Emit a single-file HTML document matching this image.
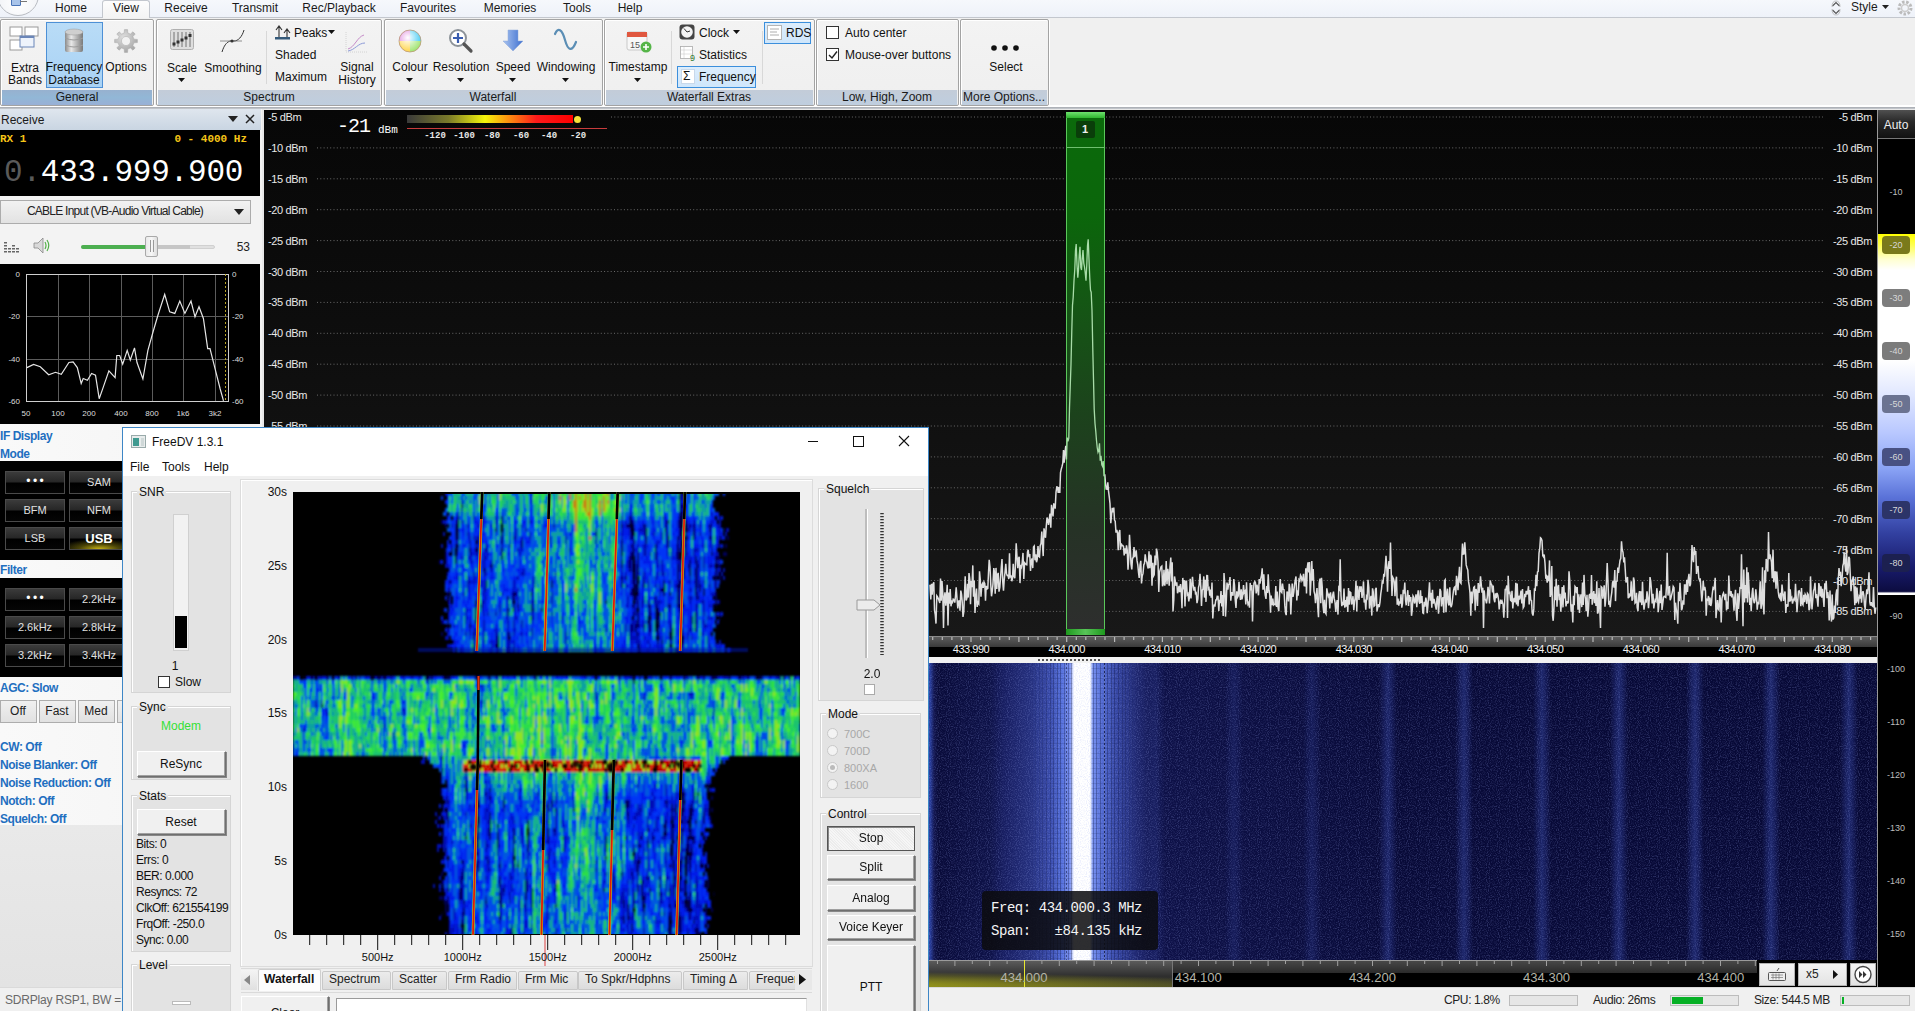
<!DOCTYPE html>
<html><head><meta charset="utf-8"><style>
html,body{margin:0;padding:0;}
body{width:1915px;height:1011px;overflow:hidden;position:relative;background:#f0f0f0;font-family:"Liberation Sans", sans-serif;font-size:12px;color:#000;}
</style></head><body>
<div style="position:absolute;left:0px;top:0px;width:1915px;height:18px;background:linear-gradient(#f6f8fc,#eef2f9);border-bottom:1px solid #c3c7ce;box-sizing:border-box"></div><div style="position:absolute;left:-3px;top:-26px;width:42px;height:42px;border-radius:50%;border:1px solid #b9bcc2;background:radial-gradient(circle at 50% 70%,#ffffff,#e9ecf2);box-sizing:border-box"></div><div style="position:absolute;left:11px;top:-3px;width:8px;height:7px;border:1px solid #4a74b8;background:#a9c4ea;border-radius:1px"></div><div style="position:absolute;left:20px;top:1px;width:7px;height:1px;background:#777"></div><div style="position:absolute;left:102px;top:0px;width:48px;height:19px;background:linear-gradient(#fdfdfd,#f3f3f3);border:1px solid #c3c7ce;border-bottom:none;border-radius:3px 3px 0 0;box-sizing:border-box"></div><div style="position:absolute;left:-129px;width:400px;text-align:center;top:1px;white-space:nowrap;font-size:12px;line-height:14px;color:#1a1a1a">Home</div><div style="position:absolute;left:-74px;width:400px;text-align:center;top:1px;white-space:nowrap;font-size:12px;line-height:14px;color:#1a1a1a">View</div><div style="position:absolute;left:-14px;width:400px;text-align:center;top:1px;white-space:nowrap;font-size:12px;line-height:14px;color:#1a1a1a">Receive</div><div style="position:absolute;left:55px;width:400px;text-align:center;top:1px;white-space:nowrap;font-size:12px;line-height:14px;color:#1a1a1a">Transmit</div><div style="position:absolute;left:139px;width:400px;text-align:center;top:1px;white-space:nowrap;font-size:12px;line-height:14px;color:#1a1a1a">Rec/Playback</div><div style="position:absolute;left:228px;width:400px;text-align:center;top:1px;white-space:nowrap;font-size:12px;line-height:14px;color:#1a1a1a">Favourites</div><div style="position:absolute;left:310px;width:400px;text-align:center;top:1px;white-space:nowrap;font-size:12px;line-height:14px;color:#1a1a1a">Memories</div><div style="position:absolute;left:377px;width:400px;text-align:center;top:1px;white-space:nowrap;font-size:12px;line-height:14px;color:#1a1a1a">Tools</div><div style="position:absolute;left:430px;width:400px;text-align:center;top:1px;white-space:nowrap;font-size:12px;line-height:14px;color:#1a1a1a">Help</div><div style="position:absolute;left:1851px;top:0px;white-space:nowrap;font-size:12px;line-height:14px;color:#1a1a1a">Style</div><svg style="position:absolute;left:1830px;top:0px" width="12" height="16"><path d="M2.5 6 L6 2.5 L9.5 6 M2.5 10 L6 13.5 L9.5 10" fill="none" stroke="#555" stroke-width="1.1"/><path d="M2 7 Q2 1 6 1 Q10 1 10 7 M2 9 Q2 15 6 15 Q10 15 10 9" fill="none" stroke="#aaa" stroke-width="0.7"/></svg><svg style="position:absolute;left:1882px;top:4px" width="8" height="6"><path d="M0 1 L7 1 L3.5 5z" fill="#222"/></svg><svg style="position:absolute;left:1895px;top:-1px" width="20" height="18"><circle cx="10" cy="9" r="6" fill="none" stroke="#bbb" stroke-width="3" stroke-dasharray="2.5 1.6"/><circle cx="10" cy="9" r="3.5" fill="none" stroke="#ccc" stroke-width="1.5"/></svg><div style="position:absolute;left:0px;top:18px;width:1915px;height:90px;background:#f0f0f0"></div><div style="position:absolute;left:0px;top:105px;width:1915px;height:2px;background:#ffffff"></div><div style="position:absolute;left:0px;top:107px;width:1915px;height:2px;background:linear-gradient(#a4a8ae,#c9ccd1)"></div><div style="position:absolute;left:0px;top:19px;width:154px;height:87px;border:1px solid #a3a3a3;border-radius:2px;box-sizing:border-box;background:linear-gradient(#f3f3f3,#efefef);box-shadow:inset 1px 1px 0 #fff, 1px 0 0 #fff"></div><div style="position:absolute;left:2px;top:90px;width:150px;height:15px;background:linear-gradient(#97b1cf,#92b7d6 50%,#98b0d6)"></div><div style="position:absolute;left:-123px;width:400px;text-align:center;top:90px;white-space:nowrap;font-size:12px;line-height:15px;color:#1a1a1a">General</div><div style="position:absolute;left:156px;top:19px;width:226px;height:87px;border:1px solid #a3a3a3;border-radius:2px;box-sizing:border-box;background:linear-gradient(#f3f3f3,#efefef);box-shadow:inset 1px 1px 0 #fff, 1px 0 0 #fff"></div><div style="position:absolute;left:158px;top:90px;width:222px;height:15px;background:linear-gradient(#c3ccd8,#bfcedf)"></div><div style="position:absolute;left:69px;width:400px;text-align:center;top:90px;white-space:nowrap;font-size:12px;line-height:15px;color:#1a1a1a">Spectrum</div><div style="position:absolute;left:384px;top:19px;width:219px;height:87px;border:1px solid #a3a3a3;border-radius:2px;box-sizing:border-box;background:linear-gradient(#f3f3f3,#efefef);box-shadow:inset 1px 1px 0 #fff, 1px 0 0 #fff"></div><div style="position:absolute;left:386px;top:90px;width:215px;height:15px;background:linear-gradient(#c3ccd8,#bfcedf)"></div><div style="position:absolute;left:293px;width:400px;text-align:center;top:90px;white-space:nowrap;font-size:12px;line-height:15px;color:#1a1a1a">Waterfall</div><div style="position:absolute;left:604px;top:19px;width:211px;height:87px;border:1px solid #a3a3a3;border-radius:2px;box-sizing:border-box;background:linear-gradient(#f3f3f3,#efefef);box-shadow:inset 1px 1px 0 #fff, 1px 0 0 #fff"></div><div style="position:absolute;left:606px;top:90px;width:207px;height:15px;background:linear-gradient(#c3ccd8,#bfcedf)"></div><div style="position:absolute;left:509px;width:400px;text-align:center;top:90px;white-space:nowrap;font-size:12px;line-height:15px;color:#1a1a1a">Waterfall Extras</div><div style="position:absolute;left:816px;top:19px;width:143px;height:87px;border:1px solid #a3a3a3;border-radius:2px;box-sizing:border-box;background:linear-gradient(#f3f3f3,#efefef);box-shadow:inset 1px 1px 0 #fff, 1px 0 0 #fff"></div><div style="position:absolute;left:818px;top:90px;width:139px;height:15px;background:linear-gradient(#c3ccd8,#bfcedf)"></div><div style="position:absolute;left:687px;width:400px;text-align:center;top:90px;white-space:nowrap;font-size:12px;line-height:15px;color:#1a1a1a">Low, High, Zoom</div><div style="position:absolute;left:960px;top:19px;width:89px;height:87px;border:1px solid #a3a3a3;border-radius:2px;box-sizing:border-box;background:linear-gradient(#f3f3f3,#efefef);box-shadow:inset 1px 1px 0 #fff, 1px 0 0 #fff"></div><div style="position:absolute;left:962px;top:90px;width:85px;height:15px;background:linear-gradient(#c3ccd8,#bfcedf)"></div><div style="position:absolute;left:804px;width:400px;text-align:center;top:90px;white-space:nowrap;font-size:12px;line-height:15px;color:#1a1a1a">More Options...</div><svg style="position:absolute;left:9px;top:26px" width="30" height="26">
<rect x="1" y="1" width="12" height="9" fill="#fff" stroke="#9a9a9a"/><rect x="16" y="1" width="13" height="9" fill="#fff" stroke="#9a9a9a"/>
<rect x="1" y="14" width="12" height="10" fill="#fff" stroke="#9a9a9a"/><rect x="11" y="10" width="14" height="11" fill="#eef3fb" stroke="#6b86b8"/><rect x="11" y="10" width="14" height="2" fill="#6b86b8"/></svg><div style="position:absolute;left:-175px;width:400px;text-align:center;top:62px;white-space:nowrap;font-size:12px;line-height:13px;color:#111">Extra</div><div style="position:absolute;left:-175px;width:400px;text-align:center;top:74px;white-space:nowrap;font-size:12px;line-height:13px;color:#111">Bands</div><div style="position:absolute;left:46px;top:22px;width:57px;height:66px;background:linear-gradient(#b9dcf7,#a9d2f4);border:1px solid #4d90d6;box-sizing:border-box"></div><svg style="position:absolute;left:63px;top:28px" width="22" height="27">
<defs><linearGradient id="db" x1="0" x2="1"><stop offset="0" stop-color="#8a8a8a"/><stop offset="0.35" stop-color="#e8e8e8"/><stop offset="1" stop-color="#7a7a7a"/></linearGradient></defs>
<rect x="2" y="3" width="18" height="21" rx="2" fill="url(#db)"/>
<ellipse cx="11" cy="4" rx="9" ry="3" fill="#cfcfcf" stroke="#999" stroke-width="0.5"/>
<path d="M2 10 Q11 14 20 10 M2 17 Q11 21 20 17" stroke="#9c9c9c" fill="none"/></svg><div style="position:absolute;left:-126px;width:400px;text-align:center;top:61px;white-space:nowrap;font-size:12px;line-height:13px;color:#111">Frequency</div><div style="position:absolute;left:-126px;width:400px;text-align:center;top:74px;white-space:nowrap;font-size:12px;line-height:13px;color:#111">Database</div><svg style="position:absolute;left:113px;top:28px" width="26" height="26"><defs><radialGradient id="gg" cx="0.4" cy="0.35" r="0.8"><stop offset="0" stop-color="#e0e0e0"/><stop offset="1" stop-color="#9a9a9a"/></radialGradient></defs>
<path d="M21.0 11.2 L24.4 11.4 L24.4 14.6 L21.0 14.8 L19.9 17.4 L22.2 19.9 L19.9 22.2 L17.4 19.9 L14.8 21.0 L14.6 24.4 L11.4 24.4 L11.2 21.0 L8.6 19.9 L6.1 22.2 L3.8 19.9 L6.1 17.4 L5.0 14.8 L1.6 14.6 L1.6 11.4 L5.0 11.2 L6.1 8.6 L3.8 6.1 L6.1 3.8 L8.6 6.1 L11.2 5.0 L11.4 1.6 L14.6 1.6 L14.8 5.0 L17.4 6.1 L19.9 3.8 L22.2 6.1 L19.9 8.6Z M13 8.5 A4.5 4.5 0 1 0 13.01 8.5Z" fill="url(#gg)" fill-rule="evenodd" stroke="#a8a8a8" stroke-width="0.5"/></svg><div style="position:absolute;left:-74px;width:400px;text-align:center;top:61px;white-space:nowrap;font-size:12px;line-height:13px;color:#111">Options</div><svg style="position:absolute;left:170px;top:29px" width="25" height="22">
<rect x="0.5" y="0.5" width="23" height="20" rx="2" fill="#dedede" stroke="#b0b0b0"/>
<path d="M4 3v15M8 3v15M12 3v15M16 3v15M20 3v15" stroke="#666" stroke-width="0.9"/><rect x="2.5" y="13.5" width="3" height="3" fill="#333"/><rect x="6.5" y="11.5" width="3" height="3" fill="#333"/><rect x="10.5" y="9.5" width="3" height="3" fill="#333"/><rect x="14.5" y="7.5" width="3" height="3" fill="#333"/><rect x="18.5" y="5" width="3" height="3" fill="#333"/></svg><div style="position:absolute;left:-18px;width:400px;text-align:center;top:62px;white-space:nowrap;font-size:12px;line-height:13px;color:#111">Scale</div><svg style="position:absolute;left:178px;top:78px" width="8" height="5"><path d="M0 0 L7 0 L3.5 4z" fill="#111"/></svg><svg style="position:absolute;left:220px;top:29px" width="26" height="24"><path d="M2 23 C6 10 12 12 14 12 C18 12 22 8 24 1" fill="none" stroke="#333" stroke-width="1"/>
<path d="M0 12 H22" stroke="#777" stroke-width="0.8"/><circle cx="12" cy="12" r="1.6" fill="#333"/></svg><div style="position:absolute;left:33px;width:400px;text-align:center;top:62px;white-space:nowrap;font-size:12px;line-height:13px;color:#111">Smoothing</div><div style="position:absolute;left:266px;top:31px;width:1px;height:53px;background:#d8d8d8"></div><svg style="position:absolute;left:274px;top:25px" width="18" height="15"><path d="M5 12V2 M2 5 L5 1 L8 5 M13 12V5 M10 8 L13 4 L16 8" fill="none" stroke="#333" stroke-width="1.1"/><rect x="1" y="12" width="15" height="2.5" fill="#355a7a"/></svg><div style="position:absolute;left:294px;top:26px;white-space:nowrap;font-size:12px;line-height:14px;color:#111">Peaks</div><svg style="position:absolute;left:328px;top:30px" width="8" height="5"><path d="M0 0 L7 0 L3.5 4z" fill="#111"/></svg><div style="position:absolute;left:275px;top:48px;white-space:nowrap;font-size:12px;line-height:14px;color:#111">Shaded</div><div style="position:absolute;left:275px;top:70px;white-space:nowrap;font-size:12px;line-height:14px;color:#111">Maximum</div><svg style="position:absolute;left:345px;top:31px" width="24" height="23"><path d="M1 1V21H23" fill="none" stroke="#ccc" stroke-width="0.8" stroke-dasharray="1 1"/>
<path d="M3 18 C10 16 12 6 19 4" fill="none" stroke="#c58ac8" stroke-width="1"/><path d="M3 20 C10 19 13 12 20 12" fill="none" stroke="#8c9ad8" stroke-width="1"/></svg><div style="position:absolute;left:157px;width:400px;text-align:center;top:61px;white-space:nowrap;font-size:12px;line-height:13px;color:#111">Signal</div><div style="position:absolute;left:157px;width:400px;text-align:center;top:74px;white-space:nowrap;font-size:12px;line-height:13px;color:#111">History</div><svg style="position:absolute;left:398px;top:29px" width="24" height="24"><defs>
<radialGradient id="cw" cx="0.4" cy="0.35" r="0.7"><stop offset="0" stop-color="#fff"/><stop offset="1" stop-color="#fff" stop-opacity="0"/></radialGradient></defs>
<circle cx="12" cy="12" r="11" fill="#ff66aa"/><path d="M12 12 L12 1 A11 11 0 0 1 23 12z" fill="#36c8f4"/><path d="M12 12 L23 12 A11 11 0 0 1 12 23z" fill="#9be36a"/><path d="M12 12 L12 23 A11 11 0 0 1 1 12z" fill="#ffd23c"/><path d="M12 12 L1 12 A11 11 0 0 1 12 1z" fill="#d86ad8"/>
<circle cx="12" cy="12" r="11" fill="url(#cw)"/><circle cx="12" cy="12" r="11" fill="none" stroke="#b9a27a" stroke-width="0.8"/></svg><div style="position:absolute;left:210px;width:400px;text-align:center;top:61px;white-space:nowrap;font-size:12px;line-height:13px;color:#111">Colour</div><svg style="position:absolute;left:406px;top:78px" width="8" height="5"><path d="M0 0 L7 0 L3.5 4z" fill="#111"/></svg><svg style="position:absolute;left:448px;top:28px" width="26" height="26"><circle cx="10" cy="10" r="8" fill="#fff" stroke="#8d9399" stroke-width="2"/>
<path d="M10 5v10M5 10h10" stroke="#3a5db0" stroke-width="2.2"/><path d="M16 16 L23 23" stroke="#555" stroke-width="3.2" stroke-linecap="round"/></svg><div style="position:absolute;left:261px;width:400px;text-align:center;top:61px;white-space:nowrap;font-size:12px;line-height:13px;color:#111">Resolution</div><svg style="position:absolute;left:457px;top:78px" width="8" height="5"><path d="M0 0 L7 0 L3.5 4z" fill="#111"/></svg><svg style="position:absolute;left:501px;top:29px" width="24" height="24"><defs><linearGradient id="sp" x1="0" x2="1"><stop offset="0" stop-color="#a9c3ef"/><stop offset="1" stop-color="#3c6fd0"/></linearGradient></defs>
<path d="M7 1H17V12H22L12 22L2 12H7z" fill="url(#sp)" stroke="#8fa9d8" stroke-width="0.5"/></svg><div style="position:absolute;left:313px;width:400px;text-align:center;top:61px;white-space:nowrap;font-size:12px;line-height:13px;color:#111">Speed</div><svg style="position:absolute;left:509px;top:78px" width="8" height="5"><path d="M0 0 L7 0 L3.5 4z" fill="#111"/></svg><svg style="position:absolute;left:553px;top:28px" width="26" height="25"><path d="M2 6 C5 -1 9 1 12 12 C15 23 19 24 23 14" fill="none" stroke="#5b8eb5" stroke-width="2.2" stroke-linecap="round"/></svg><div style="position:absolute;left:366px;width:400px;text-align:center;top:61px;white-space:nowrap;font-size:12px;line-height:13px;color:#111">Windowing</div><svg style="position:absolute;left:562px;top:78px" width="8" height="5"><path d="M0 0 L7 0 L3.5 4z" fill="#111"/></svg><svg style="position:absolute;left:626px;top:28px" width="27" height="26"><rect x="1" y="4" width="20" height="18" rx="2" fill="#f7f7f7" stroke="#c9c9c9"/>
<rect x="1" y="4" width="20" height="5" fill="#e0573f"/><text x="4" y="20" font-size="9" font-family="Liberation Sans" fill="#555">15</text>
<circle cx="20" cy="19" r="5.5" fill="#55b548"/><path d="M20 16v6M17 19h6" stroke="#fff" stroke-width="1.6"/></svg><div style="position:absolute;left:438px;width:400px;text-align:center;top:61px;white-space:nowrap;font-size:12px;line-height:13px;color:#111">Timestamp</div><svg style="position:absolute;left:634px;top:78px" width="8" height="5"><path d="M0 0 L7 0 L3.5 4z" fill="#111"/></svg><div style="position:absolute;left:671px;top:31px;width:1px;height:53px;background:#d8d8d8"></div><svg style="position:absolute;left:679px;top:24px" width="16" height="16"><rect x="0.5" y="0.5" width="15" height="15" rx="3" fill="#444"/><circle cx="8" cy="8" r="5.8" fill="#f4f4f4"/><path d="M8 8 L5 4.5 M8 8 L11 7" stroke="#333" stroke-width="1"/></svg><div style="position:absolute;left:699px;top:26px;white-space:nowrap;font-size:12px;line-height:14px;color:#111">Clock</div><svg style="position:absolute;left:733px;top:30px" width="8" height="5"><path d="M0 0 L7 0 L3.5 4z" fill="#111"/></svg><svg style="position:absolute;left:680px;top:46px" width="18" height="16"><rect x="0.5" y="0.5" width="12" height="12" fill="#fff" stroke="#aaa" stroke-width="0.8"/><path d="M1 4H12M1 8H12M4 1V12" stroke="#ccc" stroke-width="0.6"/><text x="10" y="15" font-size="9" font-family="Liberation Sans" fill="#2f7d2f">9</text></svg><div style="position:absolute;left:699px;top:48px;white-space:nowrap;font-size:12px;line-height:14px;color:#111">Statistics</div><div style="position:absolute;left:677px;top:66px;width:79px;height:22px;background:linear-gradient(#dcedfc,#cfe6fb);border:1px solid #3c8fdc;box-sizing:border-box"></div><div style="position:absolute;left:681px;top:69px;width:14px;height:15px;background:#fff;border:1px solid #c8d8ea;box-sizing:border-box"></div><div style="position:absolute;left:683px;top:69px;white-space:nowrap;font-size:12px;line-height:15px;color:#111">&Sigma;</div><div style="position:absolute;left:699px;top:70px;white-space:nowrap;font-size:12px;line-height:14px;color:#111">Frequency</div><div style="position:absolute;left:762px;top:31px;width:1px;height:53px;background:#d8d8d8"></div><div style="position:absolute;left:764px;top:22px;width:47px;height:22px;background:linear-gradient(#dcedfc,#cfe6fb);border:1px solid #3c8fdc;box-sizing:border-box"></div><svg style="position:absolute;left:767px;top:25px" width="16" height="16"><rect x="0.5" y="0.5" width="14" height="14" fill="#fff" stroke="#b5b5b5"/><path d="M3 4H12M3 7H10M3 10H12" stroke="#999" stroke-width="0.8"/></svg><div style="position:absolute;left:786px;top:26px;white-space:nowrap;font-size:12px;line-height:14px;color:#111">RDS</div><div style="position:absolute;left:826px;top:26px;width:13px;height:13px;background:#fff;border:1px solid #333;box-sizing:border-box"></div><div style="position:absolute;left:845px;top:26px;white-space:nowrap;font-size:12px;line-height:14px;color:#111">Auto center</div><div style="position:absolute;left:826px;top:48px;width:13px;height:13px;background:#fff;border:1px solid #333;box-sizing:border-box"></div><svg style="position:absolute;left:828px;top:50px" width="10" height="10"><path d="M1 5 L4 8 L9 1.5" fill="none" stroke="#222" stroke-width="1.4"/></svg><div style="position:absolute;left:845px;top:48px;white-space:nowrap;font-size:12px;line-height:14px;color:#111">Mouse-over buttons</div><svg style="position:absolute;left:990px;top:44px" width="30" height="8"><circle cx="4" cy="4" r="2.8" fill="#111"/><circle cx="15" cy="4" r="2.8" fill="#111"/><circle cx="26" cy="4" r="2.8" fill="#111"/></svg><div style="position:absolute;left:806px;width:400px;text-align:center;top:61px;white-space:nowrap;font-size:12px;line-height:13px;color:#111">Select</div><div style="position:absolute;left:0px;top:109px;width:262px;height:878px;background:#f3f3f3"></div><div style="position:absolute;left:0px;top:109px;width:261px;height:21px;background:linear-gradient(#dfe6ee,#c9d5e2)"></div><div style="position:absolute;left:1px;top:113px;white-space:nowrap;font-size:12px;line-height:14px;color:#1a1a1a">Receive</div><svg style="position:absolute;left:228px;top:116px" width="11" height="7"><path d="M0 0 L10 0 L5 6z" fill="#222"/></svg><svg style="position:absolute;left:245px;top:114px" width="10" height="10"><path d="M1 1 L9 9 M9 1 L1 9" stroke="#222" stroke-width="1.5"/></svg><div style="position:absolute;left:0px;top:130px;width:260px;height:66px;background:#000"></div><div style="position:absolute;left:0px;top:132px;white-space:nowrap;font-family:'Liberation Mono', monospace;font-weight:bold;font-size:11px;line-height:14px;color:#f5c518">RX 1</div><div style="position:absolute;left:-153px;width:400px;text-align:right;top:132px;white-space:nowrap;font-family:'Liberation Mono', monospace;font-weight:bold;font-size:11px;line-height:14px;color:#f5c518">0 - 4000 Hz</div><div style="position:absolute;left:4px;top:155px;white-space:nowrap;font-family:'Liberation Mono', monospace;font-size:31px;line-height:36px;color:#fff;letter-spacing:-0.2px"><span style="color:#5a5a5a">0.</span>433.999.900</div><div style="position:absolute;left:0px;top:200px;width:251px;height:24px;background:linear-gradient(#f2f2f2,#e2e2e2);border:1px solid #acacac;box-sizing:border-box"></div><div style="position:absolute;left:-85px;width:400px;text-align:center;top:204px;white-space:nowrap;font-size:12px;line-height:15px;color:#222;letter-spacing:-0.75px">CABLE Input (VB-Audio Virtual Cable)</div><svg style="position:absolute;left:234px;top:209px" width="11" height="7"><path d="M0 0 L10 0 L5 6z" fill="#222"/></svg><svg style="position:absolute;left:3px;top:238px" width="18" height="15"><g fill="#666">
<rect x="1" y="4" width="3" height="1.5"/><rect x="1" y="7" width="3" height="1.5"/><rect x="1" y="10" width="3" height="1.5"/><rect x="1" y="13" width="3" height="1.5"/>
<rect x="5" y="10" width="3" height="1.5"/><rect x="5" y="13" width="3" height="1.5"/>
<rect x="9" y="7" width="3" height="1.5"/><rect x="9" y="10" width="3" height="1.5"/><rect x="9" y="13" width="3" height="1.5"/>
<rect x="13" y="10" width="3" height="1.5"/><rect x="13" y="13" width="3" height="1.5"/></g></svg><svg style="position:absolute;left:33px;top:237px" width="18" height="17"><path d="M1 6H5L10 1V16L5 11H1z" fill="#d9d9d9" stroke="#888" stroke-width="0.8"/>
<path d="M12 5 Q14 8.5 12 12 M14 3 Q17.5 8.5 14 14" fill="none" stroke="#54b04a" stroke-width="1.2"/></svg><div style="position:absolute;left:81px;top:245px;width:134px;height:4px;background:#e0e0e0;border:1px solid #d0d0d0;border-radius:2px;box-sizing:border-box"></div><div style="position:absolute;left:81px;top:245px;width:68px;height:4px;background:#4caf50;border-radius:2px"></div><div style="position:absolute;left:158px;top:245px;width:32px;height:4px;background:#c6c6c6"></div><div style="position:absolute;left:145px;top:236px;width:13px;height:21px;background:linear-gradient(90deg,#e9e9e9,#f7f7f7,#dedede);border:1px solid #a9a9a9;border-radius:2px;box-sizing:border-box"></div><div style="position:absolute;left:150px;top:240px;width:1px;height:12px;background:#999"></div><div style="position:absolute;left:153px;top:240px;width:1px;height:12px;background:#999"></div><div style="position:absolute;left:-150px;width:400px;text-align:right;top:240px;white-space:nowrap;font-size:12px;line-height:14px;color:#222">53</div><div style="position:absolute;left:0px;top:264px;width:260px;height:160px;background:#000"></div><svg style="position:absolute;left:0;top:264px" width="260" height="160"><path d="M58.5 10 V137" stroke="#5c5c5c" stroke-width="1"/><path d="M89.5 10 V137" stroke="#5c5c5c" stroke-width="1"/><path d="M121.5 10 V137" stroke="#5c5c5c" stroke-width="1"/><path d="M152.5 10 V137" stroke="#5c5c5c" stroke-width="1"/><path d="M183.5 10 V137" stroke="#5c5c5c" stroke-width="1"/><path d="M215.5 10 V137" stroke="#5c5c5c" stroke-width="1"/><path d="M27 52.5 H229" stroke="#5c5c5c" stroke-width="1"/><path d="M27 95.5 H229" stroke="#5c5c5c" stroke-width="1"/><rect x="26.5" y="10.5" width="202" height="127" fill="none" stroke="#cfcfcf" stroke-width="1"/><path d="M225.5 10 V137" stroke="#b8a52a" stroke-width="1" stroke-dasharray="2 2"/><polyline fill="none" stroke="#e6e6e6" stroke-width="1.2" points="26.9,103.6 33.6,100.5 40.3,102.7 48.7,110.8 55.5,108.3 61.3,110.3 68.9,98.5 73.1,98.0 77.3,103.6 81.2,119.5 83.2,114.5 87.4,116.2 91.6,109.4 95.5,111.1 99.2,134.7 102.5,125.4 108.9,106.9 115.1,113.6 116.8,91.5 119.7,91.5 122.7,100.2 127.2,86.4 130.3,96.0 134.5,83.9 137.0,98.5 142.9,115.0 147.9,86.4 153.0,68.0 158.0,51.0 164.7,30.3 169.7,47.8 174.8,49.4 179.8,37.0 184.9,49.4 191.0,37.0 195.0,52.8 199.0,42.7 203.4,54.5 207.7,84.7 210.0,84.7 215.1,104.9 220.2,125.0 223.5,136.8"/><text x="20" y="13" text-anchor="end" font-size="8" font-family="Liberation Sans" fill="#ddd">0</text><text x="232" y="13" font-size="8" font-family="Liberation Sans" fill="#ddd">0</text><text x="20" y="55" text-anchor="end" font-size="8" font-family="Liberation Sans" fill="#ddd">-20</text><text x="232" y="55" font-size="8" font-family="Liberation Sans" fill="#ddd">-20</text><text x="20" y="98" text-anchor="end" font-size="8" font-family="Liberation Sans" fill="#ddd">-40</text><text x="232" y="98" font-size="8" font-family="Liberation Sans" fill="#ddd">-40</text><text x="20" y="140" text-anchor="end" font-size="8" font-family="Liberation Sans" fill="#ddd">-60</text><text x="232" y="140" font-size="8" font-family="Liberation Sans" fill="#ddd">-60</text><text x="26" y="152" text-anchor="middle" font-size="8" font-family="Liberation Sans" fill="#ddd">50</text><text x="58" y="152" text-anchor="middle" font-size="8" font-family="Liberation Sans" fill="#ddd">100</text><text x="89" y="152" text-anchor="middle" font-size="8" font-family="Liberation Sans" fill="#ddd">200</text><text x="121" y="152" text-anchor="middle" font-size="8" font-family="Liberation Sans" fill="#ddd">400</text><text x="152" y="152" text-anchor="middle" font-size="8" font-family="Liberation Sans" fill="#ddd">800</text><text x="183" y="152" text-anchor="middle" font-size="8" font-family="Liberation Sans" fill="#ddd">1k6</text><text x="215" y="152" text-anchor="middle" font-size="8" font-family="Liberation Sans" fill="#ddd">3k2</text></svg><div style="position:absolute;left:0px;top:424px;width:262px;height:401px;background:linear-gradient(90deg,#f9f9f9,#f4f4f4)"></div><div style="position:absolute;left:0px;top:825px;width:262px;height:162px;background:linear-gradient(#e9e9e9,#e3e3e3)"></div><div style="position:absolute;left:0px;top:429px;white-space:nowrap;font-weight:bold;font-size:12px;line-height:14px;color:#1f6fc0;letter-spacing:-0.45px">IF Display</div><div style="position:absolute;left:0px;top:447px;white-space:nowrap;font-weight:bold;font-size:12px;line-height:14px;color:#1f6fc0;letter-spacing:-0.45px">Mode</div><div style="position:absolute;left:0px;top:461px;width:262px;height:99px;background:#000"></div><div style="position:absolute;left:5px;top:471px;width:60px;height:23px;background:linear-gradient(#3b3b3b,#262626 48%,#000 52%,#050505);border:1px solid #4a4a4a;box-sizing:border-box"></div><div style="position:absolute;left:-165px;width:400px;text-align:center;top:473px;white-space:nowrap;color:#fff;font-size:12px;line-height:16px">&bull;&thinsp;&bull;&thinsp;&bull;</div><div style="position:absolute;left:69px;top:471px;width:60px;height:23px;background:linear-gradient(#3b3b3b,#262626 48%,#000 52%,#050505);border:1px solid #4a4a4a;box-sizing:border-box"></div><div style="position:absolute;left:-101px;width:400px;text-align:center;top:475px;white-space:nowrap;color:#e0e0e0;font-size:11px;line-height:15px">SAM</div><div style="position:absolute;left:5px;top:499px;width:60px;height:23px;background:linear-gradient(#3b3b3b,#262626 48%,#000 52%,#050505);border:1px solid #4a4a4a;box-sizing:border-box"></div><div style="position:absolute;left:-165px;width:400px;text-align:center;top:503px;white-space:nowrap;color:#e0e0e0;font-size:11px;line-height:15px">BFM</div><div style="position:absolute;left:69px;top:499px;width:60px;height:23px;background:linear-gradient(#3b3b3b,#262626 48%,#000 52%,#050505);border:1px solid #4a4a4a;box-sizing:border-box"></div><div style="position:absolute;left:-101px;width:400px;text-align:center;top:503px;white-space:nowrap;color:#e0e0e0;font-size:11px;line-height:15px">NFM</div><div style="position:absolute;left:5px;top:527px;width:60px;height:23px;background:linear-gradient(#3b3b3b,#262626 48%,#000 52%,#050505);border:1px solid #4a4a4a;box-sizing:border-box"></div><div style="position:absolute;left:-165px;width:400px;text-align:center;top:531px;white-space:nowrap;color:#e0e0e0;font-size:11px;line-height:15px">LSB</div><div style="position:absolute;left:69px;top:527px;width:60px;height:23px;background:radial-gradient(ellipse 40px 10px at 50% 100%,#c9b415 0%,rgba(120,110,10,0.6) 50%,transparent 100%),linear-gradient(#3b3b3b,#262626 48%,#000 52%,#050505);border:1px solid #4a4a4a;box-sizing:border-box"></div><div style="position:absolute;left:-101px;width:400px;text-align:center;top:531px;white-space:nowrap;font-weight:bold;color:#fff;font-size:13px;line-height:15px">USB</div><div style="position:absolute;left:0px;top:563px;white-space:nowrap;font-weight:bold;font-size:12px;line-height:14px;color:#1f6fc0;letter-spacing:-0.45px">Filter</div><div style="position:absolute;left:0px;top:578px;width:262px;height:99px;background:#000"></div><div style="position:absolute;left:5px;top:588px;width:60px;height:23px;background:linear-gradient(#3b3b3b,#262626 48%,#000 52%,#050505);border:1px solid #4a4a4a;box-sizing:border-box"></div><div style="position:absolute;left:-165px;width:400px;text-align:center;top:590px;white-space:nowrap;color:#fff;font-size:12px;line-height:16px">&bull;&thinsp;&bull;&thinsp;&bull;</div><div style="position:absolute;left:69px;top:588px;width:60px;height:23px;background:linear-gradient(#3b3b3b,#262626 48%,#000 52%,#050505);border:1px solid #4a4a4a;box-sizing:border-box"></div><div style="position:absolute;left:-101px;width:400px;text-align:center;top:592px;white-space:nowrap;color:#e0e0e0;font-size:11px;line-height:15px">2.2kHz</div><div style="position:absolute;left:5px;top:616px;width:60px;height:23px;background:linear-gradient(#3b3b3b,#262626 48%,#000 52%,#050505);border:1px solid #4a4a4a;box-sizing:border-box"></div><div style="position:absolute;left:-165px;width:400px;text-align:center;top:620px;white-space:nowrap;color:#e0e0e0;font-size:11px;line-height:15px">2.6kHz</div><div style="position:absolute;left:69px;top:616px;width:60px;height:23px;background:linear-gradient(#3b3b3b,#262626 48%,#000 52%,#050505);border:1px solid #4a4a4a;box-sizing:border-box"></div><div style="position:absolute;left:-101px;width:400px;text-align:center;top:620px;white-space:nowrap;color:#e0e0e0;font-size:11px;line-height:15px">2.8kHz</div><div style="position:absolute;left:5px;top:644px;width:60px;height:23px;background:linear-gradient(#3b3b3b,#262626 48%,#000 52%,#050505);border:1px solid #4a4a4a;box-sizing:border-box"></div><div style="position:absolute;left:-165px;width:400px;text-align:center;top:648px;white-space:nowrap;color:#e0e0e0;font-size:11px;line-height:15px">3.2kHz</div><div style="position:absolute;left:69px;top:644px;width:60px;height:23px;background:linear-gradient(#3b3b3b,#262626 48%,#000 52%,#050505);border:1px solid #4a4a4a;box-sizing:border-box"></div><div style="position:absolute;left:-101px;width:400px;text-align:center;top:648px;white-space:nowrap;color:#e0e0e0;font-size:11px;line-height:15px">3.4kHz</div><div style="position:absolute;left:0px;top:681px;white-space:nowrap;font-weight:bold;font-size:12px;line-height:14px;color:#1f6fc0;letter-spacing:-0.45px">AGC: Slow</div><div style="position:absolute;left:0px;top:700px;width:37px;height:23px;background:linear-gradient(#f0f0f0,#e1e1e1);border:1px solid #adadad;box-sizing:border-box"></div><div style="position:absolute;left:-182px;width:400px;text-align:center;top:704px;white-space:nowrap;font-size:12px;line-height:15px;color:#222">Off</div><div style="position:absolute;left:39px;top:700px;width:37px;height:23px;background:linear-gradient(#f0f0f0,#e1e1e1);border:1px solid #adadad;box-sizing:border-box"></div><div style="position:absolute;left:-143px;width:400px;text-align:center;top:704px;white-space:nowrap;font-size:12px;line-height:15px;color:#222">Fast</div><div style="position:absolute;left:78px;top:700px;width:37px;height:23px;background:linear-gradient(#f0f0f0,#e1e1e1);border:1px solid #adadad;box-sizing:border-box"></div><div style="position:absolute;left:-104px;width:400px;text-align:center;top:704px;white-space:nowrap;font-size:12px;line-height:15px;color:#222">Med</div><div style="position:absolute;left:117px;top:700px;width:37px;height:23px;background:linear-gradient(#f0f0f0,#e1e1e1);border:1px solid #adadad;box-sizing:border-box"></div><div style="position:absolute;left:-65px;width:400px;text-align:center;top:704px;white-space:nowrap;font-size:12px;line-height:15px;color:#222">Slow</div><div style="position:absolute;left:0px;top:740px;white-space:nowrap;font-weight:bold;font-size:12px;line-height:14px;color:#1f6fc0;letter-spacing:-0.45px">CW: Off</div><div style="position:absolute;left:0px;top:758px;white-space:nowrap;font-weight:bold;font-size:12px;line-height:14px;color:#1f6fc0;letter-spacing:-0.45px">Noise Blanker: Off</div><div style="position:absolute;left:0px;top:776px;white-space:nowrap;font-weight:bold;font-size:12px;line-height:14px;color:#1f6fc0;letter-spacing:-0.45px">Noise Reduction: Off</div><div style="position:absolute;left:0px;top:794px;white-space:nowrap;font-weight:bold;font-size:12px;line-height:14px;color:#1f6fc0;letter-spacing:-0.45px">Notch: Off</div><div style="position:absolute;left:0px;top:812px;white-space:nowrap;font-weight:bold;font-size:12px;line-height:14px;color:#1f6fc0;letter-spacing:-0.45px">Squelch: Off</div><div style="position:absolute;left:0px;top:987px;width:1915px;height:24px;background:#f0f0f0;border-top:1px solid #dadada;box-sizing:border-box"></div><div style="position:absolute;left:5px;top:993px;white-space:nowrap;font-size:12px;line-height:14px;color:#6a6a6a;letter-spacing:-0.2px">SDRPlay RSP1, BW = 1.6 MHz</div><div style="position:absolute;left:262px;top:109px;width:1653px;height:878px;background:#e8e8e8"></div><div style="position:absolute;left:264px;top:110px;width:1613px;height:526px;background:linear-gradient(#070707,#0d0d0d 40%,#151515 85%,#181818)"></div><svg style="position:absolute;left:264px;top:110px" width="1613" height="526"><path d="M347 7.0 H1559" stroke="#6a6a6a" stroke-width="1" stroke-dasharray="1 2.3"/><path d="M53 37.9 H1559" stroke="#6a6a6a" stroke-width="1" stroke-dasharray="1 2.3"/><path d="M53 68.8 H1559" stroke="#6a6a6a" stroke-width="1" stroke-dasharray="1 2.3"/><path d="M53 99.7 H1559" stroke="#6a6a6a" stroke-width="1" stroke-dasharray="1 2.3"/><path d="M53 130.6 H1559" stroke="#6a6a6a" stroke-width="1" stroke-dasharray="1 2.3"/><path d="M53 161.5 H1559" stroke="#6a6a6a" stroke-width="1" stroke-dasharray="1 2.3"/><path d="M53 192.4 H1559" stroke="#6a6a6a" stroke-width="1" stroke-dasharray="1 2.3"/><path d="M53 223.3 H1559" stroke="#6a6a6a" stroke-width="1" stroke-dasharray="1 2.3"/><path d="M53 254.2 H1559" stroke="#6a6a6a" stroke-width="1" stroke-dasharray="1 2.3"/><path d="M53 285.1 H1559" stroke="#6a6a6a" stroke-width="1" stroke-dasharray="1 2.3"/><path d="M53 316.0 H1559" stroke="#6a6a6a" stroke-width="1" stroke-dasharray="1 2.3"/><path d="M53 346.9 H1559" stroke="#6a6a6a" stroke-width="1" stroke-dasharray="1 2.3"/><path d="M53 377.8 H1559" stroke="#6a6a6a" stroke-width="1" stroke-dasharray="1 2.3"/><path d="M53 408.7 H1559" stroke="#6a6a6a" stroke-width="1" stroke-dasharray="1 2.3"/><path d="M53 439.6 H1559" stroke="#6a6a6a" stroke-width="1" stroke-dasharray="1 2.3"/><path d="M53 470.5 H1559" stroke="#6a6a6a" stroke-width="1" stroke-dasharray="1 2.3"/><path d="M53 501.4 H1559" stroke="#6a6a6a" stroke-width="1" stroke-dasharray="1 2.3"/></svg><div style="position:absolute;left:268px;top:110.0px;white-space:nowrap;font-size:11px;line-height:14px;color:#e8e8e8;letter-spacing:-0.35px">-5 dBm</div><div style="position:absolute;left:1472px;width:400px;text-align:right;top:110.0px;white-space:nowrap;font-size:11px;line-height:14px;color:#e8e8e8;letter-spacing:-0.35px">-5 dBm</div><div style="position:absolute;left:268px;top:140.9px;white-space:nowrap;font-size:11px;line-height:14px;color:#e8e8e8;letter-spacing:-0.35px">-10 dBm</div><div style="position:absolute;left:1472px;width:400px;text-align:right;top:140.9px;white-space:nowrap;font-size:11px;line-height:14px;color:#e8e8e8;letter-spacing:-0.35px">-10 dBm</div><div style="position:absolute;left:268px;top:171.8px;white-space:nowrap;font-size:11px;line-height:14px;color:#e8e8e8;letter-spacing:-0.35px">-15 dBm</div><div style="position:absolute;left:1472px;width:400px;text-align:right;top:171.8px;white-space:nowrap;font-size:11px;line-height:14px;color:#e8e8e8;letter-spacing:-0.35px">-15 dBm</div><div style="position:absolute;left:268px;top:202.7px;white-space:nowrap;font-size:11px;line-height:14px;color:#e8e8e8;letter-spacing:-0.35px">-20 dBm</div><div style="position:absolute;left:1472px;width:400px;text-align:right;top:202.7px;white-space:nowrap;font-size:11px;line-height:14px;color:#e8e8e8;letter-spacing:-0.35px">-20 dBm</div><div style="position:absolute;left:268px;top:233.6px;white-space:nowrap;font-size:11px;line-height:14px;color:#e8e8e8;letter-spacing:-0.35px">-25 dBm</div><div style="position:absolute;left:1472px;width:400px;text-align:right;top:233.6px;white-space:nowrap;font-size:11px;line-height:14px;color:#e8e8e8;letter-spacing:-0.35px">-25 dBm</div><div style="position:absolute;left:268px;top:264.5px;white-space:nowrap;font-size:11px;line-height:14px;color:#e8e8e8;letter-spacing:-0.35px">-30 dBm</div><div style="position:absolute;left:1472px;width:400px;text-align:right;top:264.5px;white-space:nowrap;font-size:11px;line-height:14px;color:#e8e8e8;letter-spacing:-0.35px">-30 dBm</div><div style="position:absolute;left:268px;top:295.4px;white-space:nowrap;font-size:11px;line-height:14px;color:#e8e8e8;letter-spacing:-0.35px">-35 dBm</div><div style="position:absolute;left:1472px;width:400px;text-align:right;top:295.4px;white-space:nowrap;font-size:11px;line-height:14px;color:#e8e8e8;letter-spacing:-0.35px">-35 dBm</div><div style="position:absolute;left:268px;top:326.29999999999995px;white-space:nowrap;font-size:11px;line-height:14px;color:#e8e8e8;letter-spacing:-0.35px">-40 dBm</div><div style="position:absolute;left:1472px;width:400px;text-align:right;top:326.29999999999995px;white-space:nowrap;font-size:11px;line-height:14px;color:#e8e8e8;letter-spacing:-0.35px">-40 dBm</div><div style="position:absolute;left:268px;top:357.2px;white-space:nowrap;font-size:11px;line-height:14px;color:#e8e8e8;letter-spacing:-0.35px">-45 dBm</div><div style="position:absolute;left:1472px;width:400px;text-align:right;top:357.2px;white-space:nowrap;font-size:11px;line-height:14px;color:#e8e8e8;letter-spacing:-0.35px">-45 dBm</div><div style="position:absolute;left:268px;top:388.09999999999997px;white-space:nowrap;font-size:11px;line-height:14px;color:#e8e8e8;letter-spacing:-0.35px">-50 dBm</div><div style="position:absolute;left:1472px;width:400px;text-align:right;top:388.09999999999997px;white-space:nowrap;font-size:11px;line-height:14px;color:#e8e8e8;letter-spacing:-0.35px">-50 dBm</div><div style="position:absolute;left:268px;top:419.0px;white-space:nowrap;font-size:11px;line-height:14px;color:#e8e8e8;letter-spacing:-0.35px">-55 dBm</div><div style="position:absolute;left:1472px;width:400px;text-align:right;top:419.0px;white-space:nowrap;font-size:11px;line-height:14px;color:#e8e8e8;letter-spacing:-0.35px">-55 dBm</div><div style="position:absolute;left:268px;top:449.9px;white-space:nowrap;font-size:11px;line-height:14px;color:#e8e8e8;letter-spacing:-0.35px">-60 dBm</div><div style="position:absolute;left:1472px;width:400px;text-align:right;top:449.9px;white-space:nowrap;font-size:11px;line-height:14px;color:#e8e8e8;letter-spacing:-0.35px">-60 dBm</div><div style="position:absolute;left:268px;top:480.79999999999995px;white-space:nowrap;font-size:11px;line-height:14px;color:#e8e8e8;letter-spacing:-0.35px">-65 dBm</div><div style="position:absolute;left:1472px;width:400px;text-align:right;top:480.79999999999995px;white-space:nowrap;font-size:11px;line-height:14px;color:#e8e8e8;letter-spacing:-0.35px">-65 dBm</div><div style="position:absolute;left:268px;top:511.70000000000005px;white-space:nowrap;font-size:11px;line-height:14px;color:#e8e8e8;letter-spacing:-0.35px">-70 dBm</div><div style="position:absolute;left:1472px;width:400px;text-align:right;top:511.70000000000005px;white-space:nowrap;font-size:11px;line-height:14px;color:#e8e8e8;letter-spacing:-0.35px">-70 dBm</div><div style="position:absolute;left:268px;top:542.5999999999999px;white-space:nowrap;font-size:11px;line-height:14px;color:#e8e8e8;letter-spacing:-0.35px">-75 dBm</div><div style="position:absolute;left:1472px;width:400px;text-align:right;top:542.5999999999999px;white-space:nowrap;font-size:11px;line-height:14px;color:#e8e8e8;letter-spacing:-0.35px">-75 dBm</div><div style="position:absolute;left:268px;top:573.5px;white-space:nowrap;font-size:11px;line-height:14px;color:#e8e8e8;letter-spacing:-0.35px">-80 dBm</div><div style="position:absolute;left:1472px;width:400px;text-align:right;top:573.5px;white-space:nowrap;font-size:11px;line-height:14px;color:#e8e8e8;letter-spacing:-0.35px">-80 dBm</div><div style="position:absolute;left:268px;top:604.4px;white-space:nowrap;font-size:11px;line-height:14px;color:#e8e8e8;letter-spacing:-0.35px">-85 dBm</div><div style="position:absolute;left:1472px;width:400px;text-align:right;top:604.4px;white-space:nowrap;font-size:11px;line-height:14px;color:#e8e8e8;letter-spacing:-0.35px">-85 dBm</div><div style="position:absolute;left:337px;top:115px;white-space:nowrap;font-family:'Liberation Mono', monospace;font-size:20px;line-height:24px;color:#fff;letter-spacing:-1px">-21</div><div style="position:absolute;left:378px;top:123px;white-space:nowrap;font-family:'Liberation Mono', monospace;font-size:11px;line-height:14px;color:#fff">dBm</div><div style="position:absolute;left:407px;top:115px;width:166px;height:8px;background:linear-gradient(90deg,#3a3a3a,#7a7a2a 25%,#f5f50a 47%,#ff8a10 62%,#ff1a1a 78%,#ff0000)"></div><div style="position:absolute;left:574px;top:116px;width:7px;height:7px;border-radius:50%;background:#f4e13a"></div><div style="position:absolute;left:407px;top:128px;width:200px;height:1px;background:#c83c3c"></div><div style="position:absolute;left:235px;width:400px;text-align:center;top:130px;white-space:nowrap;font-family:'Liberation Mono', monospace;font-size:9px;line-height:12px;color:#e8e8e8;font-weight:bold">-120</div><div style="position:absolute;left:264px;width:400px;text-align:center;top:130px;white-space:nowrap;font-family:'Liberation Mono', monospace;font-size:9px;line-height:12px;color:#e8e8e8;font-weight:bold">-100</div><div style="position:absolute;left:292px;width:400px;text-align:center;top:130px;white-space:nowrap;font-family:'Liberation Mono', monospace;font-size:9px;line-height:12px;color:#e8e8e8;font-weight:bold">-80</div><div style="position:absolute;left:321px;width:400px;text-align:center;top:130px;white-space:nowrap;font-family:'Liberation Mono', monospace;font-size:9px;line-height:12px;color:#e8e8e8;font-weight:bold">-60</div><div style="position:absolute;left:349px;width:400px;text-align:center;top:130px;white-space:nowrap;font-family:'Liberation Mono', monospace;font-size:9px;line-height:12px;color:#e8e8e8;font-weight:bold">-40</div><div style="position:absolute;left:378px;width:400px;text-align:center;top:130px;white-space:nowrap;font-family:'Liberation Mono', monospace;font-size:9px;line-height:12px;color:#e8e8e8;font-weight:bold">-20</div><div style="position:absolute;left:1066px;top:112px;width:39px;height:523px;background:linear-gradient(#0b6a0b,#0b660b 20%,#155515 38%,#1c421c 58%,#263226 80%,#2e2e2e);border-left:1px solid #5ac85a;border-right:1px solid #5ac85a;box-sizing:border-box"></div><div style="position:absolute;left:1066px;top:112px;width:39px;height:6px;background:linear-gradient(#6fe06f,#2fb52f)"></div><div style="position:absolute;left:1076px;top:121px;width:19px;height:17px;background:#0a3e0a;border-radius:2px"></div><div style="position:absolute;left:885px;width:400px;text-align:center;top:122px;white-space:nowrap;font-size:11px;line-height:15px;color:#f0f0f0;font-weight:bold">1</div><div style="position:absolute;left:1067px;top:147px;width:37px;height:1px;background:#6fbf6f"></div><div style="position:absolute;left:1066px;top:629px;width:39px;height:6px;background:linear-gradient(90deg,#1e9a1e,#58c458 50%,#1e9a1e)"></div><svg style="position:absolute;left:0;top:0" width="1915" height="640"><defs><clipPath id="cpo"><path d="M0 0H1066V640H0z M1105 0H1915V640H1105z"/></clipPath><clipPath id="cpi"><rect x="1066" y="0" width="39" height="640"/></clipPath><polyline id="trc" fill="none" points="930.0,584.7 930.8,599.4 931.5,583.7 932.2,594.7 933.0,584.2 933.8,582.3 934.5,610.3 935.2,614.3 936.0,623.6 936.8,595.9 937.5,596.9 938.2,598.4 939.0,600.6 939.8,603.0 940.5,578.4 941.2,600.7 942.0,581.1 942.8,593.8 943.5,628.0 944.2,597.8 945.0,592.3 945.8,605.8 946.5,596.9 947.2,584.8 948.0,625.4 948.8,592.5 949.5,603.7 950.2,589.1 951.0,606.3 951.8,601.5 952.5,602.3 953.2,599.2 954.0,599.6 954.8,602.6 955.5,596.0 956.2,587.3 957.0,598.2 957.8,608.4 958.5,601.9 959.2,600.3 960.0,610.7 960.8,590.6 961.5,594.2 962.2,601.6 963.0,616.9 963.8,611.6 964.5,594.5 965.2,576.3 966.0,600.5 966.8,598.7 967.5,583.7 968.2,597.6 969.0,573.0 969.8,579.2 970.5,604.2 971.2,581.1 972.0,587.1 972.8,565.4 973.5,596.8 974.2,580.6 975.0,612.9 975.8,597.2 976.5,588.5 977.2,606.9 978.0,602.3 978.8,603.6 979.5,571.2 980.2,578.9 981.0,596.6 981.8,584.9 982.5,583.6 983.2,587.8 984.0,582.1 984.8,583.8 985.5,600.7 986.2,585.9 987.0,589.0 987.8,588.3 988.5,572.8 989.2,559.9 990.0,566.8 990.8,585.2 991.5,596.3 992.2,591.7 993.0,583.7 993.8,568.1 994.5,572.6 995.2,593.8 996.0,567.9 996.8,589.0 997.5,574.8 998.2,572.9 999.0,591.7 999.8,587.5 1000.5,578.3 1001.2,568.5 1002.0,559.0 1002.8,582.4 1003.5,590.6 1004.2,580.1 1005.0,572.3 1005.8,563.7 1006.5,573.4 1007.2,575.4 1008.0,575.4 1008.8,579.0 1009.5,553.3 1010.2,577.5 1011.0,575.3 1011.8,581.2 1012.5,578.5 1013.2,563.8 1014.0,576.3 1014.8,578.2 1015.5,563.1 1016.2,543.3 1017.0,556.9 1017.8,568.1 1018.5,558.2 1019.2,556.8 1020.0,583.1 1020.8,564.8 1021.5,566.7 1022.2,562.5 1023.0,552.9 1023.8,579.0 1024.5,562.6 1025.2,563.4 1026.0,564.5 1026.8,564.7 1027.5,552.0 1028.2,549.8 1029.0,557.2 1029.8,554.1 1030.5,570.9 1031.2,561.7 1032.0,558.4 1032.8,568.1 1033.5,547.0 1034.2,546.1 1035.0,560.3 1035.8,554.4 1036.5,562.3 1037.2,559.6 1038.0,546.1 1038.8,556.3 1039.5,556.9 1040.2,545.6 1041.0,543.5 1041.8,531.5 1042.5,545.1 1043.2,556.1 1044.0,528.3 1044.8,532.6 1045.5,537.8 1046.2,527.1 1047.0,517.6 1047.8,519.6 1048.5,525.0 1049.2,520.1 1050.0,513.6 1050.8,527.7 1051.5,504.8 1052.2,509.8 1053.0,516.5 1053.8,504.0 1054.5,504.3 1055.2,508.6 1056.0,492.4 1056.8,487.0 1057.5,487.2 1058.2,492.8 1059.0,487.1 1059.8,492.9 1060.5,472.7 1061.2,469.4 1062.0,466.5 1062.8,463.1 1063.5,450.0 1064.2,462.7 1065.0,452.0 1065.8,445.9 1066.5,459.4 1067.2,437.6 1068.0,441.3 1068.8,438.2 1069.5,408.0 1070.2,387.6 1071.0,364.3 1071.8,330.4 1072.5,305.1 1073.2,297.3 1074.0,280.8 1074.8,269.3 1075.5,250.4 1076.2,244.1 1077.0,264.6 1077.8,277.6 1078.5,269.6 1079.2,256.0 1080.0,246.8 1080.8,267.5 1081.5,270.0 1082.2,258.7 1083.0,250.0 1083.8,263.3 1084.5,267.0 1085.2,272.6 1086.0,280.7 1086.8,264.5 1087.5,245.5 1088.2,239.2 1089.0,259.7 1089.8,278.2 1090.5,290.2 1091.2,292.2 1092.0,310.3 1092.8,349.9 1093.5,379.3 1094.2,409.1 1095.0,423.5 1095.8,431.6 1096.5,440.5 1097.2,447.5 1098.0,452.2 1098.8,450.1 1099.5,443.3 1100.2,460.6 1101.0,455.8 1101.8,464.8 1102.5,466.2 1103.2,461.0 1104.0,476.2 1104.8,474.4 1105.5,483.5 1106.2,489.0 1107.0,489.1 1107.8,482.3 1108.5,490.9 1109.2,496.3 1110.0,503.6 1110.8,523.3 1111.5,515.3 1112.2,507.9 1113.0,512.3 1113.8,507.6 1114.5,520.1 1115.2,521.2 1116.0,532.6 1116.8,529.8 1117.5,533.1 1118.2,550.3 1119.0,532.6 1119.8,530.1 1120.5,549.7 1121.2,543.4 1122.0,545.6 1122.8,545.5 1123.5,546.5 1124.2,555.5 1125.0,548.4 1125.8,553.6 1126.5,545.3 1127.2,549.7 1128.0,569.8 1128.8,558.1 1129.5,534.8 1130.2,546.6 1131.0,563.9 1131.8,569.4 1132.5,558.1 1133.2,557.7 1134.0,547.0 1134.8,557.3 1135.5,553.7 1136.2,550.3 1137.0,560.4 1137.8,564.9 1138.5,572.3 1139.2,578.0 1140.0,564.9 1140.8,560.8 1141.5,583.4 1142.2,576.1 1143.0,573.4 1143.8,564.8 1144.5,563.4 1145.2,554.3 1146.0,560.6 1146.8,562.1 1147.5,566.1 1148.2,568.5 1149.0,551.3 1149.8,568.1 1150.5,554.8 1151.2,556.6 1152.0,585.7 1152.8,562.7 1153.5,576.1 1154.2,574.8 1155.0,555.6 1155.8,565.1 1156.5,548.6 1157.2,552.1 1158.0,561.7 1158.8,592.0 1159.5,572.3 1160.2,569.6 1161.0,566.9 1161.8,566.2 1162.5,586.1 1163.2,584.4 1164.0,569.8 1164.8,585.6 1165.5,578.9 1166.2,561.0 1167.0,584.1 1167.8,568.9 1168.5,574.2 1169.2,585.6 1170.0,566.7 1170.8,557.6 1171.5,581.4 1172.2,562.2 1173.0,611.4 1173.8,599.7 1174.5,576.4 1175.2,580.3 1176.0,586.0 1176.8,582.2 1177.5,593.3 1178.2,591.3 1179.0,585.9 1179.8,592.1 1180.5,584.1 1181.2,590.5 1182.0,608.3 1182.8,577.9 1183.5,589.4 1184.2,579.9 1185.0,606.6 1185.8,581.5 1186.5,581.3 1187.2,594.8 1188.0,593.6 1188.8,601.4 1189.5,596.8 1190.2,578.9 1191.0,598.4 1191.8,584.8 1192.5,576.7 1193.2,584.9 1194.0,590.7 1194.8,586.8 1195.5,593.5 1196.2,592.9 1197.0,603.1 1197.8,599.2 1198.5,587.4 1199.2,584.7 1200.0,573.8 1200.8,587.4 1201.5,605.9 1202.2,590.3 1203.0,589.0 1203.8,576.4 1204.5,597.6 1205.2,579.9 1206.0,601.9 1206.8,575.6 1207.5,575.7 1208.2,589.1 1209.0,588.0 1209.8,595.7 1210.5,589.6 1211.2,597.7 1212.0,582.6 1212.8,618.5 1213.5,607.5 1214.2,605.2 1215.0,605.7 1215.8,599.9 1216.5,599.8 1217.2,596.3 1218.0,596.4 1218.8,610.9 1219.5,599.8 1220.2,603.0 1221.0,591.1 1221.8,606.4 1222.5,594.9 1223.2,615.9 1224.0,573.1 1224.8,585.2 1225.5,616.6 1226.2,603.7 1227.0,582.5 1227.8,589.6 1228.5,584.7 1229.2,584.1 1230.0,577.0 1230.8,600.6 1231.5,592.6 1232.2,592.8 1233.0,595.8 1233.8,579.0 1234.5,585.0 1235.2,599.6 1236.0,608.0 1236.8,591.3 1237.5,597.4 1238.2,596.1 1239.0,581.9 1239.8,594.0 1240.5,600.0 1241.2,589.4 1242.0,599.4 1242.8,594.8 1243.5,585.0 1244.2,592.6 1245.0,591.2 1245.8,604.5 1246.5,582.2 1247.2,598.4 1248.0,604.3 1248.8,602.7 1249.5,607.7 1250.2,582.9 1251.0,590.5 1251.8,585.0 1252.5,621.5 1253.2,595.2 1254.0,583.2 1254.8,581.5 1255.5,583.0 1256.2,593.5 1257.0,584.7 1257.8,589.9 1258.5,595.3 1259.2,579.1 1260.0,583.7 1260.8,578.4 1261.5,575.3 1262.2,568.4 1263.0,589.6 1263.8,574.3 1264.5,588.1 1265.2,595.1 1266.0,598.9 1266.8,586.1 1267.5,592.9 1268.2,574.2 1269.0,590.2 1269.8,595.0 1270.5,612.7 1271.2,595.5 1272.0,605.2 1272.8,598.7 1273.5,604.9 1274.2,604.1 1275.0,604.5 1275.8,586.1 1276.5,607.0 1277.2,591.5 1278.0,607.2 1278.8,611.1 1279.5,595.2 1280.2,579.1 1281.0,591.4 1281.8,592.5 1282.5,583.6 1283.2,589.3 1284.0,589.7 1284.8,605.4 1285.5,612.5 1286.2,615.1 1287.0,591.5 1287.8,593.2 1288.5,601.5 1289.2,583.9 1290.0,588.8 1290.8,614.4 1291.5,598.6 1292.2,583.5 1293.0,596.8 1293.8,592.2 1294.5,584.8 1295.2,580.5 1296.0,576.5 1296.8,600.5 1297.5,590.2 1298.2,595.7 1299.0,579.6 1299.8,580.7 1300.5,575.2 1301.2,576.6 1302.0,580.6 1302.8,579.0 1303.5,573.9 1304.2,585.7 1305.0,585.9 1305.8,568.3 1306.5,593.4 1307.2,568.5 1308.0,562.4 1308.8,572.4 1309.5,562.0 1310.2,595.6 1311.0,580.3 1311.8,561.0 1312.5,580.8 1313.2,569.0 1314.0,591.1 1314.8,594.5 1315.5,603.1 1316.2,595.8 1317.0,588.0 1317.8,608.0 1318.5,617.3 1319.2,583.3 1320.0,578.5 1320.8,603.2 1321.5,577.8 1322.2,586.5 1323.0,605.3 1323.8,613.3 1324.5,599.7 1325.2,612.4 1326.0,613.9 1326.8,588.3 1327.5,592.5 1328.2,595.9 1329.0,593.6 1329.8,608.5 1330.5,592.4 1331.2,598.6 1332.0,603.3 1332.8,594.5 1333.5,591.6 1334.2,598.4 1335.0,602.2 1335.8,611.9 1336.5,603.9 1337.2,600.1 1338.0,614.6 1338.8,587.8 1339.5,589.1 1340.2,559.3 1341.0,595.6 1341.8,606.2 1342.5,601.9 1343.2,605.0 1344.0,588.5 1344.8,607.6 1345.5,600.1 1346.2,606.6 1347.0,596.5 1347.8,611.9 1348.5,588.0 1349.2,604.6 1350.0,592.0 1350.8,592.6 1351.5,604.5 1352.2,602.9 1353.0,596.2 1353.8,610.2 1354.5,601.8 1355.2,598.2 1356.0,580.8 1356.8,611.5 1357.5,585.8 1358.2,591.8 1359.0,599.9 1359.8,586.4 1360.5,592.0 1361.2,586.3 1362.0,597.9 1362.8,592.1 1363.5,581.4 1364.2,602.6 1365.0,599.5 1365.8,609.7 1366.5,596.5 1367.2,597.9 1368.0,579.8 1368.8,587.2 1369.5,608.6 1370.2,600.4 1371.0,595.8 1371.8,615.6 1372.5,588.3 1373.2,591.7 1374.0,606.1 1374.8,605.4 1375.5,589.4 1376.2,587.9 1377.0,611.4 1377.8,607.1 1378.5,604.1 1379.2,607.1 1380.0,602.2 1380.8,593.7 1381.5,589.0 1382.2,581.8 1383.0,583.6 1383.8,573.9 1384.5,576.7 1385.2,568.1 1386.0,555.9 1386.8,568.0 1387.5,591.7 1388.2,568.5 1389.0,561.1 1389.8,569.0 1390.5,542.6 1391.2,571.5 1392.0,595.9 1392.8,577.4 1393.5,578.8 1394.2,581.5 1395.0,596.2 1395.8,581.3 1396.5,576.7 1397.2,604.7 1398.0,598.5 1398.8,605.7 1399.5,601.4 1400.2,603.6 1401.0,594.3 1401.8,607.6 1402.5,603.3 1403.2,589.7 1404.0,593.7 1404.8,582.5 1405.5,599.7 1406.2,605.3 1407.0,597.0 1407.8,590.2 1408.5,605.9 1409.2,595.1 1410.0,599.4 1410.8,597.0 1411.5,615.8 1412.2,610.1 1413.0,595.9 1413.8,597.4 1414.5,603.5 1415.2,601.0 1416.0,594.3 1416.8,607.3 1417.5,596.8 1418.2,590.4 1419.0,601.3 1419.8,603.7 1420.5,590.4 1421.2,602.8 1422.0,596.1 1422.8,612.9 1423.5,613.4 1424.2,601.7 1425.0,606.7 1425.8,597.6 1426.5,601.2 1427.2,613.3 1428.0,604.5 1428.8,593.3 1429.5,582.3 1430.2,600.8 1431.0,592.7 1431.8,607.8 1432.5,589.7 1433.2,603.7 1434.0,598.9 1434.8,602.5 1435.5,606.2 1436.2,609.6 1437.0,598.5 1437.8,596.0 1438.5,613.8 1439.2,603.5 1440.0,588.9 1440.8,591.3 1441.5,606.5 1442.2,600.2 1443.0,597.1 1443.8,612.7 1444.5,580.8 1445.2,579.8 1446.0,612.2 1446.8,593.3 1447.5,588.7 1448.2,602.5 1449.0,605.5 1449.8,587.2 1450.5,604.5 1451.2,607.2 1452.0,603.8 1452.8,596.5 1453.5,590.6 1454.2,587.7 1455.0,586.8 1455.8,595.3 1456.5,575.8 1457.2,580.1 1458.0,590.1 1458.8,576.6 1459.5,566.7 1460.2,582.2 1461.0,583.3 1461.8,557.5 1462.5,543.6 1463.2,554.1 1464.0,553.9 1464.8,542.3 1465.5,552.6 1466.2,564.9 1467.0,567.7 1467.8,570.1 1468.5,581.4 1469.2,585.5 1470.0,593.1 1470.8,615.8 1471.5,591.5 1472.2,603.5 1473.0,593.0 1473.8,587.4 1474.5,586.7 1475.2,610.4 1476.0,589.0 1476.8,592.4 1477.5,606.0 1478.2,583.0 1479.0,592.9 1479.8,586.7 1480.5,576.4 1481.2,583.7 1482.0,592.6 1482.8,587.8 1483.5,628.0 1484.2,590.4 1485.0,599.4 1485.8,600.1 1486.5,603.3 1487.2,598.2 1488.0,586.9 1488.8,593.9 1489.5,603.5 1490.2,580.4 1491.0,583.7 1491.8,585.1 1492.5,592.4 1493.2,585.6 1494.0,598.9 1494.8,602.3 1495.5,593.4 1496.2,598.2 1497.0,592.9 1497.8,595.3 1498.5,599.3 1499.2,609.5 1500.0,602.6 1500.8,599.6 1501.5,603.8 1502.2,601.6 1503.0,604.3 1503.8,617.8 1504.5,606.0 1505.2,589.4 1506.0,589.4 1506.8,585.5 1507.5,617.9 1508.2,575.8 1509.0,594.1 1509.8,591.5 1510.5,600.2 1511.2,600.9 1512.0,590.8 1512.8,608.4 1513.5,600.5 1514.2,597.9 1515.0,602.3 1515.8,582.7 1516.5,604.5 1517.2,583.6 1518.0,606.2 1518.8,595.7 1519.5,599.6 1520.2,597.0 1521.0,590.6 1521.8,603.4 1522.5,589.1 1523.2,607.8 1524.0,606.3 1524.8,593.9 1525.5,597.2 1526.2,590.9 1527.0,594.5 1527.8,591.7 1528.5,586.2 1529.2,604.5 1530.0,590.0 1530.8,600.0 1531.5,600.6 1532.2,613.2 1533.0,615.6 1533.8,608.9 1534.5,588.4 1535.2,590.9 1536.0,574.9 1536.8,586.1 1537.5,572.0 1538.2,571.5 1539.0,553.1 1539.8,548.0 1540.5,537.9 1541.2,538.5 1542.0,540.7 1542.8,555.7 1543.5,556.8 1544.2,554.6 1545.0,563.3 1545.8,578.6 1546.5,576.9 1547.2,582.7 1548.0,575.5 1548.8,581.1 1549.5,560.4 1550.2,596.9 1551.0,593.1 1551.8,565.9 1552.5,615.1 1553.2,620.8 1554.0,607.7 1554.8,586.6 1555.5,600.3 1556.2,578.7 1557.0,606.8 1557.8,587.4 1558.5,585.0 1559.2,600.2 1560.0,593.7 1560.8,611.7 1561.5,602.1 1562.2,587.1 1563.0,607.4 1563.8,585.4 1564.5,598.4 1565.2,592.5 1566.0,606.4 1566.8,601.0 1567.5,603.0 1568.2,602.8 1569.0,571.3 1569.8,580.9 1570.5,600.1 1571.2,611.8 1572.0,604.2 1572.8,622.5 1573.5,595.8 1574.2,605.1 1575.0,586.4 1575.8,587.5 1576.5,593.1 1577.2,587.0 1578.0,609.7 1578.8,594.2 1579.5,613.0 1580.2,599.0 1581.0,594.3 1581.8,607.1 1582.5,582.4 1583.2,604.9 1584.0,574.9 1584.8,594.7 1585.5,598.9 1586.2,611.2 1587.0,594.9 1587.8,616.8 1588.5,608.9 1589.2,595.1 1590.0,594.3 1590.8,598.8 1591.5,574.9 1592.2,604.7 1593.0,595.1 1593.8,591.1 1594.5,603.3 1595.2,593.9 1596.0,605.9 1596.8,581.2 1597.5,613.6 1598.2,612.0 1599.0,588.1 1599.8,608.4 1600.5,628.0 1601.2,586.8 1602.0,587.6 1602.8,598.8 1603.5,591.6 1604.2,585.4 1605.0,606.8 1605.8,598.4 1606.5,580.1 1607.2,563.0 1608.0,582.6 1608.8,604.8 1609.5,600.9 1610.2,607.1 1611.0,597.8 1611.8,592.3 1612.5,583.0 1613.2,580.8 1614.0,587.6 1614.8,570.0 1615.5,601.1 1616.2,581.5 1617.0,581.2 1617.8,567.6 1618.5,572.8 1619.2,566.5 1620.0,560.4 1620.8,558.3 1621.5,541.2 1622.2,549.7 1623.0,552.4 1623.8,562.5 1624.5,557.2 1625.2,568.7 1626.0,582.5 1626.8,580.3 1627.5,576.9 1628.2,598.3 1629.0,593.5 1629.8,596.4 1630.5,595.2 1631.2,581.4 1632.0,600.8 1632.8,599.0 1633.5,577.5 1634.2,580.7 1635.0,603.1 1635.8,602.2 1636.5,592.9 1637.2,607.7 1638.0,611.2 1638.8,595.0 1639.5,591.1 1640.2,602.5 1641.0,591.3 1641.8,605.1 1642.5,581.8 1643.2,601.0 1644.0,609.6 1644.8,603.8 1645.5,599.4 1646.2,602.6 1647.0,591.3 1647.8,598.1 1648.5,608.2 1649.2,600.0 1650.0,577.0 1650.8,581.8 1651.5,590.6 1652.2,603.5 1653.0,593.9 1653.8,608.4 1654.5,603.2 1655.2,600.0 1656.0,601.2 1656.8,588.2 1657.5,593.7 1658.2,612.3 1659.0,603.8 1659.8,590.8 1660.5,603.1 1661.2,584.6 1662.0,610.0 1662.8,603.4 1663.5,597.2 1664.2,596.3 1665.0,596.9 1665.8,597.4 1666.5,585.7 1667.2,552.7 1668.0,595.6 1668.8,587.2 1669.5,586.8 1670.2,600.3 1671.0,597.9 1671.8,594.2 1672.5,591.3 1673.2,586.4 1674.0,587.7 1674.8,620.0 1675.5,602.7 1676.2,608.5 1677.0,613.6 1677.8,623.7 1678.5,591.7 1679.2,601.3 1680.0,582.9 1680.8,596.8 1681.5,610.3 1682.2,608.4 1683.0,600.3 1683.8,604.7 1684.5,585.0 1685.2,585.0 1686.0,594.6 1686.8,579.9 1687.5,591.9 1688.2,579.4 1689.0,573.9 1689.8,586.2 1690.5,584.0 1691.2,569.9 1692.0,545.1 1692.8,558.5 1693.5,562.1 1694.2,547.1 1695.0,552.9 1695.8,551.1 1696.5,574.0 1697.2,568.5 1698.0,566.1 1698.8,578.2 1699.5,580.2 1700.2,578.4 1701.0,589.7 1701.8,601.4 1702.5,594.3 1703.2,580.8 1704.0,590.3 1704.8,586.8 1705.5,590.9 1706.2,615.8 1707.0,599.4 1707.8,600.0 1708.5,596.0 1709.2,605.1 1710.0,597.5 1710.8,606.0 1711.5,602.9 1712.2,594.3 1713.0,587.9 1713.8,589.0 1714.5,585.1 1715.2,577.8 1716.0,618.1 1716.8,607.9 1717.5,600.1 1718.2,609.1 1719.0,610.2 1719.8,595.1 1720.5,600.4 1721.2,622.6 1722.0,598.3 1722.8,594.8 1723.5,593.1 1724.2,595.5 1725.0,600.2 1725.8,593.9 1726.5,610.4 1727.2,601.6 1728.0,609.1 1728.8,575.6 1729.5,589.5 1730.2,596.1 1731.0,591.2 1731.8,597.4 1732.5,593.9 1733.2,597.9 1734.0,610.6 1734.8,597.1 1735.5,589.9 1736.2,610.6 1737.0,620.9 1737.8,593.2 1738.5,609.0 1739.2,600.6 1740.0,587.8 1740.8,588.0 1741.5,554.3 1742.2,590.6 1743.0,626.3 1743.8,569.5 1744.5,602.5 1745.2,585.1 1746.0,598.1 1746.8,567.2 1747.5,602.4 1748.2,572.3 1749.0,587.4 1749.8,604.9 1750.5,597.7 1751.2,611.2 1752.0,594.3 1752.8,587.8 1753.5,599.5 1754.2,603.2 1755.0,600.4 1755.8,589.4 1756.5,596.2 1757.2,609.8 1758.0,601.7 1758.8,604.4 1759.5,595.4 1760.2,581.3 1761.0,608.8 1761.8,603.5 1762.5,567.3 1763.2,603.1 1764.0,614.4 1764.8,570.3 1765.5,582.8 1766.2,558.9 1767.0,563.4 1767.8,571.6 1768.5,532.1 1769.2,559.2 1770.0,554.4 1770.8,558.3 1771.5,562.2 1772.2,578.1 1773.0,549.8 1773.8,582.3 1774.5,576.1 1775.2,571.2 1776.0,588.8 1776.8,571.6 1777.5,580.5 1778.2,591.4 1779.0,597.0 1779.8,598.3 1780.5,592.9 1781.2,601.5 1782.0,584.6 1782.8,592.7 1783.5,600.9 1784.2,595.7 1785.0,591.5 1785.8,613.0 1786.5,604.2 1787.2,606.2 1788.0,605.9 1788.8,572.9 1789.5,601.8 1790.2,589.2 1791.0,599.3 1791.8,597.8 1792.5,603.6 1793.2,600.5 1794.0,598.7 1794.8,600.0 1795.5,583.7 1796.2,596.6 1797.0,612.3 1797.8,600.2 1798.5,591.2 1799.2,590.8 1800.0,593.4 1800.8,606.1 1801.5,588.0 1802.2,603.2 1803.0,604.8 1803.8,594.9 1804.5,602.1 1805.2,594.4 1806.0,596.2 1806.8,603.8 1807.5,593.5 1808.2,594.6 1809.0,610.2 1809.8,607.9 1810.5,576.4 1811.2,596.2 1812.0,609.5 1812.8,599.3 1813.5,590.6 1814.2,589.1 1815.0,582.9 1815.8,598.1 1816.5,594.1 1817.2,599.1 1818.0,606.6 1818.8,583.1 1819.5,586.0 1820.2,596.5 1821.0,586.4 1821.8,597.6 1822.5,588.8 1823.2,596.9 1824.0,607.0 1824.8,583.3 1825.5,589.4 1826.2,580.7 1827.0,598.2 1827.8,592.1 1828.5,598.8 1829.2,620.5 1830.0,590.5 1830.8,612.0 1831.5,621.6 1832.2,594.4 1833.0,619.4 1833.8,617.8 1834.5,605.5 1835.2,612.1 1836.0,594.3 1836.8,589.4 1837.5,605.5 1838.2,581.4 1839.0,568.0 1839.8,575.9 1840.5,571.9 1841.2,586.1 1842.0,579.6 1842.8,565.9 1843.5,563.3 1844.2,552.2 1845.0,564.8 1845.8,571.6 1846.5,546.6 1847.2,575.1 1848.0,572.3 1848.8,556.8 1849.5,558.4 1850.2,573.3 1851.0,591.2 1851.8,582.0 1852.5,580.3 1853.2,576.3 1854.0,587.3 1854.8,605.2 1855.5,586.4 1856.2,603.2 1857.0,587.5 1857.8,600.8 1858.5,602.3 1859.2,596.6 1860.0,598.5 1860.8,585.2 1861.5,602.8 1862.2,594.1 1863.0,591.2 1863.8,595.4 1864.5,605.2 1865.2,609.0 1866.0,597.8 1866.8,589.3 1867.5,594.1 1868.2,587.0 1869.0,572.3 1869.8,602.1 1870.5,605.6 1871.2,602.2 1872.0,605.7 1872.8,606.4 1873.5,587.0 1874.2,605.2 1875.0,613.8 1875.8,607.3"/></defs><use href="#trc" clip-path="url(#cpo)" stroke="#dedede" stroke-width="1.5"/><use href="#trc" clip-path="url(#cpi)" stroke="#a8dca8" stroke-width="1.3"/></svg><div style="position:absolute;left:264px;top:636px;width:1613px;height:11px;background:linear-gradient(#8a8a8a 0,#8a8a8a 1px,#5c5c5c 1px,#3a3a3a)"></div><div style="position:absolute;left:264px;top:647px;width:1613px;height:10px;background:#000"></div><svg style="position:absolute;left:0;top:636px" width="1915" height="10"><path d="M492.5 1v5M502.1 1v3M511.6 1v3M521.2 1v3M530.8 1v3M540.4 1v5M549.9 1v3M559.5 1v3M569.1 1v3M578.6 1v3M588.2 1v5M597.8 1v3M607.3 1v3M616.9 1v3M626.5 1v3M636.1 1v5M645.6 1v3M655.2 1v3M664.8 1v3M674.3 1v3M683.9 1v5M693.5 1v3M703.0 1v3M712.6 1v3M722.2 1v3M731.8 1v5M741.3 1v3M750.9 1v3M760.5 1v3M770.0 1v3M779.6 1v5M789.2 1v3M798.7 1v3M808.3 1v3M817.9 1v3M827.5 1v5M837.0 1v3M846.6 1v3M856.2 1v3M865.7 1v3M875.3 1v5M884.9 1v3M894.4 1v3M904.0 1v3M913.6 1v3M923.2 1v5M932.7 1v3M942.3 1v3M951.9 1v3M961.4 1v3M971.0 1v5M980.6 1v3M990.1 1v3M999.7 1v3M1009.3 1v3M1018.9 1v5M1028.4 1v3M1038.0 1v3M1047.6 1v3M1057.1 1v3M1066.7 1v5M1076.3 1v3M1085.8 1v3M1095.4 1v3M1105.0 1v3M1114.6 1v5M1124.1 1v3M1133.7 1v3M1143.3 1v3M1152.8 1v3M1162.4 1v5M1172.0 1v3M1181.5 1v3M1191.1 1v3M1200.7 1v3M1210.3 1v5M1219.8 1v3M1229.4 1v3M1239.0 1v3M1248.5 1v3M1258.1 1v5M1267.7 1v3M1277.2 1v3M1286.8 1v3M1296.4 1v3M1306.0 1v5M1315.5 1v3M1325.1 1v3M1334.7 1v3M1344.2 1v3M1353.8 1v5M1363.4 1v3M1372.9 1v3M1382.5 1v3M1392.1 1v3M1401.7 1v5M1411.2 1v3M1420.8 1v3M1430.4 1v3M1439.9 1v3M1449.5 1v5M1459.1 1v3M1468.6 1v3M1478.2 1v3M1487.8 1v3M1497.3 1v5M1506.9 1v3M1516.5 1v3M1526.1 1v3M1535.6 1v3M1545.2 1v5M1554.8 1v3M1564.3 1v3M1573.9 1v3M1583.5 1v3M1593.0 1v5M1602.6 1v3M1612.2 1v3M1621.8 1v3M1631.3 1v3M1640.9 1v5M1650.5 1v3M1660.0 1v3M1669.6 1v3M1679.2 1v3M1688.7 1v5M1698.3 1v3M1707.9 1v3M1717.5 1v3M1727.0 1v3M1736.6 1v5M1746.2 1v3M1755.7 1v3M1765.3 1v3M1774.9 1v3M1784.4 1v5M1794.0 1v3M1803.6 1v3M1813.2 1v3M1822.7 1v3M1832.3 1v5M1841.9 1v3M1851.4 1v3M1861.0 1v3M1870.6 1v3" stroke="#b8b8b8" stroke-width="1.2"/></svg><div style="position:absolute;left:771.0px;width:400px;text-align:center;top:642px;white-space:nowrap;font-size:11px;line-height:14px;color:#f2f2f2;letter-spacing:-0.5px">433.990</div><div style="position:absolute;left:866.7px;width:400px;text-align:center;top:642px;white-space:nowrap;font-size:11px;line-height:14px;color:#f2f2f2;letter-spacing:-0.5px">434.000</div><div style="position:absolute;left:962.4000000000001px;width:400px;text-align:center;top:642px;white-space:nowrap;font-size:11px;line-height:14px;color:#f2f2f2;letter-spacing:-0.5px">434.010</div><div style="position:absolute;left:1058.1000000000001px;width:400px;text-align:center;top:642px;white-space:nowrap;font-size:11px;line-height:14px;color:#f2f2f2;letter-spacing:-0.5px">434.020</div><div style="position:absolute;left:1153.8000000000002px;width:400px;text-align:center;top:642px;white-space:nowrap;font-size:11px;line-height:14px;color:#f2f2f2;letter-spacing:-0.5px">434.030</div><div style="position:absolute;left:1249.5px;width:400px;text-align:center;top:642px;white-space:nowrap;font-size:11px;line-height:14px;color:#f2f2f2;letter-spacing:-0.5px">434.040</div><div style="position:absolute;left:1345.2px;width:400px;text-align:center;top:642px;white-space:nowrap;font-size:11px;line-height:14px;color:#f2f2f2;letter-spacing:-0.5px">434.050</div><div style="position:absolute;left:1440.9px;width:400px;text-align:center;top:642px;white-space:nowrap;font-size:11px;line-height:14px;color:#f2f2f2;letter-spacing:-0.5px">434.060</div><div style="position:absolute;left:1536.6px;width:400px;text-align:center;top:642px;white-space:nowrap;font-size:11px;line-height:14px;color:#f2f2f2;letter-spacing:-0.5px">434.070</div><div style="position:absolute;left:1632.3000000000002px;width:400px;text-align:center;top:642px;white-space:nowrap;font-size:11px;line-height:14px;color:#f2f2f2;letter-spacing:-0.5px">434.080</div><div style="position:absolute;left:264px;top:657px;width:1613px;height:6px;background:#f2f2f2"></div><svg style="position:absolute;left:1038px;top:658px" width="64" height="4"><path d="M0 2 H62" stroke="#555" stroke-width="2" stroke-dasharray="2 2"/></svg><svg style="position:absolute;left:264px;top:663px" width="1613" height="297" ><defs><linearGradient id="wfb" x1="0" x2="1"><stop offset="0.4129" stop-color="#2a40a0"/><stop offset="0.4154" stop-color="#121650"/><stop offset="0.4179" stop-color="#090b3a"/><stop offset="0.4501" stop-color="#0e1248"/><stop offset="0.4582" stop-color="#171d60"/><stop offset="0.4749" stop-color="#25307e"/><stop offset="0.4873" stop-color="#3a4cac"/><stop offset="0.4947" stop-color="#5570dc"/><stop offset="0.4997" stop-color="#7890f2"/><stop offset="0.5022" stop-color="#ffffff"/><stop offset="0.5121" stop-color="#ffffff"/><stop offset="0.5139" stop-color="#7590f0"/><stop offset="0.5201" stop-color="#5068d0"/><stop offset="0.5294" stop-color="#3444a0"/><stop offset="0.5418" stop-color="#1e266e"/><stop offset="0.5555" stop-color="#0e1148"/><stop offset="0.7043" stop-color="#080a38"/><stop offset="1" stop-color="#070936"/></linearGradient><linearGradient id="stg" x1="0" x2="1"><stop offset="0" stop-color="#2a3890" stop-opacity="0"/><stop offset="0.3" stop-color="#2a3890" stop-opacity="0.55"/><stop offset="0.5" stop-color="#32429c" stop-opacity="0.75"/><stop offset="0.7" stop-color="#2a3890" stop-opacity="0.55"/><stop offset="1" stop-color="#2a3890" stop-opacity="0"/></linearGradient><filter id="speck" x="0" y="0" width="100%" height="100%"><feTurbulence type="fractalNoise" baseFrequency="0.9" numOctaves="1" seed="4"/><feColorMatrix type="matrix" values="0 0 0 0 0.35  0 0 0 0 0.42  0 0 0 0 0.9  3.2 0 0 0 -1.45"/></filter></defs><rect x="0" y="0" width="1613" height="297" fill="url(#wfb)"/><rect x="883" y="0" width="18" height="297" fill="url(#stg)" opacity="0.30"/><rect x="961" y="0" width="18" height="297" fill="url(#stg)" opacity="0.34"/><rect x="1039" y="0" width="18" height="297" fill="url(#stg)" opacity="0.38"/><rect x="1115" y="0" width="18" height="297" fill="url(#stg)" opacity="0.64"/><rect x="1191" y="0" width="18" height="297" fill="url(#stg)" opacity="0.68"/><rect x="1269" y="0" width="18" height="297" fill="url(#stg)" opacity="0.68"/><rect x="1346" y="0" width="18" height="297" fill="url(#stg)" opacity="0.72"/><rect x="1422" y="0" width="18" height="297" fill="url(#stg)" opacity="0.72"/><rect x="1498" y="0" width="18" height="297" fill="url(#stg)" opacity="0.72"/><rect x="1576" y="0" width="18" height="297" fill="url(#stg)" opacity="0.72"/><rect x="0" y="0" width="1613" height="297" filter="url(#speck)" opacity="0.24"/></svg><div style="position:absolute;left:1028px;top:663px;width:110px;height:297px;background:repeating-linear-gradient(90deg,rgba(5,8,40,0.28) 0 1px,rgba(0,0,0,0) 1px 3.6px),repeating-linear-gradient(rgba(5,8,40,0.12) 0 1px,rgba(0,0,0,0) 1px 5px);-webkit-mask-image:linear-gradient(90deg,transparent 0,#000 25%,#000 40%,transparent 41%,transparent 57%,#000 58%,#000 80%,transparent 100%);mask-image:linear-gradient(90deg,transparent 0,#000 25%,#000 40%,transparent 41%,transparent 57%,#000 58%,#000 80%,transparent 100%)"></div><div style="position:absolute;left:1066px;top:663px;width:1px;height:297px;background:repeating-linear-gradient(#0a1030 0 2px,#8090d0 2px 4px);opacity:0.5"></div><div style="position:absolute;left:1104px;top:663px;width:1px;height:297px;background:repeating-linear-gradient(#0a1030 0 2px,#8090d0 2px 4px);opacity:0.6"></div><div style="position:absolute;left:982px;top:891px;width:176px;height:59px;background:rgba(12,12,14,0.86);border-radius:4px"></div><div style="position:absolute;left:991px;top:900px;white-space:nowrap;font-family:'Liberation Mono', monospace;font-size:14px;line-height:17px;color:#f4f4f4;letter-spacing:-0.45px">Freq: 434.000.3 MHz</div><div style="position:absolute;left:991px;top:923px;white-space:nowrap;font-family:'Liberation Mono', monospace;font-size:14px;line-height:17px;color:#f4f4f4;letter-spacing:-0.45px">Span:&nbsp;&nbsp;&nbsp;&plusmn;84.135 kHz</div><div style="position:absolute;left:264px;top:960px;width:1613px;height:27px;background:#000"></div><div style="position:absolute;left:264px;top:960px;width:908px;height:27px;background:radial-gradient(ellipse 70% 62% at 42% 100%,rgba(190,190,30,1),rgba(160,160,25,0.85) 45%,rgba(60,60,20,0) 100%),linear-gradient(#5e5e5e,#424242 35%,#2e2e2e 60%,#3a3a2a)"></div><div style="position:absolute;left:1172px;top:960px;width:585px;height:13px;background:linear-gradient(#4a4a4a,#2a2a2a)"></div><div style="position:absolute;left:1172px;top:960px;width:1px;height:27px;background:#777"></div><div style="position:absolute;left:264px;top:960px;width:1493px;height:1px;background:#9a9a9a"></div><svg style="position:absolute;left:0;top:960px" width="1915" height="10"><path d="M850.5 1v5M867.9 1v3M885.3 1v5M902.7 1v3M920.1 1v5M937.5 1v3M954.9 1v5M972.3 1v3M989.7 1v5M1007.1 1v3M1024.5 1v5M1041.9 1v3M1059.3 1v5M1076.7 1v3M1094.1 1v5M1111.5 1v3M1128.9 1v5M1146.3 1v3M1163.7 1v5M1181.1 1v3M1198.5 1v5M1215.9 1v3M1233.3 1v5M1250.7 1v3M1268.1 1v5M1285.5 1v3M1302.9 1v5M1320.3 1v3M1337.7 1v5M1355.1 1v3M1372.5 1v5M1389.9 1v3M1407.3 1v5M1424.7 1v3M1442.1 1v5M1459.5 1v3M1476.9 1v5M1494.3 1v3M1511.7 1v5M1529.1 1v3M1546.5 1v5M1563.9 1v3M1581.3 1v5M1598.7 1v3M1616.1 1v5M1633.5 1v3M1650.9 1v5M1668.3 1v3M1685.7 1v5M1703.1 1v3M1720.5 1v5M1737.9 1v3M1755.3 1v5" stroke="#a0a0a0" stroke-width="1"/></svg><div style="position:absolute;left:1024px;top:960px;width:1px;height:27px;background:#e8e830"></div><div style="position:absolute;left:824.0px;width:400px;text-align:center;top:970px;white-space:nowrap;font-size:13px;line-height:15px;color:#b4b4a8">434.000</div><div style="position:absolute;left:998.2px;width:400px;text-align:center;top:970px;white-space:nowrap;font-size:13px;line-height:15px;color:#b4b4a8">434.100</div><div style="position:absolute;left:1172.4px;width:400px;text-align:center;top:970px;white-space:nowrap;font-size:13px;line-height:15px;color:#b4b4a8">434.200</div><div style="position:absolute;left:1346.6px;width:400px;text-align:center;top:970px;white-space:nowrap;font-size:13px;line-height:15px;color:#b4b4a8">434.300</div><div style="position:absolute;left:1520.8px;width:400px;text-align:center;top:970px;white-space:nowrap;font-size:13px;line-height:15px;color:#b4b4a8">434.400</div><div style="position:absolute;left:1759px;top:963px;width:36px;height:23px;background:linear-gradient(#f4f4f4,#e3e3e3);border:1px solid #b3b3b3;box-sizing:border-box"></div><div style="position:absolute;left:1798px;top:963px;width:49px;height:23px;background:linear-gradient(#f4f4f4,#e3e3e3);border:1px solid #b3b3b3;box-sizing:border-box"></div><div style="position:absolute;left:1850px;top:963px;width:26px;height:23px;background:linear-gradient(#f4f4f4,#e3e3e3);border:1px solid #b3b3b3;box-sizing:border-box"></div><svg style="position:absolute;left:1767px;top:967px" width="20" height="15"><path d="M12 1 L10 4" stroke="#555"/><rect x="1.5" y="5.5" width="17" height="8" rx="1" fill="#eee" stroke="#555"/><path d="M4 8h12M4 10.5h12M6 6.5v6M9 6.5v6M12 6.5v6" stroke="#777" stroke-width="0.7"/></svg><div style="position:absolute;left:1806px;top:967px;white-space:nowrap;font-size:12px;line-height:14px;color:#222">x5</div><svg style="position:absolute;left:1833px;top:970px" width="6" height="9"><path d="M0 0 L5 4.5 L0 9z" fill="#111"/></svg><svg style="position:absolute;left:1852px;top:964px" width="22" height="21"><circle cx="11" cy="10.5" r="8" fill="#fff" stroke="#444" stroke-width="1.4"/><path d="M7 7 L10.5 10.5 L7 14z M11 7 L14.5 10.5 L11 14z" fill="#333"/></svg><div style="position:absolute;left:1877px;top:110px;width:38px;height:877px;background:#000;border-left:1px solid #9a9a9a;box-sizing:border-box"></div><div style="position:absolute;left:1878px;top:110px;width:37px;height:29px;background:linear-gradient(#505050,#2a2a2a 40%,#111);border-bottom:1px solid #777;box-sizing:border-box"></div><div style="position:absolute;left:1696px;width:400px;text-align:center;top:118px;white-space:nowrap;font-size:12px;line-height:14px;color:#eee">Auto</div><div style="position:absolute;left:1878px;top:234px;width:37px;height:361px;background:linear-gradient(#ffff00 0%,#ffff50 3%,#ffffd0 7%,#ffffff 10%,#ffffff 35%,#dfe6ff 45%,#b9c8ff 55%,#8aa3f5 65%,#5a72d8 73%,#3240a0 83%,#191c6e 92%,#0c0c40 99%,#ffffff 99.5%)"></div><div style="position:absolute;left:1696px;width:400px;text-align:center;top:186px;white-space:nowrap;font-size:9px;line-height:12px;color:#bdbdbd">-10</div><div style="position:absolute;left:1882px;top:236px;width:28px;height:18px;border-radius:4px;background:#7a7a1a"></div><div style="position:absolute;left:1696px;width:400px;text-align:center;top:239px;white-space:nowrap;font-size:9px;line-height:12px;color:#d8d8d8">-20</div><div style="position:absolute;left:1882px;top:289px;width:28px;height:18px;border-radius:4px;background:#7d7d7d"></div><div style="position:absolute;left:1696px;width:400px;text-align:center;top:292px;white-space:nowrap;font-size:9px;line-height:12px;color:#d8d8d8">-30</div><div style="position:absolute;left:1882px;top:342px;width:28px;height:18px;border-radius:4px;background:#7b7b7b"></div><div style="position:absolute;left:1696px;width:400px;text-align:center;top:345px;white-space:nowrap;font-size:9px;line-height:12px;color:#d8d8d8">-40</div><div style="position:absolute;left:1882px;top:395px;width:28px;height:18px;border-radius:4px;background:#6b7391"></div><div style="position:absolute;left:1696px;width:400px;text-align:center;top:398px;white-space:nowrap;font-size:9px;line-height:12px;color:#d8d8d8">-50</div><div style="position:absolute;left:1882px;top:448px;width:28px;height:18px;border-radius:4px;background:#485183"></div><div style="position:absolute;left:1696px;width:400px;text-align:center;top:451px;white-space:nowrap;font-size:9px;line-height:12px;color:#d8d8d8">-60</div><div style="position:absolute;left:1882px;top:501px;width:28px;height:18px;border-radius:4px;background:#2c3468"></div><div style="position:absolute;left:1696px;width:400px;text-align:center;top:504px;white-space:nowrap;font-size:9px;line-height:12px;color:#d8d8d8">-70</div><div style="position:absolute;left:1882px;top:554px;width:28px;height:18px;border-radius:4px;background:#1c2050"></div><div style="position:absolute;left:1696px;width:400px;text-align:center;top:557px;white-space:nowrap;font-size:9px;line-height:12px;color:#d8d8d8">-80</div><div style="position:absolute;left:1696px;width:400px;text-align:center;top:610px;white-space:nowrap;font-size:9px;line-height:12px;color:#bdbdbd">-90</div><div style="position:absolute;left:1696px;width:400px;text-align:center;top:663px;white-space:nowrap;font-size:9px;line-height:12px;color:#bdbdbd">-100</div><div style="position:absolute;left:1696px;width:400px;text-align:center;top:716px;white-space:nowrap;font-size:9px;line-height:12px;color:#bdbdbd">-110</div><div style="position:absolute;left:1696px;width:400px;text-align:center;top:769px;white-space:nowrap;font-size:9px;line-height:12px;color:#bdbdbd">-120</div><div style="position:absolute;left:1696px;width:400px;text-align:center;top:822px;white-space:nowrap;font-size:9px;line-height:12px;color:#bdbdbd">-130</div><div style="position:absolute;left:1696px;width:400px;text-align:center;top:875px;white-space:nowrap;font-size:9px;line-height:12px;color:#bdbdbd">-140</div><div style="position:absolute;left:1696px;width:400px;text-align:center;top:928px;white-space:nowrap;font-size:9px;line-height:12px;color:#bdbdbd">-150</div><div style="position:absolute;left:1444px;top:993px;white-space:nowrap;font-size:12px;line-height:14px;color:#222;letter-spacing:-0.4px">CPU: 1.8%</div><div style="position:absolute;left:1509px;top:995px;width:69px;height:11px;background:#e6e6e6;border:1px solid #bcbcbc;box-sizing:border-box"></div><div style="position:absolute;left:1593px;top:993px;white-space:nowrap;font-size:12px;line-height:14px;color:#222;letter-spacing:-0.4px">Audio: 26ms</div><div style="position:absolute;left:1670px;top:995px;width:69px;height:11px;background:#e6e6e6;border:1px solid #bcbcbc;box-sizing:border-box"></div><div style="position:absolute;left:1672px;top:997px;width:31px;height:7px;background:#06b025"></div><div style="position:absolute;left:1754px;top:993px;white-space:nowrap;font-size:12px;line-height:14px;color:#222;letter-spacing:-0.4px">Size: 544.5 MB</div><div style="position:absolute;left:1840px;top:995px;width:70px;height:11px;background:#e6e6e6;border:1px solid #bcbcbc;box-sizing:border-box"></div><div style="position:absolute;left:1842px;top:997px;width:2px;height:7px;background:#06b025"></div><div style="position:absolute;left:122px;top:427px;width:807px;height:584px;background:#f0f0f0;border:1px solid #3d86c6;border-bottom:none;box-sizing:border-box"></div><div style="position:absolute;left:123px;top:428px;width:805px;height:49px;background:#ffffff"></div><svg style="position:absolute;left:131px;top:435px" width="16" height="14"><rect x="0.5" y="0.5" width="14" height="12" fill="#e8ecec" stroke="#9aa"/><rect x="2" y="3" width="6" height="8" fill="#3f9a90"/><rect x="10" y="3" width="3" height="8" fill="#cfd8d8"/></svg><div style="position:absolute;left:152px;top:435px;white-space:nowrap;font-size:12px;line-height:14px;color:#111">FreeDV 1.3.1</div><svg style="position:absolute;left:800px;top:433px" width="120" height="18"><path d="M8 8.5 H18" stroke="#111" stroke-width="1"/><rect x="53.5" y="3.5" width="10" height="10" fill="none" stroke="#111"/><path d="M99 3 L109 13 M109 3 L99 13" stroke="#111" stroke-width="1.1"/></svg><div style="position:absolute;left:130px;top:460px;white-space:nowrap;font-size:12px;line-height:14px;color:#111">File</div><div style="position:absolute;left:162px;top:460px;white-space:nowrap;font-size:12px;line-height:14px;color:#111">Tools</div><div style="position:absolute;left:204px;top:460px;white-space:nowrap;font-size:12px;line-height:14px;color:#111">Help</div><div style="position:absolute;left:123px;top:476px;width:805px;height:535px;background:#f0f0f0"></div><div style="position:absolute;left:131px;top:491px;width:100px;height:202px;border:1px solid #d5d5d5;box-shadow:inset 1px 1px 0 #fff;box-sizing:border-box;background:#e3e3e3"></div><div style="position:absolute;left:137px;top:485px;padding:0 2px;background:#f0f0f0;font-size:12px;line-height:15px;color:#111;background:linear-gradient(#f0f0f0 6px,#e3e3e3 6px)">SNR</div><div style="position:absolute;left:173px;top:514px;width:16px;height:137px;background:#f2f2f2;border:1px solid #d0d0d0;box-sizing:border-box"></div><div style="position:absolute;left:175px;top:616px;width:12px;height:32px;background:#000"></div><div style="position:absolute;left:-25px;width:400px;text-align:center;top:659px;white-space:nowrap;font-size:12px;line-height:14px;color:#111">1</div><div style="position:absolute;left:158px;top:676px;width:12px;height:12px;background:#fff;border:1px solid #333;box-sizing:border-box"></div><div style="position:absolute;left:175px;top:675px;white-space:nowrap;font-size:12px;line-height:14px;color:#111">Slow</div><div style="position:absolute;left:131px;top:706px;width:100px;height:74px;border:1px solid #d5d5d5;box-shadow:inset 1px 1px 0 #fff;box-sizing:border-box;background:#e3e3e3"></div><div style="position:absolute;left:137px;top:700px;padding:0 2px;background:#f0f0f0;font-size:12px;line-height:15px;color:#111;background:linear-gradient(#f0f0f0 6px,#e3e3e3 6px)">Sync</div><div style="position:absolute;left:-19px;width:400px;text-align:center;top:719px;white-space:nowrap;font-size:12px;line-height:15px;color:#35e035">Modem</div><div style="position:absolute;left:137px;top:751px;width:89px;height:26px;box-sizing:border-box;background:#f0f0f0;border:1px solid #fff;border-right:1px solid #6f6f6f;border-bottom:1px solid #6f6f6f;box-shadow:inset -1px -1px 0 #a0a0a0, 1px 1px 0 #888"></div><div style="position:absolute;left:-19px;width:400px;text-align:center;top:756px;white-space:nowrap;font-size:12px;line-height:16px;color:#111">ReSync</div><div style="position:absolute;left:131px;top:795px;width:100px;height:157px;border:1px solid #d5d5d5;box-shadow:inset 1px 1px 0 #fff;box-sizing:border-box;background:#e3e3e3"></div><div style="position:absolute;left:137px;top:789px;padding:0 2px;background:#f0f0f0;font-size:12px;line-height:15px;color:#111;background:linear-gradient(#f0f0f0 6px,#e3e3e3 6px)">Stats</div><div style="position:absolute;left:137px;top:809px;width:89px;height:26px;box-sizing:border-box;background:#f0f0f0;border:1px solid #fff;border-right:1px solid #6f6f6f;border-bottom:1px solid #6f6f6f;box-shadow:inset -1px -1px 0 #a0a0a0, 1px 1px 0 #888"></div><div style="position:absolute;left:-19px;width:400px;text-align:center;top:814px;white-space:nowrap;font-size:12px;line-height:16px;color:#111">Reset</div><div style="position:absolute;left:136px;top:837px;white-space:nowrap;font-size:12px;line-height:14px;color:#111;letter-spacing:-0.45px">Bits: 0</div><div style="position:absolute;left:136px;top:853px;white-space:nowrap;font-size:12px;line-height:14px;color:#111;letter-spacing:-0.45px">Errs: 0</div><div style="position:absolute;left:136px;top:869px;white-space:nowrap;font-size:12px;line-height:14px;color:#111;letter-spacing:-0.45px">BER: 0.000</div><div style="position:absolute;left:136px;top:885px;white-space:nowrap;font-size:12px;line-height:14px;color:#111;letter-spacing:-0.45px">Resyncs: 72</div><div style="position:absolute;left:136px;top:901px;white-space:nowrap;font-size:12px;line-height:14px;color:#111;letter-spacing:-0.45px">ClkOff: 621554199</div><div style="position:absolute;left:136px;top:917px;white-space:nowrap;font-size:12px;line-height:14px;color:#111;letter-spacing:-0.45px">FrqOff: -250.0</div><div style="position:absolute;left:136px;top:933px;white-space:nowrap;font-size:12px;line-height:14px;color:#111;letter-spacing:-0.45px">Sync: 0.00</div><div style="position:absolute;left:131px;top:964px;width:100px;height:56px;border:1px solid #d5d5d5;box-shadow:inset 1px 1px 0 #fff;box-sizing:border-box;background:#e3e3e3"></div><div style="position:absolute;left:137px;top:958px;padding:0 2px;background:#f0f0f0;font-size:12px;line-height:15px;color:#111;background:linear-gradient(#f0f0f0 6px,#e3e3e3 6px)">Level</div><div style="position:absolute;left:172px;top:1001px;width:17px;height:2px;background:#fff;border:1px solid #bbb"></div><div style="position:absolute;left:240px;top:479px;width:573px;height:488px;background:#f0f0f0;border:1px solid #dcdcdc;box-shadow:inset 1px 1px 0 #fff;box-sizing:border-box"></div><div style="position:absolute;left:-113px;width:400px;text-align:right;top:485.0px;white-space:nowrap;font-size:12px;line-height:14px;color:#111">30s</div><div style="position:absolute;left:-113px;width:400px;text-align:right;top:558.8px;white-space:nowrap;font-size:12px;line-height:14px;color:#111">25s</div><div style="position:absolute;left:-113px;width:400px;text-align:right;top:632.6px;white-space:nowrap;font-size:12px;line-height:14px;color:#111">20s</div><div style="position:absolute;left:-113px;width:400px;text-align:right;top:706.4px;white-space:nowrap;font-size:12px;line-height:14px;color:#111">15s</div><div style="position:absolute;left:-113px;width:400px;text-align:right;top:780.2px;white-space:nowrap;font-size:12px;line-height:14px;color:#111">10s</div><div style="position:absolute;left:-113px;width:400px;text-align:right;top:854.0px;white-space:nowrap;font-size:12px;line-height:14px;color:#111">5s</div><div style="position:absolute;left:-113px;width:400px;text-align:right;top:927.8px;white-space:nowrap;font-size:12px;line-height:14px;color:#111">0s</div><svg style="position:absolute;left:293px;top:492px" width="507" height="443"><defs><filter id="fdb" x="0" y="0" width="100%" height="100%"><feGaussianBlur stdDeviation="0.8 1.2"/></filter><filter id="fdb2" x="-5%" y="-50%" width="110%" height="200%"><feGaussianBlur stdDeviation="1.2"/></filter><filter id="fdb3" x="0" y="0" width="100%" height="100%"><feGaussianBlur stdDeviation="0.4"/></filter></defs><rect width="507" height="443" fill="#000"/><g filter="url(#fdb)"><path d="M386 26h2M164 30h2m42 0h2m176 0h4m2 0h2M164 34h2M162 38h2m188 0h2m34 0h2m10 0h2M162 42h2m174 0h4m46 0h2m2 0h2m6 0h2M208 46h2m142 0h2m20 0h2m12 0h2M182 50h2m24 0h2m182 0h2M162 54h2m220 0h2M328 58h2m54 0h2M328 62h2m56 0h2M162 66h2m180 0h2m40 0h4m36 0h2M388 70h2M344 74h2M344 78h2m50 0h2m4 0h2M344 82h2m44 0h2m4 0h2m4 0h2M402 86h2M340 90h2m44 0h2m14 0h2M340 94h2m2 0h2m24 0h2m14 0h2m14 0h2M340 98h2m2 0h2m24 0h2m12 0h2m16 0h2m18 0h2M340 102h6m24 0h2m38 0h2M340 106h2m42 0h2M154 110h2m26 0h2m238 0h2m2 0h2M182 114h2m156 0h2m2 0h2m76 0h2M214 118h2m148 0h2M154 122h2m200 0h2m4 0h4m56 0h2M154 126h2m26 0h2m160 0h2m16 0h4m22 0h2m32 0h2m2 0h2M154 130h2m26 0h2m160 0h2M154 134h2m206 0h2M356 138h2m6 0h2m22 0h2M364 142h2m10 0h2M204 150h2M204 154h2m138 0h2M180 158h2M6 186h2m2 0h4m4 0h2m20 0h2m92 0h2m16 0h2m28 0h2m184 0h2m20 0h2m12 0h2m40 0h2m16 0h2m24 0h2M184 302h2m204 0h2M184 306h2m204 0h2M258 310h2M254 314h2m122 0h2m2 0h2m2 0h2m2 0h2M184 318h2m192 0h2m2 0h2m12 0h2M184 322h2m148 0h2m46 0h2m4 0h2m6 0h2M144 326h2m50 0h2m180 0h2M234 330h2m136 0h2M184 334h2m48 0h2m142 0h2M196 338h2m56 0h2m122 0h2m8 0h2m6 0h2M196 342h2m56 0h2m116 0h2m4 0h2m8 0h2m6 0h2M204 346h2m14 0h2m12 0h2m142 0h2m8 0h2m4 0h2m2 0h2M204 350h2m28 0h2m142 0h2m4 0h2m8 0h2M184 354h2m48 0h2m76 0h2m70 0h2m8 0h2M394 358h2M392 362h6M396 366h2M396 370h2M184 374h2m158 0h2m34 0h2m4 0h2m8 0h2M396 378h2M380 386h2m10 0h2M148 390h2m236 0h2M206 394h2m54 0h2m56 0h2m26 0h2m30 0h2m10 0h2M348 398h2m42 0h2M232 402h2m4 0h2m180 0h2M150 406h2m80 0h2m4 0h2m110 0h2m40 0h2M150 410h2m54 0h2m132 0h2m8 0h2m44 0h2M334 414h2m40 0h2m14 0h2m2 0h2M350 418h2m32 0h2m10 0h2M148 422h2m2 0h2m16 0h2m168 0h2m34 0h2M206 426h2m126 0h2m50 0h2M338 434h2m44 0h2M386 438h2M168 442h2m216 0h2" stroke="#000023" stroke-width="4"/><path d="M386 2h2M386 6h2M386 10h2M168 14h2m218 0h2M388 18h2M386 22h4M164 26h2m42 0h2m126 0h2m50 0h4m34 0h2M148 30h2m38 0h2m146 0h4m34 0h2M152 34h2m8 0h2m164 0h2m4 0h4m12 0h2m20 0h2m12 0h2m8 0h2m2 0h2m14 0h2M164 38h2m36 0h2m136 0h2m30 0h2m12 0h2m28 0h2m14 0h2M164 42h2m42 0h2m92 0h2m48 0h2m32 0h2M162 46h4m18 0h2m152 0h2m44 0h2m14 0h2m14 0h2m8 0h2m6 0h2M184 50h2m42 0h2m98 0h2m10 0h2m10 0h2m20 0h2m8 0h2M164 54h2m62 0h2m98 0h2m8 0h2m22 0h2m10 0h2m16 0h2m32 0h2m4 0h2M152 58h2m4 0h2m16 0h2m4 0h4m6 0h2m14 0h2m130 0h2m20 0h2m28 0h2M152 62h2m4 0h2m48 0h2m128 0h4m2 0h2m16 0h2m20 0h2m6 0h2m24 0h2m10 0h4M152 66h2m54 0h2m126 0h4m22 0h2m20 0h2m16 0h2m18 0h4M146 70h2m4 0h2m8 0h2m164 0h2m6 0h2m6 0h2m50 0h2m4 0h2m18 0h2M198 74h2m128 0h2m6 0h2m46 0h2m10 0h2m6 0h2m18 0h4M190 78h2m144 0h2m46 0h2m2 0h4m30 0h2M384 82h2m36 0h2M328 86h2m2 0h2m50 0h2m36 0h2m2 0h2M156 90h2m34 0h2m64 0h2m68 0h2m20 0h2m18 0h2m50 0h2m2 0h2M192 94h2m64 0h2m68 0h2m12 0h2m6 0h2m32 0h2m20 0h2m14 0h2M338 98h2m2 0h2m24 0h2m36 0h2m2 0h2M154 102h2m64 0h4m14 0h2m98 0h2m36 0h2m6 0h2m16 0h2m18 0h2M214 106h2m4 0h2m120 0h2m18 0h2m24 0h2m14 0h2m16 0h2M312 110h2m30 0h2m38 0h2m2 0h2M188 114h2m30 0h2m2 0h2m12 0h2m116 0h2m4 0h2m12 0h2m6 0h6M150 118h2m30 0h2m36 0h2m16 0h2m8 0h2m106 0h2m4 0h2m22 0h2M182 122h2m30 0h2m124 0h2m2 0h2m20 0h2m18 0h2m14 0h2m22 0h2M238 126h2m98 0h4m56 0h2m2 0h2M148 130h2m204 0h4m4 0h2m24 0h2m8 0h2m2 0h2M176 134h2m160 0h2m2 0h4m4 0h2m4 0h2m44 0h2m18 0h2M154 138h2m182 0h2m2 0h2m18 0h2m14 0h2m22 0h2M148 142h2m30 0h2m32 0h2m128 0h2m32 0h2m8 0h2M180 146h2m22 0h2m8 0h4m158 0h4M364 150h2m2 0h2m52 0h2M180 154h2m20 0h2m172 0h4m8 0h2M204 158h2m8 0h2m4 0h2m122 0h4m20 0h2m12 0h2M2 186h2m30 0h2m2 0h2m18 0h2m2 0h2m16 0h2m2 0h4m2 0h4m38 0h2m4 0h2m10 0h2m2 0h4m26 0h2m10 0h2m44 0h2m82 0h2m18 0h2m2 0h2m14 0h2m8 0h2m32 0h2m6 0h6m12 0h2m16 0h2m6 0h2m2 0h4m16 0h2m8 0h2M340 190h2M28 214h2M148 266h2M148 278h2M172 290h2M172 294h2m240 0h2M172 298h2m22 0h2M192 302h2m192 0h4m10 0h2m2 0h2M196 306h2m116 0h2m72 0h2m10 0h2m16 0h2M154 310h2m54 0h2m120 0h4m36 0h2m12 0h2M182 314h2m26 0h2m46 0h2m72 0h4m62 0h2M254 318h2m6 0h2m16 0h2m104 0h6m6 0h2m18 0h2M154 322h2m40 0h2m180 0h2m18 0h2m10 0h2M154 326h2m178 0h2m50 0h2m22 0h2m4 0h2M154 330h2m40 0h2m56 0h2m130 0h4m4 0h2m6 0h2m6 0h2M146 334h2m34 0h2m12 0h2m6 0h2m164 0h4m6 0h2M184 338h2m34 0h2m38 0h2m92 0h2m16 0h2M184 342h2m18 0h2m14 0h2m96 0h2m50 0h2m12 0h2M172 346h2m10 0h2m10 0h2m56 0h2m14 0h2m40 0h2m4 0h2m12 0h2m14 0h2m10 0h2m34 0h2m2 0h2M184 350h2m34 0h2m32 0h2m56 0h2m40 0h2m24 0h2m6 0h2m10 0h2M148 354h2m54 0h2m140 0h2m6 0h2M152 358h2m66 0h2m12 0h2m34 0h2m40 0h2m26 0h2m42 0h2m2 0h2m2 0h2m4 0h2M184 362h2m34 0h2m176 0h2M150 366h2m102 0h2m56 0h2m26 0h2m36 0h2m8 0h2M168 370h2m14 0h2m8 0h2m24 0h2m122 0h4m32 0h2m4 0h4M206 374h2m12 0h2m2 0h2m28 0h2m120 0h2M184 378h2m158 0h2m34 0h2m4 0h2M148 382h2m18 0h2m62 0h2m94 0h2m8 0h2m4 0h2m34 0h2M168 386h2m36 0h2m112 0h2m32 0h2m10 0h2m46 0h2M168 390h2m36 0h2m24 0h2m86 0h2m26 0h2m30 0h2m32 0h2M232 394h2m110 0h2m20 0h2m18 0h2m14 0h2m10 0h2M150 398h2m2 0h2m10 0h4m40 0h2m20 0h2m4 0h2m22 0h2m46 0h2m8 0h2m22 0h2m10 0h2m18 0h2m2 0h2m4 0h2M166 402h4m36 0h2m132 0h2m6 0h2m16 0h2m8 0h2m2 0h2m14 0h2M146 406h4m4 0h2m10 0h4m36 0h2m132 0h2m6 0h2m46 0h2M152 410h4m14 0h2m20 0h2m44 0h2m90 0h2m62 0h2M152 414h2m54 0h2m28 0h2m22 0h2m66 0h2m8 0h2m40 0h2m10 0h2M152 418h2m16 0h2m162 0h2m58 0h2m2 0h2m12 0h2m4 0h2M206 422h2m126 0h2m48 0h2m10 0h2m14 0h2M330 426h2m52 0h2m10 0h2M168 430h2m160 0h2m46 0h2m4 0h4m12 0h2M170 434h2m214 0h2M168 438h4m46 0h2m118 0h2m62 0h4M218 442h2m156 0h2m16 0h2m6 0h6" stroke="#000359" stroke-width="4"/><path d="M152 2h2m84 0h2m148 0h2M238 6h2m148 0h4M168 10h2m68 0h2m150 0h2M386 14h2m2 0h2M168 18h2m216 0h2M164 22h2m172 0h2m50 0h2m26 0h2M180 26h2m8 0h2m10 0h2m124 0h2m8 0h2m30 0h2M150 30h4m8 0h2m4 0h2m32 0h2m32 0h2m90 0h2m2 0h2m6 0h2m30 0h2m10 0h2m4 0h2m8 0h2m16 0h2m6 0h2M158 34h2m14 0h2m8 0h2m2 0h2m8 0h2m2 0h2m24 0h2m30 0h2m70 0h2m6 0h2m10 0h2m30 0h2m20 0h2m10 0h2m4 0h4M222 38h2m8 0h2m68 0h2m24 0h2m6 0h2m8 0h6m42 0h4m28 0h2m6 0h2M150 42h2m22 0h2m46 0h2m12 0h2m90 0h2m6 0h2m12 0h2m8 0h2m6 0h2m2 0h4m30 0h2m8 0h2m8 0h2m4 0h2M176 46h2m2 0h2m38 0h4m4 0h2m6 0h2m18 0h2m14 0h2m28 0h2m24 0h2m6 0h2m2 0h2m26 0h2m16 0h2m30 0h2m2 0h2m4 0h2M162 50h4m10 0h2m78 0h2m14 0h2m28 0h2m60 0h2m52 0h2M148 54h2m8 0h2m16 0h2m4 0h4m6 0h2m14 0h2m6 0h2m122 0h2m2 0h2m4 0h4m56 0h2m6 0h2m4 0h2M164 58h2m58 0h2m2 0h2m46 0h2m60 0h2m4 0h2m4 0h4m20 0h2m2 0h2m6 0h2m12 0h6m12 0h2M176 62h4m2 0h4m4 0h2m2 0h2m30 0h2m108 0h2m12 0h4m2 0h2m16 0h2m2 0h2m2 0h2m16 0h2m20 0h4M168 66h2m6 0h2m12 0h4m134 0h2m48 0h2m2 0h2m8 0h2m2 0h2m8 0h2m2 0h2M178 70h2m10 0h2m6 0h2m134 0h2m2 0h2m24 0h2m2 0h2m14 0h4m16 0h2m4 0h2m12 0h4M152 74h4m34 0h2m4 0h2m136 0h2m2 0h2m2 0h2m20 0h2m2 0h2m16 0h6m2 0h2m6 0h2m6 0h2m4 0h4M192 78h2m4 0h2m30 0h2m96 0h2m8 0h2m2 0h2m24 0h2m16 0h2m16 0h2m18 0h4m2 0h2M154 82h2m24 0h2m8 0h4m34 0h4m30 0h2m64 0h2m2 0h2m8 0h2m6 0h2m12 0h2m2 0h4m16 0h2m14 0h2m18 0h2m2 0h2M164 86h2m8 0h2m4 0h2m42 0h2m14 0h2m100 0h2m6 0h2m10 0h2m24 0h4m4 0h2m6 0h2m24 0h2M174 90h4m2 0h2m6 0h2m30 0h2m18 0h2m96 0h2m2 0h2m10 0h2m20 0h2m6 0h2m2 0h2m6 0h2m6 0h4m2 0h2M174 94h2m12 0h2m30 0h2m18 0h2m90 0h2m20 0h2m6 0h2m2 0h2m14 0h2m20 0h2m10 0h2M154 98h4m16 0h2m14 0h4m26 0h2m2 0h2m12 0h2m126 0h2m18 0h4m6 0h2M170 102h2m18 0h2m16 0h2m8 0h2m38 0h2m76 0h2m28 0h2m18 0h4m14 0h2m12 0h4M156 106h2m34 0h2m24 0h2m4 0h2m12 0h2m18 0h2m74 0h2m8 0h2m4 0h2m34 0h2m8 0h4m2 0h2M156 110h2m30 0h4m22 0h2m8 0h2m12 0h4m16 0h2m74 0h2m6 0h2m4 0h4m2 0h2m4 0h8m18 0h2m8 0h2m10 0h4m12 0h2M158 114h2m46 0h2m6 0h2m118 0h2m2 0h2m8 0h2m4 0h2m8 0h2m8 0h2m14 0h2m10 0h4m4 0h2m4 0h2M172 118h2m14 0h2m16 0h2m16 0h2m14 0h2m98 0h4m26 0h2m4 0h2m24 0h2m6 0h2M172 122h2m16 0h2m2 0h2m6 0h2m34 0h2m18 0h2m82 0h2m44 0h2m20 0h2M172 126h2m40 0h2m6 0h2m44 0h2m30 0h2m52 0h2m10 0h2m18 0h2m26 0h2m2 0h2M150 130h2m20 0h2m2 0h2m12 0h2m22 0h2m4 0h2m6 0h2m8 0h2m80 0h2m16 0h6m6 0h2m24 0h2m8 0h2m22 0h2M160 134h2m28 0h2m22 0h2m4 0h2m6 0h2m102 0h2m2 0h2m2 0h2m4 0h2m6 0h2m20 0h4m18 0h2m10 0h4M176 138h2m2 0h4m6 0h2m10 0h2m10 0h2m4 0h2m16 0h2m72 0h2m18 0h2m2 0h2m2 0h2m8 0h2m16 0h2m6 0h2m8 0h2m8 0h4M154 142h2m16 0h2m2 0h2m12 0h2m10 0h4m10 0h2m2 0h2m6 0h2m8 0h2m32 0h2m62 0h4m2 0h2m12 0h2m28 0h2m6 0h2m12 0h2M152 146h4m34 0h2m10 0h2m68 0h2m62 0h10m4 0h2m10 0h2m4 0h2m20 0h2m2 0h2m2 0h2m14 0h2M160 150h2m18 0h2m8 0h2m6 0h2m2 0h2m10 0h4m2 0h2m50 0h2m64 0h2m2 0h6m6 0h2m20 0h4m6 0h2m26 0h2m10 0h2M154 154h4m26 0h2m12 0h2m14 0h4m2 0h2m116 0h2m6 0h2m8 0h2m6 0h2m2 0h2m46 0h2m4 0h2m2 0h2M166 158h4m28 0h2m16 0h2m6 0h2m38 0h2m36 0h2m50 0h2m8 0h2m12 0h2m4 0h6m32 0h2m2 0h2m8 0h2M0 186h2m14 0h2m2 0h2m2 0h6m2 0h2m10 0h4m18 0h2m4 0h2m2 0h2m4 0h2m4 0h2m6 0h4m10 0h2m6 0h2m6 0h2m8 0h2m56 0h2m6 0h4m2 0h2m18 0h2m10 0h2m50 0h2m18 0h2m18 0h2m2 0h4m14 0h2m2 0h2m18 0h2m12 0h4m10 0h2m16 0h2m4 0h6m8 0h2m2 0h4m24 0h2m4 0h4m14 0h4M134 190h2M188 194h2M302 202h2m92 0h4M302 206h2m46 0h2m46 0h2M22 210h2m4 0h2m158 0h2M22 214h2M32 218h2m76 0h2m308 0h2M34 222h2m74 0h2m308 0h2M90 234h2M10 238h2M100 242h2M100 246h2M248 250h2M240 266h2m16 0h2m130 0h2M128 270h4m4 0h2m10 0h2M148 274h2M148 282h2m22 0h2m18 0h2m220 0h2M148 286h2m22 0h2m212 0h2M148 290h2m42 0h2m2 0h2m202 0h2m12 0h2M154 294h2m36 0h2m150 0h2m16 0h2m8 0h2M148 298h2m4 0h2m18 0h2m16 0h2m32 0h2m144 0h2m14 0h4m8 0h2m14 0h4M148 302h2m22 0h2m22 0h2m46 0h2m12 0h2m44 0h2m6 0h4m2 0h2m38 0h2m12 0h2m8 0h2M152 306h4m16 0h2m8 0h2m8 0h2m16 0h2m14 0h2m30 0h2m2 0h2m16 0h2m30 0h2m46 0h2m16 0h2m2 0h2m2 0h2m16 0h2m2 0h2M152 310h2m38 0h2m2 0h2m56 0h2m6 0h2m16 0h2m30 0h2m22 0h2m18 0h6m12 0h2m2 0h2m2 0h2m4 0h2m8 0h4m2 0h2M150 314h2m2 0h2m20 0h2m18 0h2m82 0h2m54 0h2m6 0h2m2 0h2m6 0h6m10 0h4m12 0h2m6 0h2m14 0h2M150 318h2m2 0h2m36 0h4m14 0h2m46 0h2m50 0h4m8 0h2m8 0h4m8 0h6m8 0h2m20 0h2m18 0h2m8 0h6M142 322h2m4 0h2m2 0h2m18 0h2m18 0h2m60 0h2m6 0h2m54 0h2m22 0h6m8 0h2m16 0h2m10 0h2m2 0h2m22 0h2M146 326h2m2 0h4m38 0h2m24 0h2m34 0h2m6 0h2m40 0h2m34 0h4m10 0h2m8 0h2m6 0h2m6 0h4m4 0h6m4 0h2M142 330h2m50 0h2m4 0h2m18 0h2m40 0h2m4 0h2m64 0h2m18 0h2m6 0h2m16 0h2m8 0h4m22 0h2M144 334h2m2 0h4m2 0h2m20 0h2m76 0h2m6 0h2m6 0h2m68 0h2m12 0h2m6 0h2m20 0h2m4 0h2m16 0h2m8 0h2M150 338h2m30 0h2m10 0h2m8 0h2m22 0h2m32 0h2m6 0h2m46 0h2m40 0h2m2 0h2m4 0h2m8 0h2m8 0h2m2 0h2m2 0h2M150 342h2m20 0h2m8 0h2m10 0h2m18 0h2m12 0h2m30 0h4m38 0h2m40 0h2m2 0h2m8 0h2m20 0h2m16 0h2m10 0h2M150 346h4m28 0h2m44 0h2m44 0h2m70 0h2m6 0h2m2 0h2m8 0h6m6 0h2m30 0h2M150 350h4m4 0h2m20 0h4m8 0h2m34 0h2m40 0h2m46 0h2m24 0h2m12 0h2m38 0h2m6 0h2m2 0h2M144 354h4m2 0h4m28 0h2m8 0h4m24 0h2m26 0h2m20 0h2m56 0h2m10 0h2m2 0h2m20 0h2m20 0h2m2 0h2m2 0h4M144 358h2m4 0h2m32 0h2m6 0h2m10 0h2m50 0h2m92 0h2m2 0h2m4 0h2m14 0h2m18 0h2m10 0h2M152 362h2m28 0h2m20 0h2m28 0h2m18 0h4m2 0h2m50 0h2m30 0h2m4 0h2m2 0h2m16 0h2m2 0h2m4 0h4m2 0h2M184 366h2m6 0h4m38 0h2m108 0h4m6 0h2m16 0h2m8 0h4m8 0h2m2 0h2M150 370h2m2 0h2m14 0h2m34 0h2m16 0h2m28 0h2m4 0h2m6 0h2m32 0h2m8 0h2m4 0h2m8 0h2m10 0h4m10 0h2m16 0h2m4 0h2m14 0h2m10 0h4M154 374h2m14 0h2m10 0h2m10 0h2m122 0h2m22 0h2m10 0h2m16 0h2m4 0h2m4 0h2m2 0h2m12 0h2m2 0h2m2 0h2m2 0h2M150 378h2m16 0h4m22 0h4m8 0h2m12 0h2m10 0h2m20 0h2m46 0h2m24 0h2m8 0h2m2 0h2m10 0h2m10 0h2m16 0h2m2 0h2m12 0h2M170 382h2m10 0h2m32 0h2m20 0h2m72 0h2m4 0h4m32 0h2m30 0h4m6 0h2M146 386h2m6 0h2m10 0h2m2 0h2m20 0h2m22 0h4m12 0h2m94 0h2m8 0h4m2 0h2m2 0h2m2 0h2m18 0h4m6 0h2m4 0h2m6 0h2m4 0h2M150 390h2m2 0h2m10 0h2m66 0h2m26 0h2m46 0h2m22 0h2m2 0h2m4 0h2m4 0h2m2 0h2m10 0h2m4 0h2m10 0h2m4 0h2m4 0h2m4 0h4M140 394h2m8 0h2m2 0h2m10 0h6m6 0h2m30 0h2m6 0h2m14 0h2m116 0h2m18 0h2m2 0h2m12 0h2m4 0h2m12 0h2M146 398h2m58 0h4m8 0h2m14 0h2m94 0h2m2 0h2m4 0h2m24 0h2m4 0h2m14 0h4m4 0h2m4 0h2M152 402h2m54 0h4m4 0h2m110 0h4m2 0h2m8 0h2m4 0h4m2 0h2m10 0h2m2 0h2m10 0h2m4 0h2m10 0h4M192 406h2m14 0h2m6 0h2m2 0h2m26 0h2m4 0h2m6 0h2m20 0h2m40 0h6m20 0h2m12 0h4m6 0h2m2 0h2m4 0h2m6 0h2m6 0h4M166 410h2m40 0h2m6 0h2m8 0h2m4 0h2m14 0h2m12 0h2m62 0h4m4 0h2m8 0h2m2 0h2m16 0h4m6 0h2m2 0h4m4 0h4m10 0h4m6 0h2M170 414h2m20 0h2m12 0h2m18 0h2m2 0h4m20 0h2m70 0h2m38 0h2m12 0h2m2 0h2m4 0h2m10 0h8M160 418h2m44 0h2m18 0h2m4 0h2m4 0h2m90 0h2m44 0h4m2 0h2m8 0h2m8 0h2m2 0h2M154 422h2m4 0h2m6 0h2m62 0h2m4 0h2m14 0h2m16 0h2m56 0h2m18 0h2m14 0h2m2 0h2m6 0h2m2 0h2m2 0h2m14 0h2m2 0h2M146 426h2m12 0h2m6 0h4m42 0h2m22 0h2m14 0h2m16 0h2m52 0h4m6 0h6m8 0h2m10 0h2m14 0h2m8 0h4m8 0h6m6 0h2M156 430h2m12 0h2m34 0h2m24 0h2m18 0h2m80 0h2m2 0h2m22 0h2m2 0h2m20 0h2m14 0h2m6 0h2M156 434h2m2 0h2m2 0h2m52 0h2m12 0h2m4 0h2m86 0h2m6 0h2m42 0h2m8 0h2m8 0h2m2 0h4m8 0h2M156 438h6m2 0h2m46 0h2m16 0h2m6 0h2m8 0h2m12 0h2m8 0h2m52 0h2m2 0h2m2 0h2m14 0h2m22 0h2m8 0h2m2 0h2m4 0h2m4 0h2M152 442h2m2 0h4m4 0h2m4 0h2m44 0h2m12 0h2m30 0h2m70 0h2m2 0h2m10 0h2m22 0h2m2 0h2" stroke="#000fb6" stroke-width="4"/><path d="M154 2h2m48 0h2m170 0h2m18 0h2M154 6h2m12 0h2m22 0h2m10 0h2m172 0h2m20 0h2M152 10h2m38 0h2m66 0h2m126 0h2M190 14h2m46 0h2m20 0h2m12 0h2m60 0h4m52 0h2m24 0h2M224 18h2m12 0h2m20 0h2m74 0h4m50 0h2M152 22h2m14 0h2m10 0h2m22 0h2m2 0h2m28 0h2m20 0h2m66 0h2m6 0h2m32 0h2m22 0h2m26 0h4M154 26h2m6 0h2m24 0h2m14 0h2m30 0h2m22 0h2m98 0h2m10 0h2m10 0h2m6 0h4m4 0h2m16 0h4m2 0h2m2 0h2M158 30h2m14 0h2m4 0h6m4 0h4m10 0h2m14 0h4m6 0h4m4 0h2m10 0h2m8 0h2m46 0h2m34 0h2m2 0h4m6 0h4m8 0h2m22 0h4m4 0h2m2 0h2m8 0h2m2 0h4M168 34h2m20 0h2m30 0h2m8 0h2m16 0h6m52 0h2m20 0h2m14 0h4m10 0h2m4 0h2m6 0h2m2 0h2m10 0h2m2 0h2m2 0h2m2 0h2m10 0h2m6 0h2M168 38h4m2 0h2m6 0h2m6 0h2m6 0h2m28 0h2m48 0h2m50 0h6m8 0h2m12 0h6m2 0h2m6 0h2m6 0h4m16 0h2m2 0h2m10 0h2m2 0h4M158 42h2m10 0h2m4 0h2m2 0h2m2 0h2m2 0h4m6 0h2m2 0h2m16 0h2m50 0h2m2 0h4m50 0h6m8 0h6m8 0h2m20 0h2m2 0h2m10 0h2m4 0h2m8 0h2m4 0h2m4 0h2m2 0h2M158 46h2m14 0h2m6 0h2m4 0h2m2 0h2m38 0h2m44 0h2m52 0h2m10 0h2m14 0h2m10 0h2m6 0h2m12 0h4m4 0h2m4 0h2m14 0h2m4 0h2M154 50h2m2 0h2m28 0h2m2 0h2m8 0h2m12 0h2m2 0h4m2 0h2m4 0h6m14 0h2m10 0h2m12 0h2m28 0h2m26 0h4m4 0h2m16 0h2m2 0h2m4 0h2m12 0h2m12 0h2m2 0h2m2 0h4m4 0h2m4 0h4M154 54h4m12 0h2m16 0h2m4 0h2m6 0h2m22 0h2m28 0h4m12 0h2m2 0h2m24 0h2m30 0h4m10 0h2m4 0h2m8 0h2m6 0h2m4 0h2m2 0h2m2 0h2m2 0h2m4 0h2m2 0h6m2 0h2m4 0h4m4 0h2m4 0h2M178 58h4m12 0h2m30 0h2m106 0h4m4 0h2m12 0h2m24 0h2m12 0h2m12 0h2m2 0h2m6 0h2M154 62h2m8 0h2m2 0h2m10 0h2m10 0h2m4 0h2m14 0h4m2 0h2m42 0h2m10 0h2m86 0h2m28 0h4m4 0h4m4 0h2m2 0h2m4 0h2M154 66h2m2 0h2m14 0h2m2 0h2m2 0h6m6 0h2m2 0h2m16 0h2m8 0h2m4 0h2m30 0h2m68 0h2m12 0h2m2 0h4m8 0h2m8 0h2m4 0h2m8 0h2m2 0h2m2 0h4m12 0h8M148 70h2m4 0h2m2 0h2m16 0h2m6 0h2m2 0h2m2 0h2m2 0h2m10 0h2m16 0h2m22 0h2m4 0h2m4 0h2m38 0h2m28 0h2m8 0h2m6 0h8m4 0h2m14 0h2m2 0h2m6 0h6m2 0h4m4 0h2m6 0h6M156 74h2m4 0h2m4 0h2m8 0h2m4 0h2m2 0h2m2 0h2m26 0h2m4 0h2m22 0h2m50 0h2m20 0h2m6 0h2m22 0h2m4 0h2m6 0h2m6 0h2m26 0h2m6 0h2m4 0h2M156 78h2m4 0h2m6 0h2m8 0h2m2 0h2m10 0h2m12 0h2m12 0h6m72 0h2m28 0h4m14 0h2m4 0h4m4 0h2m4 0h2m8 0h2m12 0h2m4 0h2m4 0h2m2 0h2m4 0h2M162 82h4m2 0h2m14 0h2m12 0h2m26 0h2m22 0h2m56 0h2m26 0h4m12 0h2m2 0h2m4 0h2m10 0h2m4 0h2m4 0h2m12 0h2m4 0h2m2 0h2m4 0h2m2 0h2M156 86h2m2 0h4m12 0h2m4 0h4m4 0h4m2 0h6m18 0h4m26 0h2m6 0h2m2 0h2m62 0h2m2 0h2m4 0h4m8 0h2m2 0h4m8 0h2m4 0h2m14 0h2m4 0h2m12 0h2m6 0h2m2 0h2M152 90h4m2 0h2m4 0h2m12 0h2m2 0h4m4 0h2m4 0h2m24 0h2m14 0h2m22 0h2m68 0h2m2 0h2m24 0h2m2 0h2m6 0h2m4 0h4m8 0h4m4 0h2m14 0h2m2 0h2M154 94h4m12 0h2m4 0h2m2 0h2m8 0h2m4 0h2m8 0h2m2 0h2m10 0h2m26 0h2m82 0h6m8 0h2m26 0h2m2 0h2m6 0h2m6 0h2m10 0h4m8 0h2M170 98h2m4 0h2m2 0h2m2 0h2m24 0h6m2 0h2m2 0h2m16 0h2m6 0h2m8 0h2m64 0h2m2 0h2m2 0h2m2 0h2m10 0h4m2 0h2m20 0h2m2 0h2m16 0h2m4 0h2m10 0h2M162 102h2m10 0h4m4 0h4m2 0h2m2 0h4m28 0h2m22 0h2m78 0h2m2 0h2m12 0h6m2 0h2m40 0h2m8 0h2m8 0h2M152 106h2m8 0h4m4 0h2m2 0h4m4 0h4m2 0h4m30 0h2m16 0h2m28 0h2m40 0h2m10 0h2m12 0h2m6 0h4m4 0h4m2 0h2m4 0h2m2 0h2m2 0h6m14 0h2m10 0h6m2 0h2m2 0h2M162 110h2m6 0h2m2 0h2m16 0h2m12 0h2m10 0h2m28 0h4m76 0h2m26 0h2m10 0h4m2 0h4m20 0h2m2 0h6m6 0h8M156 114h2m4 0h2m8 0h2m16 0h4m34 0h2m10 0h2m6 0h2m8 0h2m72 0h2m8 0h2m6 0h2m14 0h2m2 0h2m24 0h4m14 0h2m2 0h2M156 118h6m12 0h6m10 0h6m6 0h2m22 0h2m30 0h2m24 0h2m6 0h2m26 0h2m16 0h2m8 0h2m4 0h2m10 0h2m6 0h2m8 0h2m2 0h12m4 0h2m8 0h2M156 122h4m18 0h2m26 0h2m12 0h4m6 0h2m8 0h2m2 0h2m22 0h2m14 0h2m48 0h2m2 0h2m6 0h6m2 0h2m2 0h2m10 0h2m2 0h6m10 0h2m2 0h6m4 0h2m10 0h2m6 0h2m2 0h2M148 126h2m6 0h2m2 0h2m6 0h2m4 0h6m10 0h2m20 0h2m6 0h2m2 0h2m14 0h2m2 0h2m12 0h2m24 0h2m46 0h4m10 0h2m2 0h2m18 0h2m2 0h4m6 0h2m8 0h4m12 0h2m4 0h2M210 130h2m12 0h2m22 0h2m4 0h2m2 0h2m8 0h2m16 0h2m44 0h4m10 0h4m20 0h2m2 0h2m2 0h2m2 0h2m10 0h4m6 0h2m2 0h2m4 0h2m2 0h2m4 0h2M164 134h2m2 0h2m2 0h2m4 0h6m18 0h4m26 0h2m4 0h2m36 0h2m8 0h2m24 0h2m6 0h2m26 0h2m8 0h2m6 0h2m18 0h4m4 0h4m16 0h6M152 138h2m2 0h2m10 0h2m2 0h2m26 0h2m2 0h2m16 0h2m4 0h2m4 0h2m28 0h2m6 0h2m12 0h2m14 0h2m22 0h2m16 0h4m6 0h2m2 0h2m22 0h2m10 0h2m12 0h6m2 0h4M156 142h2m4 0h2m18 0h4m8 0h2m2 0h2m26 0h2m4 0h4m28 0h2m10 0h2m24 0h2m16 0h2m4 0h2m4 0h2m6 0h2m4 0h2m2 0h2m2 0h2m6 0h2m2 0h4m12 0h2m6 0h2m6 0h2m10 0h2m2 0h4M160 146h2m14 0h2m20 0h2m20 0h2m2 0h2m2 0h2m8 0h2m24 0h2m66 0h2m12 0h2m4 0h8m6 0h2m4 0h2m12 0h2m14 0h2m6 0h2m6 0h2M162 150h4m16 0h4m10 0h2m2 0h2m10 0h2m4 0h2m8 0h2m4 0h2m2 0h2m12 0h2m46 0h2m20 0h2m6 0h4m2 0h2m2 0h2m8 0h4m2 0h2m14 0h2m10 0h2m4 0h2m2 0h2m6 0h2m4 0h4M158 154h6m4 0h2m12 0h2m4 0h4m8 0h2m10 0h2m10 0h2m8 0h2m10 0h2m4 0h2m6 0h2m10 0h2m26 0h4m18 0h2m4 0h6m14 0h6m6 0h4m2 0h2m18 0h2m2 0h2m2 0h2m2 0h2m8 0h2m4 0h2m8 0h2m2 0h4M160 158h2m8 0h2m10 0h4m2 0h2m6 0h2m4 0h2m8 0h2m20 0h2m16 0h2m18 0h2m26 0h2m26 0h4m4 0h4m8 0h6m2 0h6m4 0h2m8 0h2m20 0h2m8 0h4m4 0h4M14 186h2m14 0h2m22 0h2m18 0h2m18 0h2m4 0h2m4 0h4m6 0h2m2 0h2m2 0h2m14 0h4m4 0h2m8 0h4m24 0h2m26 0h2m4 0h4m8 0h2m14 0h2m4 0h2m2 0h2m2 0h4m2 0h2m2 0h4m12 0h4m6 0h4m2 0h4m16 0h2m4 0h2m2 0h2m6 0h2m12 0h2m4 0h2m8 0h2m8 0h6m10 0h2m2 0h2m4 0h2m6 0h2m8 0h4m22 0h2m2 0h2m20 0h2m26 0h1M78 190h2m310 0h2M340 194h2m26 0h2M24 198h2m2 0h2m158 0h2M40 202h2m36 0h2m108 0h2m160 0h4m74 0h2M40 206h2m36 0h4m106 0h2m114 0h2m12 0h2m96 0h2m10 0h2M108 210h4m62 0h2m10 0h2m114 0h2m116 0h2m44 0h2M174 214h2m10 0h4m98 0h2m130 0h2m44 0h2M28 218h2m78 0h2m32 0h2m150 0h2m22 0h2m170 0h2M28 222h2m2 0h2m176 0h2m42 0h2m62 0h2m38 0h2m34 0h2M28 226h2m60 0h2m4 0h2m176 0h2m28 0h2m12 0h2m74 0h2m24 0h2M90 230h2m182 0h2m28 0h2m34 0h2m78 0h2M12 234h2m196 0h2m138 0h2M90 238h2m44 0h2m72 0h2M10 242h2m22 0h2m298 0h2m152 0h2M10 246h2m142 0h2m102 0h2m32 0h2m178 0h2m14 0h2M10 250h2m158 0h2m38 0h2m46 0h2m128 0h2m24 0h2m46 0h2m28 0h2M126 254h2m42 0h4m18 0h2m64 0h2m128 0h2m24 0h2m34 0h2m10 0h2M4 258h2m120 0h2m130 0h2M4 262h2m142 0h2m20 0h2m86 0h2m6 0h2M130 266h2m4 0h2m44 0h2m26 0h2m54 0h2m94 0h2m6 0h2m62 0h2M152 278h2m260 0h2m6 0h2M152 282h2m104 0h2m102 0h2m22 0h2m16 0h2M152 286h4m4 0h2m172 0h2m8 0h2m12 0h2m2 0h2m50 0h2M154 290h2m4 0h2m156 0h2m24 0h2m4 0h2m10 0h2m14 0h2m6 0h2m2 0h2m24 0h2M196 294h2m28 0h2m22 0h2m62 0h2m2 0h2m30 0h2m8 0h2m6 0h2m8 0h2m6 0h6m6 0h4m2 0h2M182 298h4m42 0h2m28 0h2m52 0h4m2 0h2m12 0h2m2 0h2m12 0h2m6 0h6m4 0h2m8 0h2m2 0h2m2 0h2m10 0h2m4 0h2m14 0h2M152 302h4m2 0h2m14 0h2m6 0h2m10 0h2m30 0h2m34 0h2m72 0h2m10 0h4m8 0h2m6 0h2m8 0h2m4 0h2m6 0h2m14 0h2m2 0h2M150 306h2m22 0h2m2 0h2m14 0h2m2 0h2m40 0h2m2 0h2m8 0h2m48 0h2m26 0h6m10 0h6m2 0h2m4 0h2m2 0h4m2 0h4m8 0h2M156 310h2m14 0h2m8 0h2m14 0h4m24 0h4m10 0h2m2 0h2m22 0h2m44 0h2m2 0h2m28 0h2m20 0h2m4 0h2m2 0h2m14 0h2m14 0h4M146 314h2m4 0h2m2 0h2m10 0h2m10 0h2m4 0h2m4 0h4m26 0h2m2 0h4m8 0h2m22 0h2m36 0h2m8 0h4m4 0h2m18 0h4m4 0h2m22 0h2m8 0h2m12 0h2m14 0h2m2 0h2M168 318h2m4 0h10m6 0h2m4 0h2m8 0h4m4 0h2m8 0h2m6 0h2m4 0h2m4 0h2m72 0h2m16 0h4m16 0h2m2 0h4m8 0h6m14 0h4M150 322h2m16 0h2m6 0h2m4 0h2m6 0h2m2 0h2m4 0h2m4 0h2m2 0h2m4 0h4m14 0h2m22 0h2m4 0h2m4 0h2m32 0h2m4 0h2m10 0h2m8 0h2m2 0h6m6 0h2m4 0h2m2 0h2m6 0h2m2 0h4m6 0h2m10 0h4m4 0h2m10 0h2M172 326h2m4 0h2m2 0h2m4 0h4m2 0h2m8 0h2m4 0h2m4 0h2m2 0h2m4 0h2m4 0h4m12 0h2m18 0h4m54 0h2m8 0h4m4 0h6m8 0h2m2 0h2m2 0h2m2 0h2m2 0h4m6 0h2m8 0h2m6 0h2m4 0h2m4 0h2M176 330h2m4 0h2m4 0h2m2 0h2m10 0h2m4 0h2m2 0h6m6 0h2m20 0h2m20 0h2m14 0h2m22 0h2m6 0h2m16 0h4m2 0h8m8 0h2m4 0h2m4 0h2m2 0h4m4 0h4m22 0h2M172 334h2m4 0h2m12 0h4m4 0h2m14 0h6m4 0h4m38 0h2m12 0h2m20 0h2m12 0h2m12 0h6m6 0h6m14 0h2m10 0h2m4 0h2m4 0h2m2 0h4m6 0h2m8 0h2m2 0h2M154 338h2m2 0h2m12 0h2m14 0h2m2 0h2m20 0h2m2 0h2m6 0h2m74 0h2m34 0h4m2 0h8m4 0h2m4 0h2m12 0h2m4 0h6m4 0h2m6 0h2m6 0h4M146 342h2m6 0h2m6 0h2m24 0h2m2 0h2m32 0h2m2 0h2m38 0h2m2 0h2m4 0h2m30 0h2m18 0h2m4 0h4m4 0h2m2 0h2m2 0h2m4 0h2m12 0h4m14 0h4m4 0h2m10 0h2M154 346h2m2 0h2m6 0h2m12 0h2m10 0h4m18 0h4m12 0h2m16 0h2m6 0h2m2 0h2m2 0h2m6 0h2m28 0h2m34 0h2m4 0h2m30 0h2m14 0h2m8 0h2m2 0h4M154 350h2m10 0h2m4 0h2m4 0h2m8 0h2m4 0h4m16 0h2m14 0h2m20 0h2m2 0h8m8 0h4m26 0h2m28 0h2m12 0h6m8 0h2m2 0h4m2 0h2m20 0h2m2 0h2m4 0h2m4 0h2M158 354h2m20 0h2m14 0h2m8 0h2m6 0h2m12 0h4m22 0h4m2 0h4m2 0h2m4 0h2m28 0h2m14 0h2m12 0h2m14 0h4m6 0h4m10 0h2m2 0h2m4 0h2m16 0h2m6 0h2M158 358h2m6 0h2m4 0h2m6 0h4m10 0h2m52 0h2m4 0h2m2 0h2m42 0h2m24 0h2m2 0h2m10 0h4m24 0h2m8 0h2m6 0h2m10 0h2M154 362h2m2 0h2m8 0h2m2 0h2m4 0h2m12 0h4m32 0h4m4 0h2m10 0h2m68 0h2m8 0h2m2 0h4m24 0h4m22 0h2m12 0h4m4 0h2m2 0h2M152 366h2m12 0h4m2 0h2m4 0h4m8 0h2m4 0h2m6 0h4m22 0h2m24 0h2m2 0h4m4 0h2m2 0h2m44 0h2m2 0h2m4 0h2m12 0h2m4 0h4m8 0h4m12 0h2m2 0h2m4 0h2m14 0h2m2 0h8M148 370h2m8 0h2m4 0h2m14 0h4m2 0h2m2 0h2m4 0h2m20 0h2m10 0h2m2 0h2m12 0h2m12 0h2m8 0h2m48 0h2m26 0h2m8 0h2m4 0h2m8 0h2m4 0h4m12 0h6m6 0h4M158 374h4m2 0h2m2 0h2m20 0h4m2 0h2m6 0h2m4 0h4m4 0h2m14 0h2m8 0h2m14 0h4m4 0h2m2 0h2m28 0h2m8 0h2m14 0h2m2 0h2m2 0h2m2 0h2m4 0h2m2 0h2m4 0h2m6 0h4m14 0h2m10 0h2m2 0h2M156 378h6m2 0h4m12 0h4m6 0h4m16 0h2m6 0h2m4 0h2m8 0h2m2 0h2m4 0h2m2 0h2m6 0h2m10 0h2m2 0h2m34 0h4m6 0h4m12 0h4m2 0h2m8 0h2m8 0h2m10 0h2m2 0h4m2 0h2m10 0h2m10 0h6M158 382h4m2 0h4m16 0h2m6 0h6m8 0h4m8 0h4m2 0h2m10 0h2m18 0h8m38 0h2m6 0h2m4 0h2m16 0h4m2 0h2m6 0h2m10 0h2m4 0h2m4 0h4m6 0h4m12 0h8M160 386h2m2 0h2m16 0h4m8 0h4m12 0h4m6 0h2m12 0h2m22 0h4m10 0h2m12 0h2m22 0h2m4 0h4m14 0h4m12 0h2m4 0h2m18 0h2m20 0h2m4 0h8M178 390h2m2 0h4m2 0h2m2 0h4m8 0h2m4 0h2m2 0h6m4 0h2m12 0h2m18 0h4m10 0h2m38 0h2m2 0h4m8 0h2m10 0h2m10 0h2m2 0h2m18 0h2m4 0h2m4 0h2m20 0h2M146 394h2m10 0h2m26 0h2m20 0h2m2 0h6m10 0h2m6 0h4m8 0h2m8 0h2m10 0h2m30 0h2m4 0h4m10 0h2m4 0h8m2 0h4m8 0h2m2 0h4m20 0h2m2 0h4m2 0h2m14 0h2m2 0h2M152 398h2m4 0h2m10 0h2m2 0h2m8 0h6m2 0h4m18 0h4m2 0h2m26 0h2m10 0h2m40 0h2m22 0h4m2 0h2m4 0h2m10 0h2m8 0h2m16 0h2m4 0h2m18 0h2m2 0h2m2 0h2M154 402h6m4 0h2m4 0h2m2 0h2m12 0h2m24 0h2m4 0h2m4 0h2m20 0h2m4 0h2m4 0h4m6 0h2m38 0h2m6 0h6m2 0h2m26 0h2m22 0h2m6 0h2m10 0h2m8 0h2m2 0h4M152 406h2m2 0h6m2 0h2m4 0h2m2 0h2m4 0h2m4 0h2m38 0h2m78 0h2m10 0h6m8 0h4m8 0h2m10 0h2m14 0h4m2 0h2m8 0h2m18 0h4M156 410h2m10 0h2m4 0h4m34 0h2m6 0h2m32 0h2m28 0h2m36 0h2m8 0h2m18 0h2m2 0h2m12 0h2m2 0h2m2 0h2m4 0h4m10 0h2m6 0h6m2 0h4M156 414h2m2 0h2m4 0h4m2 0h4m18 0h2m16 0h2m34 0h2m34 0h2m30 0h4m8 0h2m2 0h2m14 0h2m4 0h2m14 0h2m2 0h2m2 0h2m6 0h4m8 0h4m12 0h4M156 418h2m10 0h2m6 0h2m14 0h2m14 0h2m8 0h4m8 0h2m22 0h2m6 0h2m8 0h2m52 0h4m2 0h2m14 0h2m8 0h2m6 0h2m2 0h2m14 0h6m8 0h2m2 0h2m2 0h2M156 422h2m4 0h2m12 0h2m6 0h2m6 0h2m14 0h2m4 0h2m2 0h2m6 0h2m24 0h2m8 0h2m12 0h2m48 0h4m6 0h4m18 0h2m14 0h2m12 0h4m2 0h2m2 0h2m4 0h2m4 0h2M156 426h2m4 0h4m14 0h6m6 0h2m14 0h2m16 0h2m4 0h2m18 0h2m8 0h2m50 0h2m50 0h2m6 0h2m6 0h2m10 0h2m2 0h2m6 0h2m6 0h4M160 430h6m8 0h2m6 0h4m6 0h2m2 0h2m16 0h2m14 0h2m2 0h2m2 0h2m8 0h2m4 0h2m4 0h4m8 0h2m2 0h2m24 0h2m4 0h2m4 0h2m10 0h4m6 0h2m2 0h2m8 0h2m12 0h2m8 0h2m6 0h2m6 0h2m4 0h2m4 0h2m2 0h2m2 0h2M158 434h2m2 0h2m14 0h2m26 0h2m6 0h2m14 0h2m2 0h2m14 0h2m2 0h2m16 0h2m28 0h2m18 0h2m4 0h2m2 0h2m16 0h2m10 0h6m2 0h2m2 0h2m14 0h6m4 0h2m4 0h2m2 0h2M162 438h2m10 0h2m18 0h4m8 0h2m6 0h4m8 0h2m6 0h2m52 0h2m18 0h2m18 0h2m10 0h2m20 0h2m2 0h2m10 0h2m10 0h4m2 0h4m6 0h2M160 442h4m10 0h2m6 0h2m10 0h2m10 0h2m4 0h4m10 0h2m10 0h2m8 0h2m2 0h4m34 0h2m16 0h2m16 0h2m8 0h2m4 0h2m18 0h6m16 0h2m2 0h2m8 0h4m10 0h2" stroke="#001fe8" stroke-width="4"/><path d="M158 2h2m8 0h2m18 0h2m46 0h2m94 0h2m4 0h2m8 0h2m8 0h4m2 0h2m16 0h2m16 0h2m28 0h2M148 6h2m8 0h2m20 0h4m52 0h2m94 0h2m12 0h4m8 0h2m10 0h2m8 0h2m10 0h2m2 0h2m22 0h2M154 10h2m2 0h2m44 0h2m30 0h2m36 0h2m56 0h2m12 0h2m10 0h2m4 0h2m12 0h4m10 0h2m6 0h2m16 0h2M164 14h2m14 0h2m22 0h2m24 0h2m116 0h2m44 0h2m4 0h2M152 18h2m10 0h2m14 0h2m8 0h2m10 0h4m30 0h2m16 0h2m72 0h2m20 0h2m6 0h2m20 0h4m8 0h4m4 0h2m14 0h4M162 22h2m20 0h2m2 0h4m10 0h2m20 0h2m10 0h2m112 0h2m4 0h2m14 0h2m6 0h6m14 0h2m14 0h2m2 0h2M156 26h2m2 0h2m6 0h2m4 0h2m6 0h4m34 0h2m10 0h2m4 0h4m66 0h2m22 0h4m4 0h2m2 0h2m4 0h2m4 0h4m6 0h2m6 0h2m4 0h4m12 0h4m2 0h2m12 0h2M154 30h2m4 0h2m24 0h2m28 0h2m10 0h2m10 0h2m10 0h4m10 0h2m34 0h2m20 0h2m4 0h2m2 0h2m10 0h2m4 0h2m10 0h4m10 0h6m14 0h2m8 0h2m2 0h4M160 34h2m8 0h2m4 0h2m2 0h4m2 0h2m8 0h2m18 0h2m2 0h2m8 0h2m4 0h6m14 0h2m44 0h2m20 0h2m16 0h4m12 0h2m10 0h2m8 0h4m24 0h2m2 0h2m6 0h2M156 38h6m4 0h2m8 0h2m2 0h2m2 0h6m6 0h2m22 0h2m14 0h2m2 0h2m2 0h2m4 0h2m4 0h2m2 0h2m10 0h2m34 0h2m14 0h2m16 0h2m34 0h4m8 0h2m6 0h2m4 0h2m2 0h2m2 0h4m12 0h2M160 42h2m6 0h2m12 0h2m2 0h2m4 0h2m2 0h2m18 0h2m10 0h6m4 0h2m4 0h2m8 0h4m40 0h4m6 0h2m14 0h4m28 0h2m8 0h2m10 0h2m2 0h2m10 0h2m12 0h2m4 0h2m6 0h2M156 46h2m2 0h2m6 0h4m14 0h2m2 0h2m4 0h4m2 0h2m6 0h2m14 0h2m2 0h2m2 0h2m16 0h2m10 0h2m42 0h2m6 0h2m6 0h2m4 0h2m2 0h2m10 0h2m2 0h2m6 0h2m2 0h6m14 0h2m20 0h4m2 0h2m2 0h2M160 50h2m6 0h2m2 0h4m2 0h4m4 0h2m2 0h2m2 0h2m10 0h2m2 0h2m12 0h2m16 0h2m22 0h2m8 0h2m48 0h2m2 0h4m12 0h6m4 0h2m2 0h2m6 0h2m8 0h6m6 0h2m2 0h4m4 0h2m10 0h2M160 54h2m6 0h2m2 0h2m4 0h4m4 0h2m16 0h2m4 0h2m8 0h4m8 0h6m2 0h2m6 0h2m2 0h2m24 0h2m28 0h2m16 0h2m14 0h2m2 0h2m8 0h4m6 0h2m2 0h2m8 0h2m12 0h2m10 0h2M154 58h4m10 0h2m20 0h2m6 0h2m2 0h2m10 0h4m2 0h2m8 0h2m2 0h2m12 0h2m2 0h2m10 0h2m12 0h2m22 0h2m4 0h2m38 0h2m4 0h2m8 0h10m6 0h2m12 0h2m10 0h2m8 0h2m2 0h2M166 62h2m18 0h4m6 0h2m8 0h2m16 0h2m2 0h2m4 0h2m16 0h2m24 0h2m22 0h2m6 0h2m22 0h2m6 0h2m2 0h4m4 0h2m10 0h8m6 0h2m24 0h2m8 0h2M156 66h2m6 0h4m20 0h2m24 0h2m4 0h2m30 0h2m2 0h4m6 0h2m4 0h2m2 0h2m24 0h2m28 0h2m8 0h2m2 0h2m2 0h2m4 0h2m10 0h6m30 0h2m6 0h2M156 70h2m10 0h2m10 0h4m2 0h2m6 0h2m18 0h4m2 0h4m4 0h2m4 0h2m22 0h2m36 0h2m10 0h2m14 0h2m20 0h4m8 0h2m10 0h2m8 0h2m30 0h2m6 0h2m6 0h2M158 74h2m4 0h2m4 0h2m4 0h2m2 0h2m12 0h2m12 0h4m2 0h6m8 0h4m2 0h2m4 0h2m26 0h2m56 0h2m18 0h10m2 0h2m6 0h2m4 0h2m6 0h4m8 0h2m4 0h4M168 78h2m2 0h2m4 0h2m8 0h2m10 0h2m6 0h2m4 0h6m2 0h2m8 0h2m6 0h2m8 0h2m10 0h2m44 0h2m14 0h4m24 0h2m8 0h2m2 0h2m4 0h4m2 0h2m2 0h2m8 0h2m20 0h2m2 0h4M156 82h6m12 0h2m10 0h2m6 0h4m2 0h2m6 0h4m4 0h2m2 0h2m2 0h2m6 0h6m2 0h2m26 0h2m32 0h2m8 0h2m12 0h2m2 0h2m2 0h2m10 0h2m6 0h2m2 0h2m18 0h2m2 0h2m8 0h4m18 0h2m2 0h2M154 86h2m2 0h2m10 0h2m6 0h2m6 0h4m20 0h4m2 0h4m6 0h6m2 0h2m2 0h2m14 0h4m10 0h2m10 0h2m20 0h2m6 0h4m44 0h2m6 0h4m2 0h4m2 0h6m10 0h2m4 0h2m8 0h2m4 0h2M160 90h4m4 0h4m14 0h2m12 0h2m6 0h8m2 0h2m4 0h6m4 0h2m12 0h4m8 0h2m6 0h4m30 0h2m6 0h4m10 0h4m2 0h2m16 0h2m2 0h2m4 0h4m2 0h2m2 0h2m2 0h2m24 0h2m8 0h2m14 0h2M152 94h2m4 0h2m4 0h2m12 0h2m2 0h6m12 0h2m6 0h2m2 0h4m2 0h2m6 0h4m4 0h2m2 0h2m8 0h2m12 0h2m6 0h2m20 0h2m8 0h2m8 0h2m6 0h8m32 0h2m6 0h2m4 0h2m14 0h6m2 0h4m12 0h2m8 0h2M152 98h2m8 0h4m12 0h2m8 0h2m4 0h4m2 0h2m6 0h2m6 0h2m10 0h4m18 0h2m18 0h2m38 0h2m8 0h4m22 0h2m8 0h2m4 0h4m8 0h2m6 0h2m6 0h6m12 0h2m2 0h4m2 0h4M158 102h2m4 0h2m2 0h2m8 0h4m18 0h2m8 0h8m10 0h2m10 0h2m8 0h2m2 0h2m6 0h2m6 0h2m38 0h4m6 0h2m2 0h4m6 0h2m20 0h2m4 0h2m4 0h2m2 0h4m4 0h2m12 0h2m2 0h2m8 0h2m2 0h4M160 106h2m4 0h2m10 0h2m14 0h4m2 0h2m2 0h6m2 0h2m16 0h2m16 0h4m26 0h2m30 0h2m8 0h2m6 0h2m2 0h2m2 0h2m20 0h2m4 0h2m2 0h2m10 0h2m18 0h2m10 0h2m2 0h2M160 110h2m2 0h2m2 0h2m2 0h2m2 0h4m4 0h2m8 0h4m6 0h2m2 0h2m2 0h2m8 0h2m4 0h2m14 0h2m32 0h2m12 0h2m8 0h2m18 0h2m8 0h2m2 0h4m6 0h2m30 0h2m10 0h2m2 0h2m4 0h2m10 0h2M160 114h2m2 0h2m2 0h4m2 0h8m12 0h2m8 0h2m6 0h2m8 0h2m2 0h2m34 0h2m14 0h2m12 0h2m8 0h2m8 0h2m6 0h2m6 0h2m6 0h2m8 0h2m10 0h4m6 0h2m8 0h2m2 0h2m8 0h4m4 0h2m6 0h2m2 0h2M152 118h2m14 0h2m28 0h2m10 0h4m8 0h2m4 0h2m24 0h2m14 0h2m6 0h2m42 0h2m10 0h4m8 0h2m2 0h2m6 0h2m8 0h2m8 0h2m2 0h2m16 0h2m6 0h2m2 0h2m2 0h4M160 122h4m4 0h2m4 0h4m10 0h2m2 0h2m30 0h4m18 0h4m4 0h2m8 0h2m4 0h2m4 0h6m6 0h4m4 0h2m12 0h2m16 0h2m6 0h2m22 0h2m20 0h4m6 0h2m20 0h2M186 126h4m2 0h6m6 0h4m24 0h2m12 0h4m4 0h2m8 0h2m10 0h2m8 0h2m2 0h2m4 0h2m22 0h2m8 0h2m4 0h2m4 0h2m4 0h2m8 0h4m16 0h2m2 0h2m6 0h2m12 0h2m2 0h2m10 0h2M152 130h2m2 0h6m2 0h2m2 0h2m4 0h2m2 0h2m6 0h4m2 0h8m2 0h4m6 0h2m2 0h2m4 0h2m8 0h2m6 0h2m2 0h4m16 0h2m4 0h2m12 0h2m2 0h4m8 0h2m26 0h2m6 0h2m20 0h2m6 0h2m16 0h2m4 0h2m24 0h2m2 0h2M158 134h2m2 0h2m10 0h2m10 0h4m2 0h2m2 0h2m12 0h2m4 0h2m4 0h2m2 0h2m6 0h2m4 0h6m2 0h2m4 0h2m2 0h4m2 0h2m6 0h2m16 0h2m4 0h2m4 0h2m18 0h2m2 0h2m40 0h4m2 0h2m6 0h4m4 0h4m10 0h2m2 0h2M160 138h6m8 0h2m2 0h2m8 0h2m2 0h8m10 0h4m2 0h4m6 0h2m2 0h4m8 0h6m6 0h2m4 0h2m14 0h2m12 0h2m28 0h4m42 0h2m4 0h2m10 0h2m4 0h2m12 0h2m8 0h2M160 142h2m2 0h2m2 0h2m8 0h2m8 0h2m6 0h2m2 0h2m6 0h2m2 0h2m8 0h4m4 0h2m10 0h2m2 0h2m38 0h2m2 0h4m18 0h2m8 0h2m24 0h2m2 0h2m4 0h2m12 0h2m10 0h2m6 0h2m2 0h2m2 0h4M158 146h2m2 0h8m2 0h2m8 0h4m10 0h2m2 0h2m6 0h2m2 0h2m4 0h2m2 0h2m8 0h4m16 0h2m36 0h2m10 0h2m10 0h2m6 0h2m2 0h6m42 0h2m6 0h4m6 0h2m6 0h2m14 0h2m2 0h2M166 150h2m4 0h2m14 0h2m4 0h2m12 0h2m12 0h4m6 0h2m8 0h2m20 0h2m36 0h2m2 0h4m4 0h2m8 0h6m18 0h2m8 0h6m2 0h2m14 0h2m14 0h2m16 0h6M164 154h4m2 0h2m2 0h2m18 0h2m12 0h2m12 0h2m2 0h6m6 0h2m24 0h2m12 0h2m26 0h4m4 0h2m8 0h4m8 0h2m2 0h4m10 0h2m2 0h2m10 0h2m10 0h4m18 0h2m4 0h2m8 0h2M174 158h2m14 0h2m2 0h2m22 0h2m6 0h2m10 0h2m6 0h2m14 0h2m10 0h2m30 0h4m16 0h2m4 0h2m6 0h4m18 0h2m6 0h2m18 0h8m4 0h4m8 0h2m8 0h2m4 0h2m2 0h2M4 186h2m36 0h2m6 0h2m4 0h2m2 0h2m8 0h2m40 0h4m6 0h2m4 0h2m14 0h4m14 0h4m4 0h2m4 0h2m2 0h2m6 0h2m20 0h4m2 0h4m6 0h2m18 0h2m4 0h2m12 0h2m2 0h2m10 0h2m2 0h2m30 0h4m22 0h2m2 0h2m20 0h2m2 0h2m4 0h2m6 0h2m22 0h2m24 0h6m16 0h2m8 0h2m2 0h2m4 0h2m10 0h2m10 0h2M6 190h2m2 0h4m8 0h2m16 0h2m68 0h2m70 0h2m118 0h2m22 0h2m4 0h2m42 0h2m68 0h2m2 0h2m12 0h2m20 0h2m2 0h2m4 0h2m2 0h2M10 194h4m4 0h2m2 0h2m4 0h2m10 0h2m48 0h2m10 0h2m30 0h2m46 0h6m66 0h2m46 0h2m14 0h2m38 0h2m6 0h2M12 198h2m4 0h2m2 0h2m16 0h2m76 0h2m70 0h2m110 0h2m2 0h2m32 0h2m4 0h2m4 0h2m2 0h2m10 0h2m98 0h2M12 202h2m2 0h2m4 0h2m4 0h2m50 0h2m50 0h2m22 0h2m160 0h4m24 0h2m38 0h2m2 0h2m2 0h2m4 0h2m28 0h2m14 0h2M8 206h2m2 0h2m2 0h2m10 0h2m20 0h2m6 0h2m96 0h2m16 0h2m90 0h2m26 0h2m82 0h2m4 0h4m8 0h2m102 0h2M18 210h2m70 0h2m4 0h2m134 0h2m94 0h2m10 0h2m8 0h2m42 0h2m20 0h2m28 0h2m30 0h2M24 214h2m6 0h2m56 0h2m4 0h2m10 0h2m32 0h2m88 0h2m68 0h2m36 0h2m4 0h2m38 0h2m6 0h2m50 0h2m30 0h2M30 218h2m2 0h2m14 0h2m26 0h4m2 0h2m10 0h2m14 0h2m50 0h2m44 0h2m42 0h2m2 0h2m14 0h2m12 0h2m68 0h2m18 0h2m14 0h2m42 0h2m28 0h2m18 0h2M30 222h2m18 0h2m26 0h4m30 0h2m28 0h2m34 0h2m8 0h2m2 0h2m48 0h2m14 0h2m14 0h2m28 0h2m40 0h2m2 0h2m26 0h2m18 0h2m38 0h2m26 0h2m22 0h2M32 226h4m44 0h2m28 0h2m24 0h2m18 0h2m6 0h2m44 0h2m90 0h2m36 0h2m12 0h2m2 0h2m18 0h2m34 0h2m22 0h2m16 0h2M12 230h2m18 0h2m42 0h2m42 0h2m14 0h2m6 0h2m10 0h2m14 0h2m84 0h2m32 0h4m4 0h2m16 0h2m18 0h2m28 0h2m26 0h2m16 0h2m22 0h2m10 0h2M6 234h2m2 0h2m16 0h2m80 0h2m24 0h2m34 0h2m24 0h4m6 0h2m118 0h2m50 0h2m6 0h2m22 0h2m24 0h2M12 238h2m14 0h2m48 0h2m120 0h2m136 0h4m8 0h4m2 0h2m50 0h2m28 0h2m48 0h2M28 242h2m56 0h2m2 0h2m44 0h2m16 0h2m32 0h2m58 0h2m8 0h2m32 0h2m12 0h2m44 0h2m36 0h2m22 0h2m52 0h2m2 0h2M32 246h4m50 0h2m24 0h2m102 0h2m30 0h2m56 0h2m26 0h2m12 0h2m12 0h2m8 0h2m12 0h2m4 0h2m20 0h2m52 0h2M86 250h2m2 0h2m8 0h2m10 0h2m12 0h4m42 0h2m42 0h2m116 0h2m4 0h2m44 0h2m28 0h4m30 0h2m12 0h2M4 254h2m4 0h2m78 0h2m20 0h2m54 0h2m78 0h2m90 0h2m36 0h2m38 0h2m18 0h2m24 0h2m26 0h2M10 258h2m4 0h2m8 0h2m6 0h6m80 0h2m48 0h2m140 0h2m26 0h2m6 0h2m12 0h2m8 0h2m4 0h2m70 0h2m10 0h4m2 0h2m22 0h2M2 262h2m34 0h2m50 0h2m16 0h2m16 0h2m54 0h2m6 0h2m48 0h2m40 0h2m6 0h2m20 0h2m38 0h2m8 0h2m14 0h2m74 0h2m12 0h2m2 0h2M146 266h2m30 0h2m10 0h2m8 0h2m30 0h2m78 0h2m10 0h2m14 0h2m14 0h2m6 0h2m16 0h2m16 0h6m8 0h2m6 0h2m4 0h6M146 270h2m266 0h2m8 0h2m4 0h2M140 274h2m2 0h4m4 0h2m6 0h2m260 0h4M160 278h2m256 0h2M154 282h2m4 0h2m20 0h2m2 0h2m2 0h2m48 0h2m14 0h2m16 0h2m76 0h2m24 0h2m8 0h4m6 0h4m16 0h4M182 286h6m4 0h2m2 0h2m16 0h2m2 0h2m38 0h2m2 0h2m10 0h2m42 0h2m16 0h2m2 0h2m4 0h2m18 0h2m10 0h2m4 0h2m2 0h4m6 0h2m4 0h2m10 0h2M174 290h2m8 0h2m4 0h2m2 0h2m30 0h2m12 0h2m8 0h2m2 0h2m6 0h2m50 0h2m18 0h4m8 0h2m6 0h2m2 0h4m10 0h2m10 0h2m18 0h2m6 0h2M158 294h4m12 0h2m6 0h2m2 0h2m26 0h2m38 0h2m2 0h2m10 0h2m6 0h2m30 0h4m12 0h2m8 0h2m2 0h2m12 0h4m8 0h2m8 0h2m32 0h2M150 298h4m4 0h4m16 0h4m4 0h2m6 0h2m18 0h2m24 0h2m2 0h2m16 0h2m6 0h2m8 0h2m22 0h2m4 0h2m16 0h2m10 0h2m2 0h2m10 0h2m6 0h4m6 0h2m32 0h2M150 302h2m4 0h2m6 0h2m2 0h2m6 0h6m4 0h2m2 0h2m6 0h2m14 0h2m8 0h2m2 0h2m10 0h2m12 0h2m18 0h2m2 0h4m42 0h6m2 0h4m4 0h2m2 0h4m8 0h2m4 0h6m6 0h2m20 0h4M156 306h6m2 0h2m2 0h2m6 0h2m8 0h2m12 0h2m12 0h2m2 0h2m4 0h2m2 0h2m12 0h2m12 0h2m10 0h2m4 0h2m2 0h2m30 0h2m6 0h2m4 0h6m8 0h10m6 0h2m2 0h2m4 0h2m4 0h2m4 0h2m2 0h2m10 0h2m2 0h4m10 0h4M158 310h2m8 0h2m4 0h2m4 0h2m4 0h2m6 0h2m10 0h2m6 0h2m2 0h2m12 0h2m12 0h2m8 0h2m6 0h2m6 0h4m28 0h2m4 0h2m4 0h2m6 0h4m2 0h2m6 0h10m2 0h4m8 0h2m2 0h4m14 0h2m6 0h4m14 0h2M164 314h2m6 0h4m2 0h2m8 0h4m8 0h2m4 0h2m4 0h4m8 0h2m14 0h2m2 0h2m4 0h4m6 0h2m8 0h2m32 0h2m8 0h2m6 0h4m36 0h2m2 0h4m6 0h2m6 0h2m6 0h2m6 0h2m2 0h2M156 318h6m8 0h4m12 0h4m8 0h4m20 0h2m2 0h4m12 0h2m12 0h2m6 0h2m4 0h2m28 0h2m38 0h4m10 0h2m8 0h6m32 0h4M170 322h2m6 0h4m4 0h4m8 0h2m4 0h2m2 0h2m10 0h2m2 0h10m2 0h4m12 0h2m14 0h2m4 0h2m4 0h2m6 0h4m20 0h2m46 0h6m10 0h2m6 0h2m16 0h4M164 326h6m30 0h2m4 0h4m4 0h2m12 0h4m20 0h2m4 0h2m4 0h2m32 0h2m2 0h2m4 0h2m8 0h2m2 0h2m8 0h2m22 0h2m2 0h2m38 0h2m10 0h2M152 330h2m2 0h4m6 0h2m4 0h2m4 0h4m8 0h2m16 0h2m18 0h2m20 0h4m4 0h2m4 0h2m8 0h2m2 0h6m18 0h4m2 0h2m2 0h2m18 0h2m6 0h2m8 0h2m14 0h2m30 0h4m10 0h4M152 334h2m2 0h4m2 0h2m2 0h2m20 0h4m16 0h4m2 0h2m6 0h2m6 0h2m16 0h2m2 0h2m4 0h2m4 0h2m6 0h4m10 0h2m14 0h2m24 0h2m8 0h2m2 0h2m8 0h2m2 0h4m6 0h2m6 0h2m10 0h2m22 0h2M152 338h2m6 0h4m2 0h2m8 0h6m8 0h2m8 0h2m4 0h4m6 0h2m4 0h2m6 0h2m6 0h2m12 0h2m4 0h2m4 0h2m8 0h2m10 0h2m22 0h4m12 0h4m2 0h6m4 0h2m14 0h2m6 0h2m34 0h2m2 0h2M152 342h2m2 0h4m6 0h2m8 0h4m10 0h2m6 0h4m4 0h4m6 0h4m2 0h2m28 0h2m4 0h2m4 0h2m6 0h2m36 0h2m14 0h4m6 0h2m18 0h2m4 0h6m14 0h2m6 0h2m10 0h2m2 0h2m6 0h2M156 346h2m4 0h2m14 0h2m8 0h4m6 0h4m4 0h2m10 0h2m26 0h2m2 0h4m4 0h2m2 0h2m42 0h2m2 0h2m10 0h2m10 0h2m4 0h2m8 0h2m4 0h2m4 0h6m6 0h2m6 0h2m2 0h2M156 350h2m2 0h2m6 0h2m36 0h6m4 0h2m18 0h2m6 0h8m12 0h4m60 0h2m4 0h2m2 0h4m10 0h2m8 0h2m8 0h2m8 0h2m20 0h2M154 354h4m6 0h4m4 0h4m2 0h2m8 0h2m18 0h4m4 0h2m18 0h4m6 0h2m10 0h2m14 0h2m50 0h2m10 0h2m22 0h2m6 0h2m8 0h2m20 0h4M154 358h2m12 0h4m14 0h2m2 0h2m4 0h2m8 0h4m4 0h4m10 0h2m2 0h2m10 0h2m6 0h2m6 0h4m8 0h4m34 0h2m6 0h2m14 0h2m12 0h2m8 0h2m6 0h2m12 0h2m18 0h2m2 0h4M166 362h2m2 0h2m8 0h2m4 0h2m2 0h2m4 0h2m10 0h2m6 0h4m22 0h4m12 0h2m10 0h6m26 0h2m18 0h2m18 0h2m2 0h4m8 0h2m20 0h2m22 0h4M156 366h4m4 0h2m4 0h2m14 0h2m20 0h2m4 0h6m4 0h2m2 0h2m14 0h2m12 0h2m6 0h2m2 0h2m2 0h2m26 0h2m4 0h2m22 0h4m20 0h4m6 0h2m2 0h2m18 0h2m8 0h2M152 370h2m2 0h2m14 0h4m16 0h2m4 0h4m2 0h2m4 0h6m28 0h2m6 0h2m2 0h4m10 0h2m36 0h2m22 0h6m10 0h2m6 0h2m4 0h4m4 0h2m2 0h2M152 374h2m2 0h2m8 0h2m4 0h2m4 0h4m4 0h2m26 0h2m20 0h4m8 0h2m6 0h4m10 0h2m44 0h2m4 0h2m10 0h2m2 0h2m8 0h2m10 0h2m12 0h2m14 0h2m8 0h2m2 0h2M152 378h4m22 0h2m18 0h2m4 0h2m2 0h2m2 0h2m14 0h2m28 0h8m46 0h2m8 0h2m8 0h2m12 0h4m6 0h4m4 0h2m8 0h2m22 0h4m2 0h2M154 382h2m24 0h2m22 0h2m4 0h2m2 0h2m18 0h2m12 0h2m4 0h2m10 0h4m2 0h2m12 0h2m44 0h2m8 0h2m6 0h4m22 0h2m16 0h2m16 0h2M152 386h2m4 0h2m14 0h2m2 0h2m24 0h2m2 0h2m4 0h2m8 0h2m10 0h4m10 0h2m4 0h2m4 0h2m4 0h4m30 0h2m8 0h2m8 0h2m6 0h4m8 0h2m40 0h2m4 0h2m8 0h2m10 0h2M152 390h2m4 0h8m4 0h2m2 0h2m4 0h2m4 0h2m8 0h2m14 0h2m6 0h4m4 0h2m12 0h2m4 0h4m16 0h4m32 0h2m2 0h2m12 0h2m6 0h4m66 0h2m6 0h2M174 394h2m4 0h6m6 0h6m24 0h2m26 0h2m16 0h2m2 0h2m10 0h2m18 0h2m12 0h2m6 0h2m14 0h2m2 0h2m10 0h4m32 0h2m10 0h2M164 398h2m12 0h4m30 0h2m8 0h2m2 0h4m6 0h2m4 0h2m10 0h2m2 0h2m10 0h4m10 0h2m14 0h2m2 0h2m12 0h2m2 0h2m22 0h2m4 0h2m4 0h2m8 0h2m24 0h2m10 0h2m2 0h2M178 402h4m4 0h2m4 0h2m18 0h2m4 0h2m2 0h4m8 0h4m4 0h2m14 0h2m12 0h2m10 0h2m20 0h2m6 0h2m16 0h2m4 0h2m6 0h2m12 0h2m8 0h2m16 0h2m4 0h2m10 0h2m2 0h2M178 406h2m8 0h2m20 0h6m2 0h2m10 0h2m2 0h4m18 0h6m18 0h2m4 0h2m6 0h2m8 0h2m4 0h4m2 0h2m20 0h2m14 0h2m4 0h2m20 0h4m4 0h2m6 0h2m6 0h2m4 0h4M158 410h4m10 0h2m4 0h4m14 0h2m20 0h2m4 0h2m10 0h2m14 0h2m2 0h6m14 0h2m8 0h2m6 0h2m14 0h4m4 0h4m16 0h2m2 0h2m10 0h2m16 0h2M158 414h2m16 0h4m18 0h2m2 0h2m10 0h4m2 0h2m2 0h2m26 0h2m16 0h4m2 0h2m8 0h2m6 0h2m10 0h2m2 0h4m24 0h2m16 0h2m2 0h2m6 0h2m2 0h2M164 418h4m4 0h4m6 0h2m6 0h2m2 0h2m2 0h2m2 0h2m10 0h2m8 0h2m8 0h4m10 0h2m2 0h2m16 0h2m4 0h2m2 0h2m4 0h2m6 0h2m12 0h6m4 0h2m16 0h2m8 0h2m6 0h4m16 0h2m4 0h2M164 422h4m4 0h4m2 0h2m2 0h2m6 0h2m4 0h2m14 0h2m6 0h2m8 0h2m16 0h2m20 0h2m22 0h2m12 0h2m2 0h2m2 0h2m14 0h2m22 0h2m2 0h6m14 0h2m10 0h2m6 0h2M174 426h6m10 0h2m2 0h2m6 0h2m8 0h2m4 0h2m4 0h2m4 0h2m2 0h2m12 0h4m18 0h2m4 0h2m24 0h2m4 0h2m12 0h2m8 0h2m30 0h2m4 0h2m8 0h2m28 0h2M158 430h2m16 0h4m6 0h2m2 0h2m2 0h2m6 0h4m2 0h2m2 0h2m4 0h2m6 0h2m16 0h2m4 0h2m32 0h2m4 0h2m12 0h2m16 0h2m8 0h2m14 0h2m18 0h4m8 0h2m12 0h2m2 0h2M174 434h4m4 0h6m2 0h4m2 0h4m8 0h2m2 0h2m30 0h2m2 0h2m2 0h2m6 0h2m4 0h2m8 0h2m10 0h2m24 0h2m2 0h4m8 0h2m4 0h2m2 0h2m38 0h4m12 0h2M166 438h2m8 0h4m2 0h4m6 0h2m4 0h2m2 0h2m4 0h2m14 0h2m6 0h2m10 0h2m6 0h4m8 0h4m22 0h2m2 0h2m6 0h2m14 0h2m12 0h2m2 0h2m4 0h2m20 0h2m16 0h2m26 0h4M166 442h2m16 0h2m4 0h4m2 0h6m22 0h2m8 0h2m30 0h2m4 0h2m40 0h2m2 0h4m6 0h4m8 0h2m2 0h4m22 0h2m10 0h2m6 0h4m2 0h2" stroke="#0036f5" stroke-width="4"/><path d="M156 2h2m12 0h2m8 0h6m6 0h2m24 0h8m34 0h2m56 0h2m16 0h2m2 0h2m4 0h2m2 0h2m14 0h2m2 0h6m16 0h4m6 0h2m16 0h6M172 6h2m14 0h2m6 0h2m24 0h4m4 0h2m20 0h4m4 0h2m12 0h2m42 0h2m8 0h2m6 0h6m8 0h2m8 0h2m10 0h2m2 0h2m4 0h2m10 0h2m6 0h4M170 10h2m4 0h2m2 0h2m2 0h2m2 0h2m6 0h2m26 0h2m4 0h2m14 0h2m4 0h2m74 0h2m6 0h4m8 0h2m16 0h2m2 0h2m10 0h2m10 0h4m10 0h4M154 14h2m28 0h2m2 0h2m2 0h2m28 0h4m10 0h2m16 0h2m72 0h2m14 0h2m4 0h2m4 0h6m8 0h2m2 0h2m2 0h6m28 0h2m2 0h2M188 18h2m2 0h2m14 0h6m8 0h2m6 0h4m40 0h2m80 0h2m2 0h2m4 0h2m2 0h2m6 0h2m40 0h2M150 22h2m4 0h4m14 0h2m34 0h4m8 0h2m6 0h2m12 0h2m8 0h2m18 0h2m56 0h4m12 0h2m2 0h2m4 0h4m12 0h2m2 0h2m12 0h2m4 0h2m8 0h2M166 26h2m8 0h2m8 0h2m4 0h2m16 0h2m2 0h4m4 0h2m4 0h4m18 0h8m16 0h2m26 0h2m20 0h2m20 0h4m2 0h2m24 0h2m24 0h2m2 0h2m2 0h4M156 30h2m12 0h2m4 0h2m16 0h6m10 0h4m10 0h2m18 0h4m8 0h2m12 0h4m30 0h2m6 0h2m12 0h2m14 0h2m10 0h4m4 0h2M156 34h2m14 0h2m18 0h2m10 0h2m42 0h2m8 0h2m2 0h6m2 0h4m4 0h4m22 0h2m20 0h2m26 0h4m4 0h4m38 0h2M154 38h2m16 0h2m30 0h2m4 0h2m4 0h2m6 0h2m4 0h2m2 0h2m2 0h2m8 0h2m2 0h4m2 0h2m2 0h2m2 0h6m8 0h2m30 0h2m2 0h2m8 0h2m28 0h2m10 0h2M166 42h2m4 0h2m4 0h2m24 0h2m4 0h2m12 0h2m14 0h2m4 0h8m16 0h2m2 0h2m16 0h2m22 0h2m2 0h2m40 0h4m32 0h2m4 0h2m4 0h2M166 46h2m4 0h2m4 0h2m14 0h2m10 0h2m8 0h2m6 0h2m12 0h4m6 0h4m6 0h2m6 0h2m6 0h4m48 0h2m26 0h4m20 0h2m10 0h2m20 0h2M170 50h2m58 0h2m6 0h4m6 0h4m6 0h2m46 0h2m8 0h2m6 0h2m8 0h2m6 0h2m10 0h2m2 0h2m16 0h2m28 0h2M166 54h2m6 0h2m20 0h2m8 0h2m4 0h4m8 0h2m4 0h2m6 0h2m2 0h4m4 0h2m12 0h4m36 0h2m24 0h4m26 0h2m6 0h2m6 0h2m42 0h2M160 58h2m4 0h2m2 0h2m2 0h2m10 0h4m14 0h4m2 0h2m10 0h2m8 0h2m4 0h4m14 0h2m14 0h2m14 0h2m34 0h4m2 0h4m24 0h2m30 0h2m6 0h2m8 0h2M160 62h2m8 0h2m2 0h2m28 0h2m24 0h4m2 0h2m6 0h2m16 0h2m8 0h2m6 0h2m26 0h2m4 0h2m8 0h4m4 0h2m26 0h2m28 0h2m6 0h2m12 0h2M170 66h2m8 0h2m14 0h2m6 0h2m16 0h4m2 0h2m4 0h2m2 0h4m8 0h2m10 0h2m32 0h2m6 0h2m16 0h6m32 0h2m4 0h2m8 0h2m30 0h2M164 70h2m8 0h2m26 0h4m4 0h2m12 0h2m6 0h2m2 0h6m6 0h2m18 0h2m2 0h2m2 0h4m12 0h2m4 0h2m16 0h2m4 0h2m2 0h2m32 0h2m4 0h2m4 0h6m30 0h2M166 74h2m14 0h2m2 0h2m12 0h4m18 0h4m6 0h2m4 0h2m16 0h4m2 0h2m2 0h2m4 0h2m22 0h6m6 0h2m6 0h2m4 0h2m6 0h2m44 0h2m30 0h2m2 0h2M158 78h4m2 0h2m8 0h4m8 0h2m6 0h2m16 0h2m6 0h2m12 0h6m16 0h6m4 0h4m10 0h2m14 0h2m32 0h2m14 0h4m4 0h2m20 0h2m20 0h2m8 0h2m2 0h2M166 82h2m2 0h2m4 0h4m2 0h2m4 0h2m12 0h2m8 0h4m2 0h2m2 0h2m14 0h2m14 0h6m20 0h2m14 0h2m12 0h2m2 0h2m32 0h2m16 0h2m4 0h2m2 0h2m20 0h2M168 86h2m24 0h2m6 0h2m4 0h2m4 0h2m16 0h2m2 0h2m10 0h2m10 0h2m4 0h2m8 0h4m12 0h2m2 0h2m10 0h2m10 0h2m2 0h2m8 0h2m20 0h2m2 0h2m14 0h2m20 0h2m8 0h2M172 90h2m24 0h2m6 0h2m8 0h2m12 0h4m20 0h4m20 0h2m12 0h2m2 0h2m10 0h2m10 0h4m10 0h2m10 0h2m8 0h2m20 0h2m10 0h2m22 0h2m2 0h2M160 94h4m4 0h2m2 0h2m42 0h2m6 0h2m10 0h2m6 0h2m10 0h2m2 0h2m2 0h2m2 0h2m8 0h2m8 0h2m18 0h4m2 0h2m30 0h2m8 0h4m4 0h2m12 0h2m38 0h2M158 98h4m6 0h2m12 0h2m18 0h2m2 0h2m18 0h2m6 0h4m18 0h2m2 0h6m2 0h2m6 0h4m8 0h2m12 0h2m8 0h4m2 0h2m6 0h2m2 0h2m2 0h2m16 0h2m4 0h2m40 0h2M160 102h2m4 0h2m28 0h2m6 0h2m24 0h2m2 0h2m8 0h2m14 0h2m2 0h2m2 0h2m4 0h6m22 0h2m10 0h2m2 0h2m2 0h2m6 0h2m28 0h2m2 0h2m12 0h2m2 0h2m6 0h4m6 0h2M168 106h2m2 0h2m6 0h2m16 0h2m10 0h2m4 0h2m8 0h4m4 0h2m8 0h2m10 0h2m2 0h2m6 0h2m6 0h2m24 0h2m18 0h2m2 0h2m2 0h2m40 0h2m8 0h2m6 0h4M166 110h2m12 0h2m44 0h2m2 0h2m2 0h4m8 0h2m6 0h4m2 0h4m4 0h4m4 0h2m2 0h2m8 0h2m8 0h2m8 0h2m8 0h2m2 0h2m4 0h2m40 0h2m6 0h4m8 0h2M166 114h2m16 0h2m10 0h4m2 0h2m4 0h2m8 0h2m24 0h2m8 0h2m4 0h2m6 0h4m4 0h2m6 0h2m14 0h2m8 0h2m12 0h2m4 0h2m20 0h2m18 0h2m6 0h2M162 118h6m28 0h2m2 0h2m2 0h2m2 0h2m6 0h2m12 0h2m12 0h4m8 0h2m10 0h2m6 0h2m2 0h2m8 0h2m4 0h2m2 0h4m6 0h6m8 0h2m4 0h4m26 0h2M164 122h4m2 0h2m14 0h2m8 0h6m2 0h2m2 0h2m2 0h2m18 0h6m4 0h2m18 0h2m8 0h2m18 0h2m6 0h4m8 0h4m4 0h2m2 0h2m4 0h4m74 0h2m2 0h2m6 0h2M158 126h2m2 0h2m2 0h2m16 0h2m12 0h6m4 0h4m4 0h4m6 0h6m2 0h2m6 0h2m12 0h2m2 0h4m6 0h2m30 0h2m6 0h6m12 0h2m62 0h2m12 0h2m4 0h2M166 130h2m12 0h2m18 0h2m16 0h2m6 0h2m2 0h2m2 0h2m6 0h2m6 0h2m4 0h2m2 0h4m12 0h2m18 0h2m4 0h2m8 0h4m2 0h2m4 0h2m4 0h2m20 0h2m14 0h2m2 0h2m18 0h2m18 0h2M166 134h2m26 0h2m4 0h2m10 0h2m4 0h2m4 0h2m4 0h2m4 0h2m8 0h2m2 0h2m4 0h2m10 0h4m12 0h2m2 0h2m2 0h2m6 0h2m8 0h2m2 0h2m8 0h2m4 0h2m2 0h2m36 0h2m46 0h2M158 138h2m6 0h2m2 0h2m12 0h2m20 0h2m16 0h2m10 0h2m2 0h2m6 0h2m8 0h2m10 0h2m12 0h2m6 0h2m2 0h2m2 0h2m4 0h2m6 0h2m14 0h2m2 0h2m12 0h2m24 0h2m16 0h2M158 142h2m6 0h2m2 0h2m2 0h2m10 0h2m30 0h2m20 0h2m2 0h2m2 0h8m4 0h4m6 0h2m22 0h2m20 0h4m8 0h4m38 0h2m2 0h2m28 0h2m6 0h2m6 0h2M174 146h2m2 0h2m8 0h2m4 0h2m14 0h2m14 0h2m2 0h2m4 0h2m2 0h6m2 0h2m4 0h2m4 0h2m8 0h2m2 0h4m14 0h10m4 0h4m6 0h2m2 0h2m2 0h2m22 0h2m20 0h2m24 0h2m6 0h2m2 0h2M168 150h4m2 0h4m48 0h2m2 0h2m4 0h2m6 0h6m4 0h2m4 0h4m6 0h2m4 0h2m8 0h2m2 0h2m28 0h2m48 0h2m20 0h2m2 0h2m2 0h2M172 154h2m2 0h2m14 0h2m2 0h2m20 0h2m12 0h2m2 0h2m4 0h4m2 0h4m10 0h2m10 0h2m18 0h2m24 0h2m74 0h2m4 0h2m14 0h2M164 158h2m6 0h2m2 0h2m14 0h2m6 0h2m4 0h4m12 0h2m4 0h2m6 0h2m4 0h4m14 0h2m8 0h2m22 0h2m8 0h2m4 0h2m8 0h6m8 0h2m64 0h2m26 0h2M36 186h2m26 0h2m2 0h2m32 0h2m68 0h4m2 0h2m10 0h4m4 0h4m28 0h2m4 0h4m20 0h2m16 0h4m2 0h2m8 0h4m18 0h2m10 0h2m30 0h2m2 0h2m30 0h2m16 0h2m42 0h2m12 0h2m20 0h2M8 190h2m8 0h2m4 0h2m8 0h2m2 0h2m18 0h2m24 0h4m2 0h4m4 0h2m24 0h2m6 0h2m4 0h2m2 0h2m6 0h8m26 0h2m10 0h2m30 0h2m28 0h2m36 0h2m48 0h2m2 0h4m14 0h2m34 0h2m4 0h2m4 0h6m44 0h2M24 194h4m32 0h2m16 0h2m12 0h2m24 0h2m42 0h2m26 0h2m2 0h4m16 0h2m6 0h2m4 0h2m18 0h2m56 0h2m12 0h2m4 0h2m18 0h2m2 0h8m32 0h2m46 0h4m22 0h2m2 0h4m18 0h2m4 0h2m2 0h2M16 198h2m8 0h2m6 0h2m10 0h2m14 0h2m14 0h2m10 0h4m4 0h2m6 0h2m8 0h2m16 0h2m36 0h2m10 0h4m8 0h2m12 0h4m8 0h2m30 0h2m2 0h2m58 0h2m6 0h2m26 0h2m2 0h2m6 0h2m2 0h2m26 0h2m40 0h2m32 0h2m14 0h2m2 0h4M24 202h2m20 0h2m2 0h4m28 0h2m6 0h2m18 0h2m22 0h2m2 0h2m18 0h2m14 0h2m4 0h4m20 0h2m2 0h2m12 0h2m42 0h2m12 0h2m12 0h2m8 0h2m28 0h2m4 0h2m6 0h2m16 0h2m8 0h4m36 0h2m50 0h2m22 0h2m2 0h2m4 0h2M22 206h4m12 0h2m4 0h2m6 0h2m16 0h2m10 0h2m6 0h2m16 0h2m22 0h2m4 0h2m40 0h2m2 0h2m12 0h2m8 0h2m44 0h2m12 0h2m2 0h2m46 0h2m18 0h2m4 0h4m2 0h2m20 0h4m12 0h2m2 0h2m4 0h2m28 0h2m14 0h2m18 0h2m24 0h2M8 210h2m2 0h2m6 0h2m2 0h2m6 0h4m4 0h2m16 0h2m18 0h4m16 0h2m12 0h2m12 0h2m10 0h2m40 0h2m16 0h2m8 0h2m62 0h4m12 0h2m14 0h2m12 0h2m18 0h2m14 0h6m6 0h2m2 0h2m46 0h2m8 0h2m14 0h2m14 0h2m32 0h2M2 214h2m4 0h2m8 0h4m18 0h2m8 0h2m6 0h2m10 0h2m6 0h4m28 0h4m12 0h2m74 0h2m6 0h2m62 0h2m28 0h2m12 0h2m8 0h2m22 0h4m2 0h2m6 0h2m6 0h2m22 0h2m14 0h6m8 0h2m14 0h2m44 0h2m4 0h2m2 0h2M2 218h2m4 0h2m6 0h2m4 0h4m60 0h2m84 0h4m2 0h4m4 0h4m2 0h2m14 0h2m4 0h2m10 0h2m20 0h2m10 0h2m18 0h2m20 0h4m28 0h2m4 0h2m4 0h2m2 0h4m2 0h2m12 0h2m14 0h2m10 0h4m44 0h2m2 0h2m14 0h2m10 0h2M2 222h2m4 0h2m12 0h2m60 0h4m2 0h2m4 0h2m6 0h2m2 0h2m54 0h2m6 0h2m6 0h2m30 0h2m12 0h2m20 0h2m44 0h2m6 0h2m28 0h4m4 0h2m12 0h4m22 0h2m4 0h2m2 0h2m4 0h2m2 0h2m66 0h2m8 0h2m8 0h2M8 226h2m20 0h2m38 0h2m14 0h4m2 0h2m26 0h2m22 0h2m28 0h2m2 0h6m14 0h2m26 0h2m30 0h2m32 0h4m4 0h2m4 0h4m28 0h2m28 0h4m18 0h2m4 0h2m2 0h2m16 0h2m20 0h2m4 0h2m2 0h2m14 0h4m4 0h2m2 0h2M28 230h4m2 0h2m48 0h2m6 0h2m2 0h2m12 0h2m12 0h2m34 0h2m2 0h2m12 0h2m2 0h2m26 0h2m30 0h2m16 0h2m40 0h2m4 0h2m40 0h2m18 0h2m2 0h8m8 0h2m2 0h2m4 0h2m38 0h4m20 0h2m2 0h2m8 0h2M8 234h2m12 0h4m4 0h6m6 0h2m6 0h2m22 0h2m2 0h2m12 0h2m14 0h2m46 0h2m6 0h2m8 0h2m2 0h4m4 0h2m2 0h2m50 0h2m14 0h2m14 0h2m24 0h2m14 0h4m18 0h6m8 0h2m2 0h2m20 0h2m10 0h2m2 0h2m12 0h2m10 0h2m12 0h2m22 0h2m8 0h2m18 0h2m16 0h1M2 238h2m4 0h2m12 0h2m2 0h2m4 0h4m14 0h2m2 0h2m36 0h2m6 0h2m8 0h4m20 0h2m18 0h2m4 0h2m12 0h2m2 0h2m18 0h2m2 0h2m4 0h2m4 0h2m42 0h2m14 0h2m66 0h2m34 0h4m2 0h4m2 0h2m2 0h4m14 0h4m90 0h1M18 242h2m10 0h4m10 0h2m8 0h2m16 0h2m20 0h2m14 0h4m12 0h4m14 0h2m182 0h4m8 0h2m28 0h4m18 0h2m32 0h2m10 0h2m24 0h2m4 0h2m6 0h2M30 246h2m6 0h2m4 0h2m44 0h2m34 0h4m6 0h2m6 0h6m10 0h2m24 0h2m18 0h2m100 0h2m4 0h2m14 0h2m18 0h4m4 0h2m10 0h2m6 0h2m10 0h2m46 0h4m20 0h4m4 0h2M2 250h4m6 0h2m2 0h2m30 0h2m42 0h2m8 0h2m6 0h2m8 0h2m8 0h2m16 0h2m10 0h2m6 0h2m4 0h2m2 0h2m2 0h2m8 0h2m2 0h2m2 0h2m72 0h2m6 0h2m10 0h2m18 0h2m8 0h2m30 0h4m8 0h6m4 0h2m10 0h2m8 0h2m36 0h4m26 0h2m2 0h2m20 0h4M0 254h2m14 0h2m8 0h2m20 0h2m24 0h2m16 0h2m6 0h4m16 0h2m6 0h4m12 0h2m36 0h2m12 0h2m12 0h2m4 0h2m64 0h2m28 0h4m12 0h2m24 0h4m4 0h2m4 0h4m8 0h2m4 0h2m28 0h2m36 0h2m12 0h2m24 0h2M0 258h4m10 0h2m12 0h4m16 0h2m20 0h2m18 0h4m6 0h4m4 0h2m2 0h2m30 0h2m2 0h2m18 0h2m2 0h2m8 0h2m2 0h2m22 0h2m20 0h2m6 0h2m18 0h4m2 0h2m14 0h2m6 0h4m8 0h2m2 0h2m6 0h2m2 0h2m8 0h2m20 0h8m6 0h2m4 0h2m8 0h2m32 0h2m22 0h4m12 0h2m16 0h2m14 0h2m4 0h2M0 262h2m14 0h2m8 0h6m4 0h2m10 0h2m14 0h2m2 0h4m24 0h2m2 0h2m2 0h2m14 0h2m8 0h2m4 0h2m6 0h2m26 0h2m12 0h2m12 0h2m2 0h2m4 0h2m20 0h2m26 0h4m50 0h2m8 0h2m14 0h2m6 0h4m2 0h4m6 0h2m16 0h2m30 0h2m22 0h4m8 0h2m10 0h6m24 0h4M134 266h2m16 0h2m4 0h4m18 0h2m10 0h2m10 0h4m6 0h2m2 0h2m54 0h2m6 0h2m30 0h2m18 0h2m16 0h2m4 0h4m4 0h2m4 0h2m4 0h4m4 0h4m8 0h2m6 0h2m16 0h2M152 270h2m4 0h4m2 0h2m2 0h2m252 0h2M142 274h2m10 0h2m8 0h2m248 0h4M146 278h2m6 0h4m6 0h2m250 0h2M156 282h2m26 0h2m8 0h2m14 0h2m2 0h2m2 0h2m42 0h2m12 0h2m12 0h2m20 0h2m8 0h2m2 0h2m6 0h4m2 0h2m2 0h2m2 0h2m6 0h4m6 0h2m2 0h2m12 0h2m30 0h2M150 286h2m4 0h2m12 0h2m2 0h2m4 0h2m8 0h2m2 0h2m4 0h2m4 0h2m2 0h2m28 0h2m12 0h4m12 0h2m4 0h2m36 0h2m6 0h2m2 0h2m22 0h6m14 0h4m20 0h2m4 0h2m4 0h2m4 0h2M150 290h2m4 0h2m4 0h2m4 0h2m8 0h6m30 0h2m2 0h2m4 0h2m30 0h4m8 0h6m6 0h2m30 0h2m8 0h2m2 0h2m10 0h4m10 0h2m12 0h6m16 0h2m4 0h2m10 0h4M156 294h2m10 0h4m6 0h4m2 0h2m8 0h2m2 0h2m4 0h4m8 0h2m2 0h2m6 0h2m10 0h2m2 0h2m10 0h2m4 0h2m8 0h4m4 0h2m22 0h2m26 0h4m6 0h2m2 0h4m2 0h2m4 0h2m10 0h2m2 0h2m6 0h4m8 0h4m8 0h4M156 298h2m6 0h2m2 0h2m20 0h2m6 0h4m18 0h6m20 0h2m6 0h2m12 0h2m2 0h4m2 0h2m46 0h2m6 0h2m2 0h2m6 0h4m2 0h4m14 0h2m4 0h2m6 0h2m6 0h6m12 0h4M160 302h2m38 0h4m2 0h2m2 0h4m2 0h6m12 0h2m6 0h2m2 0h2m8 0h2m6 0h2m4 0h4m18 0h2m16 0h2m26 0h2m2 0h2m8 0h4m14 0h2m4 0h2m2 0h2m12 0h2m14 0h2M180 306h2m8 0h2m12 0h4m4 0h2m2 0h2m2 0h2m14 0h2m8 0h2m2 0h2m12 0h2m6 0h2m2 0h2m24 0h2m16 0h4m6 0h2m62 0h2M160 310h2m2 0h2m10 0h4m10 0h2m12 0h2m2 0h2m6 0h2m2 0h6m4 0h2m2 0h6m2 0h2m6 0h4m6 0h2m4 0h2m2 0h2m4 0h4m20 0h4m60 0h2m36 0h2m4 0h2M158 314h4m4 0h2m2 0h2m26 0h2m8 0h2m6 0h2m2 0h2m8 0h4m2 0h2m4 0h2m2 0h2m8 0h2m6 0h6m4 0h6m8 0h2m16 0h2m8 0h2m8 0h2m14 0h2m6 0h4m10 0h2m40 0h4M164 318h4m44 0h2m2 0h2m2 0h2m8 0h2m2 0h2m4 0h2m4 0h2m2 0h4m14 0h2m4 0h2m12 0h6m10 0h4m8 0h2m6 0h4m22 0h2m18 0h2m12 0h2m22 0h2M158 322h8m8 0h2m36 0h4m6 0h2m16 0h6m2 0h4m40 0h2m6 0h2m6 0h2m6 0h2m8 0h2m22 0h2m16 0h2m38 0h2M156 326h6m8 0h2m2 0h4m2 0h2m4 0h2m10 0h2m12 0h2m8 0h4m10 0h4m6 0h2m2 0h2m8 0h2m12 0h2m10 0h8m2 0h2m8 0h2m2 0h8m2 0h2m8 0h2m18 0h4m50 0h2M160 330h4m4 0h4m14 0h2m18 0h2m14 0h4m4 0h4m4 0h2m6 0h2m12 0h2m10 0h2m16 0h2m4 0h2m8 0h2m6 0h2m6 0h2m2 0h4m22 0h2m6 0h2m42 0h4M168 334h2m10 0h2m4 0h2m36 0h2m12 0h2m10 0h2m8 0h2m16 0h4m8 0h2m4 0h2m10 0h8m6 0h2m2 0h2m22 0h2m8 0h2m6 0h2m28 0h4m2 0h4m6 0h2M156 338h2m52 0h2m30 0h2m4 0h4m4 0h2m14 0h2m4 0h6m20 0h2m2 0h2m6 0h2m4 0h2m28 0h2m14 0h2m4 0h2m28 0h2M160 342h2m8 0h2m8 0h2m4 0h2m14 0h2m32 0h4m6 0h6m4 0h2m8 0h2m36 0h2m8 0h2m6 0h4m8 0h2m6 0h2m24 0h2m16 0h2m16 0h2M176 346h2m8 0h2m14 0h2m4 0h2m14 0h4m8 0h2m6 0h2m30 0h2m2 0h2m22 0h2m20 0h4m12 0h2m8 0h2m36 0h2m12 0h2M162 350h4m4 0h2m18 0h2m6 0h4m16 0h2m2 0h2m2 0h2m10 0h2m36 0h2m2 0h2m24 0h6m10 0h2m2 0h2m8 0h2m18 0h2m10 0h2m4 0h4m8 0h2m2 0h2M160 354h4m4 0h4m4 0h2m12 0h2m6 0h2m18 0h2m4 0h2m6 0h2m16 0h4m10 0h2m14 0h2m4 0h2m8 0h2m8 0h2m2 0h2m10 0h2m10 0h4m4 0h2m8 0h2m10 0h2m20 0h2m2 0h2M156 358h2m4 0h4m8 0h6m18 0h2m10 0h2m6 0h2m4 0h2m4 0h2m4 0h4m6 0h2m18 0h2m8 0h2m18 0h2m18 0h2m4 0h2m2 0h2m10 0h2m12 0h2m2 0h2m4 0h2m22 0h2M156 362h2m4 0h4m8 0h4m22 0h2m4 0h2m2 0h6m8 0h2m6 0h2m4 0h2m12 0h2m8 0h2m2 0h4m26 0h2m12 0h2m14 0h2m28 0h2m6 0h4m2 0h2m2 0h2m14 0h2M162 366h2m10 0h4m4 0h2m14 0h4m8 0h4m18 0h2m2 0h4m2 0h2m4 0h4m24 0h2m2 0h2m4 0h2m8 0h2m6 0h2m20 0h2m24 0h2m10 0h2m8 0h2M160 370h2m4 0h2m10 0h2m8 0h2m18 0h2m6 0h2m10 0h2m6 0h2m4 0h2m6 0h2m12 0h4m6 0h2m4 0h2m4 0h2m2 0h2m12 0h2m4 0h2m4 0h2m20 0h2m50 0h2m12 0h2M162 374h2m12 0h2m10 0h2m8 0h2m8 0h2m18 0h6m16 0h2m12 0h2m8 0h2m20 0h2m6 0h2m2 0h4m8 0h2m40 0h2m4 0h4M162 378h2m8 0h6m8 0h2m12 0h2m12 0h4m4 0h2m12 0h2m28 0h2m2 0h2m8 0h2m2 0h4m16 0h2m10 0h2m34 0h2m8 0h2m4 0h2m20 0h2M156 382h2m4 0h2m10 0h2m2 0h2m8 0h4m6 0h2m12 0h2m8 0h2m2 0h6m10 0h6m4 0h2m16 0h2m8 0h2m2 0h2m18 0h2m2 0h2m12 0h2m6 0h2m14 0h2m10 0h2m2 0h4m2 0h2m8 0h2m10 0h2m14 0h4M156 386h2m4 0h2m12 0h2m10 0h4m30 0h2m2 0h6m10 0h4m8 0h2m10 0h2m12 0h2m22 0h2m2 0h2m50 0h6m2 0h2m8 0h2m14 0h2M156 390h2m32 0h2m16 0h2m16 0h2m8 0h2m16 0h4m24 0h6m8 0h2m4 0h2m22 0h2m8 0h2m4 0h2m14 0h6m4 0h2m4 0h2m2 0h2m14 0h2m2 0h2m6 0h2M152 394h2m6 0h4m8 0h2m14 0h2m14 0h2m14 0h2m2 0h4m14 0h2m10 0h2m4 0h2m20 0h2m2 0h2m6 0h4m2 0h2m10 0h6m18 0h2m24 0h2m4 0h2m4 0h2m22 0h2M156 398h2m2 0h4m18 0h2m6 0h2m4 0h2m26 0h2m18 0h2m4 0h2m16 0h2m10 0h4m6 0h2m2 0h2m10 0h4m6 0h2m6 0h2m10 0h2m4 0h2m10 0h2m6 0h2m6 0h2m2 0h2m6 0h2m14 0h4M160 402h4m12 0h2m4 0h2m6 0h2m2 0h2m6 0h4m22 0h4m12 0h4m2 0h2m4 0h2m10 0h2m4 0h4m2 0h4m2 0h2m6 0h2m4 0h6m2 0h2m2 0h2m2 0h2m6 0h2m10 0h2m24 0h2m18 0h2M162 406h2m12 0h2m4 0h4m4 0h2m2 0h6m24 0h2m16 0h2m2 0h2m4 0h2m16 0h2m4 0h2m10 0h2m10 0h4m4 0h2m4 0h2m30 0h2m14 0h2m6 0h2M164 410h2m16 0h6m2 0h2m2 0h2m2 0h2m2 0h4m4 0h2m2 0h2m14 0h2m2 0h2m6 0h2m2 0h2m2 0h2m16 0h2m2 0h2m6 0h2m8 0h2m8 0h2m2 0h6m6 0h2m6 0h2m20 0h2m10 0h8m34 0h2M164 414h2m14 0h2m2 0h2m4 0h2m4 0h2m2 0h2m16 0h2m2 0h2m10 0h4m4 0h2m12 0h4m8 0h2m10 0h2m8 0h2m4 0h2m6 0h2m2 0h2m4 0h2m6 0h4m10 0h2m6 0h4m4 0h2m4 0h2m4 0h2m44 0h2M158 418h2m2 0h2m14 0h4m2 0h4m8 0h2m2 0h2m8 0h4m44 0h2m4 0h2m2 0h2m12 0h4m10 0h4m4 0h4m8 0h2m20 0h2m4 0h2m6 0h2m6 0h2m2 0h2m6 0h2M158 422h2m20 0h2m4 0h2m6 0h2m4 0h4m6 0h2m12 0h2m8 0h4m12 0h2m4 0h6m2 0h2m20 0h2m2 0h4m2 0h4m2 0h4m12 0h2m4 0h2m18 0h6m2 0h4m16 0h2m34 0h2M158 426h2m6 0h2m18 0h2m8 0h6m2 0h2m14 0h2m22 0h2m10 0h2m2 0h2m2 0h2m14 0h2m8 0h6m2 0h2m4 0h4m2 0h4m10 0h2m22 0h2m4 0h6m8 0h2m2 0h2m18 0h2M166 430h2m12 0h2m16 0h2m10 0h2m4 0h2m2 0h2m2 0h2m38 0h2m4 0h2m6 0h4m38 0h2m20 0h2m8 0h2m4 0h4m10 0h2m18 0h2m14 0h2M166 434h2m26 0h2m4 0h6m4 0h2m12 0h4m34 0h4m4 0h2m2 0h2m4 0h6m4 0h6m8 0h6m32 0h2m4 0h2m2 0h4m4 0h2m10 0h2m34 0h2M180 438h2m8 0h2m8 0h2m2 0h2m30 0h2m12 0h2m4 0h2m18 0h2m2 0h6m18 0h4m6 0h2m4 0h4m20 0h6m2 0h4m4 0h2m8 0h4m34 0h2M178 442h4m4 0h2m14 0h4m4 0h2m16 0h2m2 0h2m2 0h2m6 0h2m12 0h4m2 0h2m8 0h4m6 0h2m2 0h2m4 0h2m6 0h6m24 0h2m14 0h2m2 0h6m2 0h2m6 0h2m10 0h2" stroke="#0158de" stroke-width="4"/><path d="M162 2h2m8 0h2m2 0h2m12 0h2m2 0h4m2 0h2m26 0h4m2 0h2m18 0h2m8 0h2m8 0h2m52 0h2m4 0h2m6 0h4m8 0h4m4 0h2m14 0h4m22 0h2m2 0h4M164 6h4m2 0h2m2 0h6m4 0h2m4 0h2m18 0h2m14 0h2m18 0h2m8 0h2m6 0h2m2 0h2m8 0h2m54 0h2m8 0h2m10 0h2m4 0h6m6 0h2m8 0h2m22 0h6m4 0h2M164 10h2m6 0h2m4 0h2m2 0h2m6 0h2m20 0h4m2 0h2m2 0h2m2 0h2m22 0h2m2 0h4m10 0h2m60 0h2m2 0h2m4 0h6m4 0h2m4 0h2m2 0h4m4 0h2m2 0h2m2 0h2m24 0h4m6 0h6M158 14h2m10 0h6m6 0h2m12 0h4m2 0h2m6 0h6m4 0h2m4 0h2m4 0h2m6 0h2m22 0h2m2 0h2m62 0h2m6 0h2m4 0h2m4 0h2m10 0h4m8 0h2m28 0h6M154 18h2m2 0h2m2 0h2m10 0h2m6 0h4m12 0h2m14 0h2m4 0h2m4 0h2m12 0h2m2 0h4m54 0h2m28 0h4m8 0h6m2 0h2m20 0h4m24 0h2m4 0h6M160 22h2m4 0h2m2 0h4m4 0h2m2 0h2m2 0h2m4 0h2m24 0h4m6 0h2m2 0h2m6 0h2m4 0h2m2 0h4m10 0h2m42 0h2m14 0h2m4 0h2m8 0h2m2 0h4m14 0h2m2 0h2m34 0h4m6 0h2M170 26h4m4 0h2m14 0h8m4 0h2m4 0h2m10 0h2m8 0h2m8 0h6m8 0h2m6 0h2m2 0h2m32 0h2m24 0h2m10 0h2m10 0h2m6 0h4m2 0h2m36 0h2m2 0h2M166 30h2m4 0h2m4 0h2m34 0h2m18 0h2m12 0h2m8 0h2m2 0h4m8 0h6m20 0h2m18 0h2m46 0h2m6 0h2m26 0h2M166 34h2m26 0h2m10 0h2m2 0h6m8 0h4m6 0h2m8 0h4m20 0h2m6 0h2m12 0h4m4 0h2m6 0h2m4 0h2m2 0h2m2 0h2m46 0h2m6 0h2m32 0h2M178 38h2m12 0h4m4 0h2m4 0h2m4 0h4m10 0h2m14 0h2m2 0h2m16 0h2m8 0h4m14 0h4m2 0h2m4 0h2m14 0h4m30 0h2m8 0h2m4 0h2m4 0h2m32 0h2M194 42h2m4 0h2m4 0h2m4 0h4m2 0h2m6 0h2m6 0h2m22 0h12m10 0h2m6 0h2m14 0h2m4 0h4m4 0h2m2 0h2m18 0h2m10 0h2m14 0h2m4 0h2m12 0h2M200 46h2m12 0h2m2 0h2m22 0h6m6 0h2m4 0h4m4 0h4m8 0h2m10 0h4m2 0h2m4 0h2m6 0h4m4 0h4m18 0h2m4 0h2m20 0h2m4 0h2m20 0h2M166 50h2m28 0h4m4 0h2m6 0h4m2 0h2m24 0h4m12 0h4m4 0h4m2 0h2m4 0h2m4 0h2m4 0h4m4 0h2m2 0h2m6 0h4m6 0h2m46 0h2m40 0h2M190 54h2m6 0h2m68 0h2m4 0h2m4 0h2m10 0h4m2 0h2m6 0h2m4 0h6m4 0h4m86 0h2M172 58h2m22 0h2m14 0h2m22 0h2m6 0h2m4 0h2m6 0h2m2 0h2m2 0h2m6 0h2m4 0h2m10 0h4m4 0h2m2 0h4m2 0h8m28 0h2m12 0h2M172 62h2m26 0h4m8 0h2m8 0h2m14 0h6m4 0h2m6 0h6m12 0h2m12 0h2m2 0h2m2 0h4m4 0h2m6 0h2m2 0h2m4 0h2m6 0h2m26 0h2m16 0h2m30 0h2M160 66h2m38 0h4m2 0h2m2 0h4m16 0h2m4 0h2m4 0h2m4 0h2m10 0h2m8 0h2m2 0h2m2 0h4m6 0h2m2 0h2m4 0h4m6 0h4m2 0h4m12 0h2m26 0h2M160 70h2m4 0h2m2 0h4m26 0h2m4 0h2m10 0h2m22 0h2m8 0h2m6 0h2m2 0h4m6 0h2m4 0h2m30 0h4m14 0h2M160 74h2m12 0h2m28 0h2m6 0h2m22 0h2m4 0h2m4 0h2m2 0h4m4 0h2m2 0h2m8 0h8m8 0h2m14 0h2m2 0h2m2 0h2m4 0h2m38 0h2m12 0h2M166 78h2m14 0h2m18 0h4m36 0h2m4 0h2m4 0h2m14 0h2m4 0h2m20 0h4m8 0h6m2 0h6m36 0h2M204 82h4m52 0h2m4 0h2m2 0h4m2 0h4m10 0h4m10 0h2m14 0h6m34 0h2M166 86h2m36 0h4m34 0h2m26 0h2m2 0h2m38 0h2m6 0h2m22 0h2m64 0h2M166 90h2m26 0h2m8 0h2m30 0h2m4 0h4m18 0h4m6 0h4m8 0h4m24 0h2m2 0h2m92 0h2M166 94h2m26 0h2m2 0h2m2 0h4m24 0h4m20 0h2m18 0h2m4 0h2m48 0h2m20 0h2m18 0h2m38 0h2M172 98h2m12 0h2m10 0h2m4 0h2m26 0h2m20 0h2m18 0h2m10 0h2m4 0h6m10 0h2m50 0h2m10 0h2m4 0h2M172 102h2m12 0h2m10 0h2m2 0h2m22 0h2m4 0h2m2 0h2m18 0h2m22 0h2m6 0h6m2 0h2m10 0h2m6 0h2m40 0h2M202 106h2m28 0h2m2 0h2m8 0h2m6 0h2m6 0h4m20 0h2m2 0h6m4 0h2m6 0h2m4 0h6M198 110h6m6 0h2m20 0h2m38 0h4m8 0h2m2 0h2m6 0h2m10 0h2m4 0h6m6 0h2m24 0h2m4 0h2M186 114h2m12 0h2m8 0h2m4 0h2m12 0h8m4 0h2m2 0h2m2 0h2m4 0h2m6 0h4m4 0h2m6 0h2m6 0h4m4 0h2m10 0h2m8 0h2m2 0h2m2 0h2m78 0h2M170 118h2m8 0h2m2 0h4m44 0h6m4 0h2m6 0h4m6 0h8m4 0h2m14 0h2m36 0h4m22 0h2m26 0h2m24 0h2M180 122h2m2 0h2m24 0h2m4 0h2m10 0h2m20 0h2m4 0h2m2 0h2m24 0h2m18 0h4m6 0h2m4 0h2m44 0h2m2 0h2m6 0h2m18 0h2m4 0h2m10 0h2M164 126h2m4 0h2m8 0h2m70 0h2m18 0h4m2 0h4m6 0h2m2 0h2m10 0h2m12 0h2m4 0h2m26 0h2m14 0h2m2 0h2m26 0h2M162 130h2m6 0h2m12 0h2m20 0h4m56 0h2m4 0h2m4 0h2m12 0h2m10 0h2m4 0h2m10 0h2m2 0h2m32 0h2m38 0h2m4 0h2M170 134h2m12 0h2m12 0h2m6 0h4m42 0h2m8 0h2m10 0h2m2 0h2m24 0h6m8 0h2m8 0h2m22 0h2m6 0h2m44 0h2M186 138h2m20 0h2m40 0h2m4 0h2m4 0h2m4 0h2m4 0h2m12 0h2m14 0h2m2 0h4m6 0h2m4 0h2m2 0h2m22 0h2m6 0h2m8 0h2m28 0h2M192 142h2m12 0h2m2 0h2m24 0h2m20 0h2m8 0h2m4 0h2m8 0h2m2 0h2m6 0h6m4 0h2m6 0h2m18 0h2M170 146h2m14 0h2m18 0h2m38 0h2m10 0h2m2 0h2m4 0h2m16 0h2m24 0h2m4 0h2m40 0h2m18 0h2m24 0h2m4 0h2M178 150h2m12 0h2m12 0h2m2 0h2m28 0h2m8 0h2m4 0h4m8 0h2m4 0h2m2 0h2m12 0h6m12 0h4m2 0h4m54 0h2m4 0h2m22 0h4m4 0h2M186 154h2m18 0h2m2 0h2m28 0h2m12 0h4m12 0h2m4 0h2m4 0h2m2 0h2m2 0h4m10 0h2m6 0h2m2 0h4m14 0h2m36 0h4m16 0h2m6 0h2m4 0h2m4 0h2M178 158h2m6 0h2m42 0h4m6 0h2m6 0h4m2 0h6m18 0h2m2 0h2m2 0h2m2 0h2m20 0h8m54 0h2m4 0h2m24 0h2m4 0h2m6 0h2M130 186h2m36 0h2m64 0h2m8 0h2m62 0h4m2 0h2m84 0h2m86 0h2M2 190h2m12 0h2m2 0h2m4 0h4m2 0h2m10 0h2m14 0h4m2 0h2m6 0h2m4 0h2m6 0h2m6 0h2m2 0h2m24 0h2m8 0h2m2 0h2m52 0h2m8 0h2m10 0h2m14 0h2m8 0h2m10 0h2m12 0h2m18 0h4m14 0h2m16 0h2m8 0h2m2 0h2m26 0h2m10 0h2m4 0h2m6 0h4m2 0h2m8 0h2m12 0h2m10 0h4m6 0h2m2 0h2m4 0h2m6 0h2m4 0h2m12 0h2m22 0h1M2 194h2m28 0h4m2 0h2m4 0h4m18 0h2m16 0h4m10 0h2m6 0h2m2 0h2m12 0h6m26 0h2m6 0h2m4 0h4m18 0h2m10 0h2m26 0h2m8 0h2m14 0h2m12 0h2m10 0h2m2 0h6m38 0h4m2 0h2m4 0h2m24 0h2m4 0h4m18 0h2m10 0h2m2 0h6m10 0h2m18 0h2m22 0h2m6 0h2m2 0h2m4 0h2M2 198h2m4 0h4m26 0h2m4 0h2m4 0h4m12 0h2m8 0h2m8 0h2m14 0h2m4 0h6m14 0h2m6 0h2m24 0h6m2 0h2m2 0h4m4 0h2m8 0h4m2 0h2m14 0h2m16 0h2m8 0h2m4 0h2m30 0h2m4 0h6m8 0h2m6 0h6m6 0h2m16 0h2m10 0h2m26 0h2m10 0h2m14 0h2m2 0h2m2 0h2m2 0h2m8 0h4m10 0h2m18 0h4m4 0h2m4 0h2m6 0h4m4 0h2m8 0h2M10 202h2m6 0h2m12 0h4m2 0h2m4 0h2m12 0h2m2 0h2m2 0h2m16 0h2m6 0h2m4 0h2m6 0h4m26 0h2m4 0h2m40 0h4m2 0h2m4 0h4m54 0h2m2 0h2m8 0h2m2 0h2m26 0h2m4 0h2m14 0h2m2 0h2m8 0h2m16 0h2m12 0h6m10 0h2m2 0h2m2 0h2m14 0h4m6 0h2m20 0h2m2 0h2m20 0h2m6 0h2m18 0h2M14 206h2m2 0h4m12 0h2m6 0h2m2 0h2m12 0h2m22 0h2m12 0h2m6 0h2m2 0h4m2 0h2m16 0h4m4 0h2m14 0h2m18 0h2m2 0h2m2 0h2m4 0h2m28 0h2m8 0h2m24 0h2m40 0h2m8 0h2m10 0h2m8 0h4m30 0h2m4 0h2m8 0h2m4 0h2m2 0h2m12 0h6m2 0h2m2 0h4m4 0h2m10 0h4m2 0h2m22 0h4m2 0h2m14 0h2m2 0h4m4 0h2m2 0h1M0 210h4m12 0h2m8 0h2m22 0h2m18 0h2m2 0h4m4 0h4m6 0h2m6 0h2m14 0h2m2 0h4m4 0h2m12 0h2m8 0h2m22 0h2m4 0h4m4 0h4m8 0h2m6 0h2m2 0h2m6 0h2m4 0h2m18 0h2m4 0h2m64 0h2m2 0h4m6 0h2m10 0h2m4 0h2m30 0h4m2 0h4m4 0h2m6 0h2m6 0h2m6 0h2m6 0h2m6 0h2m24 0h2m4 0h2m2 0h2m16 0h2m2 0h8M0 214h2m2 0h2m6 0h2m2 0h2m8 0h2m6 0h2m2 0h2m2 0h2m40 0h2m2 0h2m2 0h4m20 0h2m2 0h2m16 0h2m24 0h2m10 0h2m2 0h4m8 0h2m4 0h2m8 0h2m16 0h2m14 0h2m4 0h2m8 0h4m10 0h2m20 0h2m30 0h2m16 0h2m4 0h2m4 0h2m12 0h2m4 0h2m12 0h4m8 0h2m8 0h2m8 0h4m4 0h2m6 0h2m10 0h2m8 0h2m2 0h2m2 0h4m2 0h2m26 0h2M12 218h2m24 0h2m2 0h2m26 0h4m14 0h4m34 0h2m10 0h2m4 0h2m10 0h2m2 0h2m36 0h2m2 0h2m2 0h2m4 0h2m2 0h2m14 0h2m8 0h2m28 0h2m54 0h6m4 0h2m4 0h2m8 0h2m4 0h2m2 0h4m8 0h2m2 0h2m2 0h2m4 0h2m4 0h2m4 0h2m8 0h2m14 0h2m4 0h2m6 0h2m10 0h2m24 0h2m4 0h2m4 0h2M18 222h4m2 0h2m12 0h4m2 0h2m24 0h4m2 0h2m4 0h2m4 0h2m2 0h2m4 0h2m6 0h2m8 0h2m2 0h2m22 0h2m4 0h2m4 0h2m16 0h4m8 0h2m20 0h2m4 0h2m44 0h4m8 0h2m2 0h2m10 0h2m26 0h2m10 0h2m8 0h2m4 0h2m6 0h2m6 0h2m2 0h4m2 0h2m2 0h2m6 0h2m18 0h2m2 0h2m6 0h2m2 0h2m10 0h2m8 0h2m4 0h2m6 0h4m14 0h2m12 0h2M2 226h2m8 0h2m2 0h6m44 0h2m4 0h2m2 0h4m4 0h2m18 0h2m18 0h2m6 0h2m8 0h2m4 0h4m2 0h2m4 0h2m10 0h2m14 0h2m16 0h2m24 0h2m8 0h2m10 0h2m10 0h2m4 0h2m8 0h2m4 0h2m8 0h2m10 0h2m16 0h2m4 0h2m8 0h4m8 0h2m8 0h2m6 0h4m2 0h2m24 0h2m16 0h2m16 0h2m10 0h2m34 0h2M2 230h2m4 0h2m6 0h2m2 0h2m2 0h2m12 0h2m30 0h2m2 0h2m2 0h4m4 0h4m10 0h2m2 0h2m2 0h2m32 0h2m2 0h2m6 0h2m2 0h2m14 0h2m4 0h2m16 0h2m26 0h2m40 0h2m2 0h2m16 0h2m28 0h2m6 0h2m14 0h4m8 0h4m6 0h2m4 0h2m8 0h2m72 0h4m28 0h4m4 0h2M2 234h2m10 0h8m4 0h2m16 0h2m8 0h2m20 0h2m2 0h2m4 0h2m24 0h2m20 0h2m8 0h2m2 0h2m4 0h2m2 0h2m28 0h2m12 0h4m8 0h2m10 0h2m20 0h2m18 0h2m32 0h8m2 0h2m18 0h6m16 0h2m12 0h4m2 0h4m4 0h2m2 0h2m4 0h2m2 0h2m16 0h2m24 0h2m30 0h4m2 0h2M6 238h2m8 0h4m10 0h2m10 0h4m14 0h2m6 0h2m4 0h2m4 0h4m2 0h4m4 0h2m6 0h2m4 0h2m8 0h2m24 0h2m10 0h4m4 0h2m6 0h2m6 0h2m4 0h6m20 0h2m28 0h2m4 0h2m42 0h2m6 0h10m2 0h6m10 0h2m4 0h2m8 0h2m2 0h2m4 0h2m2 0h2m8 0h4m4 0h2m4 0h2m4 0h2m2 0h2m16 0h2m8 0h2m4 0h2m2 0h6m4 0h2m8 0h2m6 0h4m8 0h2m2 0h2m2 0h2M0 242h4m4 0h2m10 0h4m12 0h4m2 0h2m16 0h4m4 0h2m8 0h2m8 0h2m2 0h2m4 0h2m8 0h2m24 0h2m10 0h2m12 0h2m16 0h2m6 0h2m2 0h2m8 0h2m6 0h4m8 0h2m18 0h4m16 0h2m8 0h2m10 0h2m16 0h2m2 0h2m2 0h2m2 0h2m18 0h2m4 0h2m2 0h2m6 0h2m4 0h4m2 0h2m4 0h2m4 0h2m2 0h2m2 0h2m2 0h2m8 0h2m10 0h2m2 0h2m2 0h2m12 0h2m8 0h4m6 0h2m10 0h2m10 0h2m16 0h2m8 0h2m2 0h1M8 246h2m6 0h2m8 0h4m6 0h2m4 0h2m10 0h2m6 0h2m2 0h4m8 0h2m12 0h2m4 0h2m2 0h2m6 0h2m18 0h2m18 0h2m30 0h2m4 0h2m2 0h2m6 0h2m32 0h4m4 0h2m16 0h4m10 0h2m14 0h2m2 0h2m8 0h2m6 0h2m6 0h2m10 0h2m6 0h2m12 0h4m10 0h2m4 0h2m6 0h2m4 0h2m6 0h2m10 0h2m2 0h2m2 0h4m6 0h2m22 0h2m14 0h2m6 0h2m2 0h2m10 0h4m8 0h2m2 0h1M0 250h2m6 0h2m4 0h2m10 0h4m2 0h2m4 0h2m4 0h2m16 0h2m4 0h2m2 0h2m4 0h2m2 0h2m10 0h2m2 0h2m14 0h4m6 0h2m18 0h2m40 0h4m4 0h2m10 0h2m26 0h2m24 0h4m28 0h2m2 0h4m4 0h4m4 0h2m12 0h4m6 0h4m8 0h4m2 0h2m6 0h2m16 0h6m6 0h4m30 0h2m6 0h2m18 0h2m10 0h2m6 0h2m2 0h2m8 0h2m12 0h2M8 254h2m2 0h4m4 0h2m6 0h2m4 0h2m2 0h2m20 0h2m2 0h2m2 0h4m14 0h4m4 0h2m12 0h4m2 0h4m6 0h2m34 0h2m16 0h2m6 0h4m8 0h4m12 0h2m18 0h2m24 0h4m10 0h2m16 0h2m8 0h2m20 0h4m6 0h6m8 0h4m8 0h2m10 0h2m2 0h2m4 0h2m6 0h2m2 0h2m4 0h4m22 0h2m12 0h2m24 0h2m4 0h4m12 0h2m6 0h2M6 258h4m2 0h2m6 0h2m10 0h2m6 0h2m2 0h2m14 0h2m2 0h2m2 0h2m26 0h4m4 0h4m2 0h2m12 0h2m14 0h2m10 0h4m4 0h2m26 0h4m6 0h4m2 0h4m48 0h2m46 0h2m18 0h4m6 0h2m8 0h2m12 0h4m6 0h2m6 0h2m4 0h2m2 0h6m8 0h2m16 0h2m46 0h2m12 0h2m14 0h4M8 262h2m4 0h2m4 0h2m12 0h2m8 0h2m8 0h2m6 0h2m8 0h4m22 0h2m2 0h2m8 0h2m2 0h2m4 0h2m22 0h2m4 0h4m12 0h2m82 0h2m2 0h2m34 0h2m12 0h4m16 0h4m4 0h2m8 0h4m10 0h4m8 0h4m2 0h2m2 0h2m4 0h6m8 0h2m16 0h2m2 0h2m34 0h4m8 0h2m8 0h2m14 0h4M140 266h2m2 0h2m8 0h2m8 0h2m2 0h6m12 0h2m8 0h4m16 0h2m10 0h4m2 0h2m8 0h2m14 0h4m6 0h2m8 0h2m8 0h2m6 0h2m18 0h2m6 0h4m14 0h2m2 0h4m2 0h2m12 0h2m4 0h4m6 0h2m6 0h2m2 0h2m28 0h2M140 270h4m10 0h2m10 0h2m258 0h2M158 274h2m6 0h4m248 0h4M150 278h2m6 0h2m6 0h4M150 282h2m6 0h2m2 0h6m2 0h2m2 0h2m2 0h2m16 0h6m2 0h4m8 0h2m2 0h2m2 0h2m10 0h2m12 0h2m2 0h2m10 0h4m10 0h2m18 0h2m12 0h2m2 0h2m4 0h2m6 0h2m4 0h2m6 0h2m2 0h2m8 0h2m6 0h2m2 0h2m2 0h2m2 0h2m10 0h2m2 0h2m4 0h2m2 0h2m4 0h2M158 286h2m2 0h2m2 0h4m8 0h2m18 0h2m4 0h2m10 0h2m2 0h8m8 0h2m12 0h2m28 0h2m8 0h2m18 0h4m24 0h2m8 0h2m6 0h2m2 0h2m6 0h2m4 0h4m2 0h2m10 0h2m8 0h2m4 0h2M158 290h2m10 0h2m14 0h2m10 0h4m2 0h4m2 0h2m4 0h2m4 0h2m4 0h2m14 0h2m20 0h2m6 0h6m30 0h2m20 0h2m14 0h2m6 0h2m6 0h2m8 0h4m2 0h2m10 0h2m2 0h4m10 0h2M166 294h2m22 0h2m8 0h4m4 0h4m10 0h4m8 0h4m4 0h2m2 0h2m4 0h2m6 0h2m2 0h6m6 0h2m6 0h2m6 0h2m28 0h2m4 0h2m8 0h2M170 298h2m30 0h8m6 0h2m16 0h6m10 0h4m2 0h2m2 0h2m2 0h2m36 0h2m18 0h4m4 0h2m10 0h2m62 0h2M208 302h2m12 0h2m12 0h4m10 0h4m14 0h2m6 0h2m22 0h4m16 0h4m6 0h2M170 306h2m16 0h2m12 0h2m4 0h2m12 0h2m6 0h6m2 0h2m20 0h2m4 0h2m2 0h2m20 0h2m6 0h2m6 0h2m6 0h2m84 0h2M170 310h2m16 0h2m22 0h2m34 0h2m38 0h2m2 0h2m26 0h4m4 0h2m24 0h2M162 314h2m38 0h4m12 0h2m14 0h2m36 0h2m16 0h4m14 0h2m18 0h4m22 0h2m46 0h2M162 318h2m38 0h4m12 0h2m40 0h2m4 0h2m4 0h2m4 0h2m18 0h2m8 0h2m4 0h2m12 0h2m22 0h2M156 322h2m8 0h2m34 0h2m42 0h2m8 0h2m2 0h2m4 0h2m4 0h2m4 0h2m2 0h2m2 0h2m8 0h4m6 0h2m6 0h2m8 0h2m4 0h2m20 0h2m52 0h2M162 326h2m38 0h2m36 0h2m2 0h2m10 0h2m8 0h2m4 0h2m4 0h6m16 0h2m22 0h2m42 0h2m36 0h2M164 330h2m8 0h2m22 0h2m36 0h2m4 0h2m22 0h2m20 0h2m2 0h2m4 0h2m16 0h2m38 0h2m10 0h2M160 334h2m2 0h2m8 0h2m26 0h2m2 0h2m4 0h2m22 0h2m4 0h4m10 0h2m8 0h2m26 0h2m2 0h2m16 0h2m2 0h2m8 0h2M168 338h4m2 0h2m10 0h2m10 0h2m2 0h2m8 0h2m10 0h2m10 0h2m8 0h2m18 0h4m26 0h4m14 0h2m4 0h2m2 0h2m4 0h2M168 342h2m40 0h2m12 0h2m14 0h2m26 0h2m8 0h2m2 0h2m2 0h2m8 0h6m4 0h4m6 0h2M160 346h2m6 0h4m38 0h2m10 0h2m14 0h2m26 0h2m14 0h2m2 0h2m2 0h2m4 0h2m10 0h2m4 0h4m18 0h2M174 350h4m8 0h2m14 0h2m20 0h2m6 0h2m52 0h2m6 0h4m6 0h2m8 0h4m24 0h2M186 354h2m12 0h4m22 0h2m16 0h2m30 0h2m30 0h2m6 0h2m38 0h2m10 0h2m4 0h2M188 358h2m10 0h4m36 0h2m8 0h2m34 0h2m18 0h4m26 0h2m4 0h2m20 0h2m4 0h2m2 0h2M160 362h2m26 0h2m8 0h2m2 0h2m46 0h2m24 0h2m2 0h2m4 0h6m14 0h4m6 0h2m18 0h4m12 0h2m14 0h2M188 366h2m32 0h2m22 0h2m4 0h2m10 0h2m24 0h2m6 0h2m10 0h2m4 0h2m2 0h2m14 0h2m30 0h2m34 0h2M162 370h2m12 0h2m24 0h2m28 0h2m4 0h2m36 0h2m6 0h2m2 0h2m6 0h4m52 0h2m4 0h2m8 0h2M174 374h2m24 0h4m12 0h2m4 0h2m18 0h2m8 0h2m12 0h2m12 0h2m2 0h4m2 0h2m6 0h4m28 0h2m20 0h2m4 0h2M188 378h2m12 0h2m22 0h2m2 0h2m10 0h2m2 0h2m4 0h2m20 0h2m20 0h2m2 0h2m28 0h2m38 0h2M172 382h2m2 0h2m22 0h2m48 0h2m12 0h2m8 0h4m18 0h6m4 0h2m6 0h2m10 0h2m28 0h2M172 386h2m6 0h2m4 0h2m10 0h4m44 0h4m2 0h2m20 0h2m6 0h4m4 0h2m4 0h6m12 0h2m10 0h2m18 0h2M172 390h2m2 0h2m20 0h2m30 0h2m12 0h4m18 0h2m6 0h2m4 0h2m6 0h4m6 0h2m14 0h2m8 0h2m38 0h2M156 394h2m6 0h2m10 0h2m12 0h2m6 0h2m2 0h2m26 0h2m14 0h2m8 0h2m22 0h2m8 0h4m4 0h2m6 0h2m16 0h2m38 0h2m4 0h2m28 0h2M172 398h2m2 0h2m24 0h4m24 0h2m20 0h2m20 0h2m10 0h4m6 0h2m14 0h4M172 402h2m10 0h2m10 0h2m54 0h2m24 0h2m10 0h2m50 0h2m14 0h2m4 0h2m8 0h2M172 406h2m26 0h6m16 0h2m4 0h2m20 0h2m16 0h2m2 0h4m2 0h2m2 0h2m6 0h2m4 0h2m26 0h2m10 0h2m4 0h2m14 0h2m4 0h2m34 0h2M162 410h2m24 0h2m10 0h2m20 0h2m20 0h2m24 0h2m2 0h2m2 0h2m2 0h2m12 0h2m16 0h2m20 0h2M162 414h2m18 0h2m2 0h4m54 0h2m4 0h2m8 0h2m4 0h2m6 0h2m6 0h2m16 0h4m16 0h2m20 0h2m18 0h2M188 418h2m14 0h2m10 0h2m4 0h2m4 0h2m14 0h4m2 0h2m4 0h2m2 0h2m12 0h2m14 0h2m10 0h2m16 0h2m2 0h2m36 0h2m4 0h2M198 422h2m22 0h2m4 0h2m14 0h2m34 0h2m2 0h2m14 0h2m4 0h2m2 0h2m2 0h2m6 0h2m44 0h2M172 426h2m36 0h2m4 0h2m24 0h2m14 0h2m24 0h4m28 0h6m22 0h4m4 0h2m6 0h2m46 0h2M172 430h2m26 0h2m26 0h2m12 0h2m2 0h2m8 0h4m6 0h4m12 0h2m2 0h4m2 0h4m2 0h2m6 0h2m10 0h2m4 0h2m20 0h2m6 0h4M188 434h2m26 0h2m2 0h4m18 0h2m12 0h4m36 0h2m2 0h2m44 0h2m10 0h2m8 0h2M186 438h2m22 0h2m10 0h2m34 0h4m6 0h4m2 0h2m16 0h2m2 0h2m14 0h2m44 0h2m8 0h2m10 0h2M172 442h2m2 0h2m30 0h2m10 0h2m28 0h2m4 0h2m10 0h2m8 0h6m8 0h2m16 0h2m4 0h2m4 0h4m32 0h2m12 0h2" stroke="#10a0a0" stroke-width="4"/><path d="M160 2h2m2 0h4m6 0h2m2 0h2m18 0h2m2 0h2m6 0h2m2 0h2m10 0h2m4 0h2m12 0h2m4 0h2m2 0h4m2 0h2m14 0h2m36 0h2m2 0h2m2 0h2m4 0h2m36 0h2m14 0h2m28 0h6M160 6h4m36 0h4m4 0h2m2 0h10m6 0h2m2 0h4m6 0h2m18 0h2m34 0h2m2 0h2m12 0h2m2 0h2m8 0h2m10 0h2m10 0h2m12 0h2m28 0h2m6 0h2m8 0h2M156 10h2m2 0h4m2 0h2m6 0h2m18 0h2m6 0h2m4 0h4m4 0h2m10 0h2m2 0h4m6 0h2m20 0h2m36 0h2m4 0h2m6 0h2m34 0h2m20 0h2m22 0h2m6 0h2M162 14h2m14 0h2m14 0h2m12 0h2m6 0h4m8 0h2m4 0h2m6 0h6m2 0h4m2 0h2m44 0h2m14 0h2m4 0h2m4 0h2m2 0h2m6 0h2m28 0h2m10 0h2m10 0h4m2 0h4m8 0h2M166 18h2m2 0h4m2 0h4m36 0h4m8 0h2m4 0h2m6 0h2m6 0h2m4 0h2m6 0h4m40 0h2m14 0h2m4 0h2m8 0h2m20 0h4m6 0h2m10 0h2m10 0h4m4 0h4m6 0h2M176 22h2m16 0h8m4 0h2m6 0h2m10 0h2m14 0h2m12 0h2m4 0h2m6 0h2m4 0h4m22 0h2m38 0h2m20 0h2m10 0h2m18 0h2m8 0h2m2 0h2m2 0h2M262 26h4m6 0h2m2 0h4m20 0h2m8 0h8m8 0h2m48 0h2M200 30h2m40 0h2m36 0h2m2 0h10m4 0h2m10 0h2m2 0h4m92 0h2M178 34h2m38 0h2m54 0h2m24 0h2m8 0h2m6 0h2m2 0h2M218 38h2m64 0h2m4 0h2m8 0h2m4 0h2m2 0h2m6 0h2m100 0h2M286 42h2m6 0h2m10 0h2m112 0h2M204 46h2m6 0h2m72 0h2m12 0h2m4 0h2m2 0h2m108 0h2M254 50h2m26 0h2m4 0h2m8 0h2m18 0h4m76 0h2m20 0h2M200 54h2m16 0h2m26 0h2m12 0h4m24 0h4m4 0h2m2 0h2m16 0h2m78 0h2M200 58h2m16 0h2m22 0h2m2 0h2m12 0h2m6 0h4m18 0h2m4 0h4m22 0h2m52 0h2m34 0h2M210 62h2m6 0h2m30 0h2m2 0h2m10 0h6m22 0h2m4 0h2m4 0h2m10 0h2M172 66h2m44 0h2m24 0h2m22 0h2m12 0h2m6 0h2m2 0h2m10 0h2m4 0h2m4 0h2M212 70h2m16 0h2m14 0h2m6 0h2m26 0h2m6 0h2m8 0h2m2 0h4m2 0h2m6 0h2M172 74h2m32 0h2m36 0h2m24 0h2m14 0h2m4 0h2M206 78h2m56 0h2m6 0h2m4 0h2m2 0h2m6 0h4m10 0h4m8 0h2M172 82h2m70 0h4m4 0h2m46 0h2m16 0h2m88 0h2m2 0h2M172 86h2m70 0h4m16 0h2m6 0h2m12 0h2m2 0h2m12 0h4m10 0h2M202 90h2m42 0h2m32 0h2m8 0h2m8 0h2m2 0h2m10 0h2M242 94h2m2 0h2m18 0h2m8 0h2m12 0h2m2 0h4m2 0h2m2 0h4m8 0h4M166 98h2m76 0h4m4 0h2m26 0h2m2 0h2m4 0h2m24 0h2M206 102h2m38 0h2m4 0h2m12 0h2m16 0h4m6 0h2m4 0h2m2 0h2M252 106h2m12 0h2m6 0h2m4 0h2m2 0h2m2 0h2m6 0h2m6 0h2m46 0h2M216 110h2m24 0h2m8 0h2m10 0h4m18 0h2m16 0h2M252 114h2m32 0h2m6 0h2m18 0h4M218 118h2m66 0h2m6 0h2m12 0h2m6 0h4m52 0h2M218 122h2m32 0h2m12 0h2m26 0h2m8 0h2m12 0h2m32 0h2M236 126h2m12 0h2m14 0h2m38 0h4m6 0h2m4 0h2m2 0h2m52 0h2M236 130h2m14 0h2m20 0h2m4 0h2m12 0h2m10 0h4m6 0h2m62 0h2M266 134h2m12 0h4m116 0h2M252 138h2m12 0h2m10 0h2m2 0h2m10 0h2m2 0h2m16 0h2m62 0h2m24 0h2M256 142h2m8 0h2m40 0h4m12 0h2m34 0h2m18 0h2m24 0h2M192 146h2m56 0h2m4 0h2m8 0h2m10 0h2m8 0h2m14 0h2m4 0h2m22 0h2M186 150h2m78 0h2m12 0h4m4 0h2m8 0h2m4 0h2m28 0h2M178 154h2m78 0h2m6 0h4m14 0h2m10 0h2m12 0h2m68 0h2M280 158h2m2 0h2m6 0h2m4 0h2m72 0h2M48 186h2m2 0h2m50 0h2m60 0h2m38 0h2m16 0h2m24 0h2m4 0h2m18 0h2m44 0h2M0 190h2m2 0h2m8 0h2m14 0h2m14 0h2m24 0h2m2 0h2m4 0h2m10 0h2m6 0h2m4 0h2m2 0h2m4 0h4m24 0h2m10 0h2m4 0h2m20 0h4m12 0h2m4 0h2m2 0h4m2 0h2m2 0h2m16 0h2m22 0h4m4 0h2m12 0h2m4 0h2m4 0h2m4 0h2m24 0h2m4 0h2m4 0h4m8 0h6m2 0h2m6 0h4m8 0h2m2 0h2m24 0h2m10 0h2m4 0h2m10 0h2m8 0h2m6 0h2m8 0h2m4 0h2m6 0h2m16 0h4M4 194h6m6 0h2m2 0h2m28 0h2m6 0h2m2 0h2m6 0h4m2 0h2m2 0h2m12 0h2m16 0h2m2 0h2m2 0h4m12 0h4m6 0h2m2 0h4m12 0h2m6 0h4m2 0h2m16 0h2m2 0h2m4 0h6m12 0h2m8 0h2m2 0h2m8 0h2m10 0h6m12 0h2m18 0h2m2 0h2m2 0h6m10 0h2m10 0h2m34 0h2m10 0h2m6 0h2m2 0h2m6 0h2m16 0h2m2 0h4m4 0h4m4 0h2m2 0h2m6 0h2m6 0h2m2 0h2m4 0h2m2 0h2m6 0h2m16 0h2M0 198h2m2 0h4m12 0h2m10 0h2m8 0h2m14 0h4m8 0h6m4 0h2m2 0h2m34 0h8m4 0h2m8 0h2m6 0h2m16 0h2m8 0h2m24 0h2m2 0h2m14 0h2m18 0h2m26 0h2m18 0h2m10 0h2m18 0h2m2 0h2m4 0h4m4 0h4m14 0h2m10 0h2m20 0h4m6 0h2m2 0h2m6 0h2m18 0h4m6 0h2m2 0h2m14 0h2m4 0h2m4 0h2m2 0h2m4 0h2m8 0h4M4 202h2m2 0h2m10 0h2m4 0h2m14 0h2m12 0h2m2 0h2m6 0h4m2 0h2m12 0h2m10 0h4m8 0h2m2 0h2m22 0h2m2 0h2m6 0h2m10 0h2m2 0h2m2 0h2m2 0h4m12 0h4m28 0h6m2 0h2m2 0h2m4 0h2m20 0h2m8 0h2m10 0h4m6 0h2m12 0h2m12 0h2m4 0h4m4 0h2m2 0h2m12 0h4m20 0h4m22 0h2m6 0h2m4 0h2m4 0h2m14 0h2m4 0h4m2 0h2m6 0h4m4 0h2m14 0h2m2 0h2m6 0h4m4 0h1M2 206h2m6 0h2m14 0h2m4 0h2m2 0h2m24 0h2m2 0h4m2 0h4m12 0h2m2 0h2m2 0h2m2 0h4m14 0h2m24 0h2m6 0h2m10 0h2m6 0h2m2 0h2m12 0h2m2 0h4m4 0h4m18 0h4m8 0h2m26 0h2m8 0h2m4 0h2m4 0h4m8 0h2m26 0h2m8 0h4m2 0h2m10 0h4m2 0h2m8 0h2m8 0h2m22 0h2m6 0h2m20 0h2m14 0h2m4 0h2m6 0h2m12 0h2m6 0h4m8 0h2M4 210h2m30 0h4m12 0h2m6 0h2m4 0h2m4 0h2m12 0h2m6 0h2m10 0h2m10 0h2m10 0h6m14 0h2m2 0h2m8 0h2m12 0h2m16 0h2m40 0h2m2 0h2m14 0h4m20 0h2m6 0h2m2 0h2m4 0h2m4 0h2m2 0h2m2 0h4m12 0h2m4 0h2m30 0h2m4 0h4m18 0h2m4 0h2m4 0h4m12 0h2m8 0h2m4 0h2m6 0h12m2 0h2m4 0h2m10 0h2m2 0h8m14 0h1M30 214h2m4 0h2m14 0h2m12 0h4m2 0h2m24 0h2m2 0h2m18 0h4m2 0h2m2 0h2m2 0h2m12 0h8m20 0h2m4 0h2m4 0h2m8 0h2m12 0h2m6 0h2m4 0h4m6 0h2m14 0h2m26 0h2m6 0h2m18 0h2m4 0h2m2 0h6m8 0h2m2 0h2m8 0h2m18 0h2m8 0h4m2 0h2m14 0h2m4 0h2m26 0h2m18 0h2m2 0h2m2 0h2m16 0h2m10 0h4m2 0h2M18 218h4m18 0h2m10 0h2m4 0h2m16 0h2m4 0h2m18 0h6m8 0h2m2 0h2m2 0h2m4 0h4m14 0h4m2 0h2m12 0h4m4 0h2m4 0h2m12 0h2m2 0h2m16 0h4m34 0h2m10 0h2m6 0h2m4 0h2m6 0h4m4 0h2m10 0h2m8 0h2m4 0h2m14 0h2m30 0h2m6 0h2m8 0h2m12 0h4m4 0h6m2 0h6m8 0h2m2 0h2m10 0h2m2 0h10m4 0h4m10 0h2m10 0h2M0 222h2m8 0h4m28 0h2m14 0h2m2 0h2m2 0h2m34 0h2m20 0h4m2 0h2m4 0h4m14 0h2m4 0h4m4 0h4m12 0h2m4 0h2m4 0h4m2 0h2m2 0h2m10 0h4m10 0h2m4 0h2m16 0h2m6 0h6m10 0h2m8 0h4m12 0h2m2 0h2m18 0h2m44 0h2m6 0h2m2 0h2m2 0h2m10 0h2m2 0h2m2 0h2m20 0h4m4 0h2m6 0h2m6 0h2m2 0h4m4 0h2m2 0h2m8 0h2m8 0h2M0 226h2m2 0h4m2 0h2m10 0h4m12 0h8m4 0h2m6 0h2m2 0h2m4 0h2m4 0h2m18 0h2m2 0h2m2 0h2m2 0h4m2 0h2m8 0h2m2 0h2m6 0h2m10 0h2m4 0h2m4 0h2m24 0h4m14 0h2m4 0h2m10 0h2m16 0h2m8 0h2m10 0h2m2 0h2m2 0h2m20 0h2m4 0h2m18 0h2m2 0h4m2 0h2m8 0h2m12 0h2m12 0h2m16 0h2m8 0h2m4 0h2m16 0h2m12 0h2m2 0h2m22 0h8m6 0h2m2 0h2m2 0h2m2 0h2m2 0h2m2 0h6m6 0h2M0 230h2m2 0h4m2 0h2m2 0h2m2 0h2m2 0h2m16 0h6m4 0h2m14 0h4m2 0h2m20 0h2m2 0h2m6 0h2m4 0h2m8 0h2m2 0h2m6 0h2m4 0h2m6 0h4m32 0h2m2 0h2m10 0h4m8 0h2m16 0h4m4 0h2m8 0h2m4 0h2m8 0h4m20 0h2m6 0h4m6 0h2m2 0h2m10 0h2m10 0h4m4 0h2m10 0h2m4 0h2m30 0h2m4 0h2m6 0h2m8 0h4m4 0h2m4 0h6m18 0h2m4 0h4m2 0h2m4 0h4m16 0h2m6 0h7M38 234h2m16 0h4m8 0h2m18 0h2m4 0h4m2 0h4m10 0h2m2 0h4m20 0h2m2 0h2m12 0h2m8 0h2m10 0h4m6 0h2m2 0h2m14 0h2m38 0h6m2 0h2m20 0h2m8 0h6m16 0h2m4 0h2m8 0h2m12 0h6m8 0h2m4 0h2m6 0h2m10 0h2m24 0h2m14 0h2m2 0h4m8 0h2m6 0h2m8 0h2m28 0h2m4 0h2m2 0h6M14 238h2m4 0h2m2 0h2m10 0h2m18 0h4m10 0h4m2 0h2m36 0h4m8 0h2m18 0h6m24 0h2m6 0h2m6 0h2m2 0h2m6 0h2m20 0h2m2 0h2m2 0h2m24 0h2m6 0h4m8 0h6m32 0h4m8 0h4m2 0h2m28 0h2m6 0h2m24 0h2m14 0h2m24 0h2m10 0h2m8 0h2m2 0h2m2 0h2m18 0h2m4 0h2m2 0h4M6 242h2m4 0h2m2 0h2m8 0h2m12 0h2m6 0h4m4 0h4m10 0h2m4 0h2m24 0h2m16 0h2m26 0h6m18 0h4m4 0h4m12 0h4m4 0h2m8 0h4m12 0h2m2 0h4m26 0h2m6 0h4m14 0h2m2 0h4m4 0h2m6 0h2m2 0h8m14 0h2m6 0h2m2 0h2m4 0h2m8 0h2m10 0h2m2 0h2m2 0h2m2 0h2m4 0h2m4 0h2m8 0h2m6 0h2m66 0h2m2 0h2m4 0h2M0 246h8m4 0h4m2 0h6m22 0h4m6 0h2m2 0h2m2 0h2m4 0h4m2 0h2m4 0h2m4 0h2m4 0h2m12 0h2m10 0h2m2 0h2m8 0h2m2 0h6m8 0h2m8 0h2m6 0h6m2 0h4m8 0h2m4 0h2m4 0h4m2 0h4m8 0h2m8 0h2m20 0h2m2 0h2m12 0h2m8 0h4m4 0h2m6 0h8m12 0h4m8 0h2m6 0h4m2 0h6m28 0h2m2 0h2m2 0h2m8 0h2m4 0h2m28 0h2m10 0h2m50 0h6M6 250h2m12 0h4m6 0h2m2 0h4m22 0h2m2 0h2m8 0h4m10 0h2m18 0h2m8 0h2m2 0h2m16 0h4m2 0h2m8 0h2m6 0h2m24 0h2m10 0h4m2 0h2m4 0h2m24 0h2m12 0h4m12 0h2m6 0h4m18 0h4m4 0h2m6 0h4m10 0h2m12 0h2m18 0h4m6 0h4m18 0h2m24 0h2m4 0h2m6 0h2m22 0h2m18 0h2m24 0h1M2 254h2m2 0h2m22 0h4m6 0h2m2 0h2m4 0h2m10 0h2m8 0h2m2 0h4m2 0h2m14 0h2m22 0h2m24 0h2m2 0h2m20 0h2m14 0h2m10 0h6m10 0h4m18 0h2m22 0h4m10 0h2m14 0h6m4 0h4m10 0h2m10 0h2m26 0h2m4 0h2m8 0h2m16 0h2m36 0h6m40 0h4m22 0h2M18 258h2m42 0h2m2 0h2m14 0h2m10 0h2m20 0h2m10 0h4m4 0h2m8 0h2m16 0h2m18 0h2m6 0h2m2 0h2m16 0h2m26 0h4m2 0h2m2 0h4m24 0h2m38 0h2m16 0h2m6 0h2m18 0h2m28 0h2m10 0h2m12 0h2m2 0h2m6 0h2m64 0h4M6 262h2m2 0h4m18 0h2m6 0h2m18 0h2m4 0h2m12 0h10m2 0h4m10 0h2m2 0h2m2 0h2m8 0h2m2 0h2m30 0h2m2 0h2m14 0h2m2 0h2m6 0h2m2 0h4m6 0h4m4 0h2m26 0h4m8 0h2m22 0h4m12 0h2m2 0h2m2 0h4m4 0h2m6 0h4m44 0h4m4 0h2m28 0h2m18 0h4m60 0h2m12 0h5M138 266h2m2 0h2m22 0h2m6 0h2m8 0h2m2 0h2m4 0h2m12 0h2m2 0h2m38 0h6m20 0h2m22 0h2m2 0h6m8 0h2m8 0h4m12 0h2m46 0h2m14 0h2m6 0h2M138 270h2m4 0h2m10 0h2m258 0h4M150 274h2m4 0h2m4 0h2m244 0h4M162 278h2m246 0h4M168 282h2m10 0h2m6 0h2m32 0h2m2 0h6m2 0h2m2 0h2m6 0h2m4 0h2m6 0h2m8 0h4m4 0h2m2 0h2m10 0h2m6 0h4m36 0h2m10 0h2m18 0h2m6 0h2m10 0h2M164 286h2m62 0h2m4 0h2m10 0h2m16 0h6m2 0h2m4 0h2m20 0h6m14 0h2m2 0h2m2 0h2m2 0h2m48 0h2m12 0h2M164 290h2m36 0h2m16 0h2m14 0h2m8 0h2m4 0h2m6 0h2m2 0h2m18 0h2m4 0h4m8 0h4m14 0h2m2 0h2m2 0h2m12 0h2m38 0h2m18 0h2M162 294h4m10 0h2m40 0h2m82 0h2m4 0h2m10 0h2m2 0h2m4 0h2m32 0h2m14 0h2m10 0h2M166 298h2m42 0h4m4 0h2m12 0h2m8 0h2m22 0h2m8 0h2m14 0h2m14 0h2m6 0h2m2 0h2m58 0h2m20 0h2M170 302h2m32 0h2m24 0h4m26 0h2m4 0h2m40 0h2m6 0h2m84 0h2m2 0h2M252 306h2m32 0h4m16 0h2M162 310h2m2 0h2m34 0h2m82 0h2m2 0h2m14 0h4m96 0h2M248 314h2m32 0h2m2 0h2m10 0h2m2 0h2m16 0h2M236 318h2m10 0h2m26 0h2m8 0h2m8 0h2m22 0h2m8 0h2M276 322h2m24 0h2m16 0h2m6 0h2M242 326h2m32 0h2m16 0h2m32 0h2M202 330h2m8 0h2m26 0h2m2 0h2m10 0h2m36 0h2m4 0h2m18 0h2m2 0h2m4 0h2M170 334h2m26 0h2m40 0h2m4 0h2m40 0h2m2 0h2m6 0h2m22 0h2M164 338h2m78 0h2m30 0h2m12 0h2m2 0h2m4 0h2m4 0h2M174 342h2m36 0h2m28 0h4m30 0h2m16 0h2m24 0h2m8 0h2m20 0h2M164 346h2m8 0h2m56 0h2m6 0h4m24 0h2m8 0h2m12 0h4m2 0h4m18 0h2m2 0h2M212 350h2m26 0h4m44 0h2m2 0h2m6 0h2m22 0h2m4 0h2M212 354h2m8 0h2m18 0h2m24 0h2m8 0h2m8 0h4m6 0h4m2 0h2m18 0h2m4 0h2M160 358h2m50 0h2m8 0h2m18 0h2m20 0h2m2 0h2m8 0h4m6 0h2m4 0h2m2 0h4m22 0h2m42 0h2M222 362h2m16 0h2m4 0h2m16 0h2m12 0h2m4 0h2m14 0h2m2 0h2m18 0h2M160 366h2m40 0h2m22 0h2m56 0h2m2 0h2m10 0h2m4 0h2m30 0h2M222 370h2m2 0h2m18 0h2m52 0h2m18 0h2m2 0h4m2 0h2M226 374h2m18 0h2m30 0h2m8 0h2m36 0h2M250 378h2m24 0h2m10 0h4m2 0h2m2 0h2m6 0h2m6 0h2m8 0h2M186 382h2m94 0h2m86 0h2M202 386h2m60 0h2m26 0h2m12 0h2m16 0h2m32 0h2M200 390h4m48 0h2m22 0h2m14 0h4m10 0h2m38 0h2m22 0h2M200 394h2m42 0h2m6 0h2m12 0h2m6 0h4M198 398h4m38 0h2m4 0h2m8 0h2m8 0h2m8 0h4m12 0h2m4 0h2m64 0h2M198 402h4m86 0h2m6 0h4M244 406h2m18 0h2m32 0h2M228 410h2m10 0h2m22 0h4m20 0h2m2 0h2m4 0h2m2 0h2M204 414h2m4 0h2m16 0h2m16 0h2m16 0h2m12 0h2m8 0h2m2 0h2m4 0h2M240 418h4m22 0h2m20 0h2m2 0h2m6 0h2m12 0h2m6 0h2m18 0h2M188 422h2m26 0h2m24 0h2m2 0h2m18 0h4m4 0h2m6 0h2m36 0h2m20 0h2M222 426h2m4 0h2m16 0h2m18 0h4m4 0h2m6 0h2m4 0h2m6 0h2m2 0h2m40 0h2M188 430h2m32 0h2m12 0h2m36 0h2m20 0h2m2 0h2m8 0h4m30 0h2M172 434h2m6 0h2m46 0h2m6 0h2m8 0h2m20 0h2m8 0h2m6 0h2m10 0h2m10 0h4m30 0h2M172 438h2m14 0h2m30 0h2m6 0h2m10 0h4m2 0h2m30 0h2m18 0h4m8 0h2m4 0h2m6 0h2m30 0h2M188 442h2m32 0h2m16 0h4m2 0h2m48 0h6" stroke="#1bc36e" stroke-width="4"/><path d="M208 2h2m2 0h2m2 0h2m22 0h2m2 0h2m2 0h4m16 0h4m16 0h2m4 0h2m2 0h6m2 0h2m44 0h2m44 0h2M156 6h2m36 0h2m2 0h2m44 0h2m2 0h4m6 0h2m48 0h2m12 0h4m26 0h2m60 0h2M198 10h4m4 0h2m12 0h2m18 0h2m2 0h2m2 0h2m12 0h2m12 0h4m18 0h2m4 0h2m12 0h2m4 0h4m56 0h2M156 14h2m2 0h2m4 0h2m8 0h2m28 0h2m54 0h2m12 0h2m8 0h2m10 0h2m8 0h2m6 0h2m8 0h2m26 0h2m6 0h2m4 0h2M156 18h2m2 0h2m32 0h4m8 0h2m44 0h2m4 0h2m8 0h2m8 0h2m6 0h2m28 0h4m22 0h2m10 0h2m12 0h2M216 22h2m16 0h2m22 0h2m6 0h4m2 0h2m16 0h2m8 0h2m2 0h2m8 0h6m2 0h2m2 0h2m40 0h2M218 26h2m22 0h2m24 0h2m10 0h2m2 0h2m2 0h2m2 0h2m4 0h2m18 0h4M206 30h2m10 0h2m6 0h2m40 0h2m24 0h2m10 0h2m10 0h2m2 0h2M200 34h2m40 0h2m40 0h6m24 0h2M288 38h2m24 0h2M242 42h2m46 0h2m22 0h2M290 46h2m26 0h2M200 50h2m88 0h2m18 0h2M254 54h2m14 0h2m14 0h2m22 0h2m8 0h2M254 58h2m30 0h2m30 0h4M246 62h2m38 0h2m2 0h2M246 66h2m6 0h2m28 0h4m32 0h2M244 70h2m24 0h2m14 0h4m4 0h2m24 0h2M282 74h4m2 0h2m4 0h2m8 0h2m6 0h2M244 78h4m4 0h2m20 0h2m12 0h2m4 0h2M242 82h2m4 0h2m14 0h2m8 0h2m6 0h2m4 0h2m4 0h2m10 0h2m8 0h2M282 86h2m4 0h2m10 0h2M282 90h2m10 0h2m10 0h2M252 94h2m30 0h4M266 98h2m32 0h2m2 0h4M242 102h2m28 0h2m78 0h2M186 106h2m54 0h2m28 0h2m24 0h2M186 110h2m106 0h2m2 0h2M274 114h2m6 0h2m20 0h2M274 118h2m6 0h2m14 0h2m4 0h4M274 122h2m22 0h2m26 0h2M282 126h2m10 0h2m2 0h2M282 130h2m14 0h2M294 134h2m2 0h2m16 0h2m62 0h2M280 138h2M278 142h4m22 0h2M280 146h6M284 150h2M280 154h2m6 0h2m8 0h2M266 158h4m6 0h2m10 0h2m6 0h2M498 186h2M54 190h4m6 0h2m4 0h2m34 0h2m8 0h2m4 0h2m4 0h2m14 0h2m2 0h2m12 0h2m6 0h2m18 0h2m6 0h2m10 0h2m8 0h2m4 0h2m2 0h2m28 0h4m16 0h6m8 0h2m4 0h2m10 0h2m4 0h2m8 0h2m34 0h2m14 0h2m20 0h2m2 0h2m6 0h2m10 0h4m2 0h2m4 0h4m14 0h2m16 0h2m2 0h4m6 0h2m2 0h2M0 194h2m12 0h2m20 0h2m4 0h2m20 0h2m8 0h2m12 0h2m6 0h2m6 0h2m2 0h2m22 0h2m8 0h2m10 0h2m2 0h2m8 0h2m30 0h2m14 0h2m12 0h2m12 0h4m4 0h2m6 0h2m8 0h2m14 0h2m8 0h2m18 0h2m10 0h4m10 0h2m16 0h2m2 0h2m28 0h2m12 0h2m2 0h2m18 0h2m26 0h2m16 0h4m12 0h2m2 0h2m4 0h2M14 198h2m20 0h2m30 0h2m12 0h2m4 0h2m4 0h4m2 0h2m2 0h2m8 0h2m14 0h2m6 0h2m4 0h4m4 0h2m2 0h4m20 0h2m20 0h2m12 0h6m4 0h6m2 0h4m2 0h2m4 0h2m2 0h4m6 0h2m4 0h2m6 0h2m6 0h4m28 0h2m6 0h2m6 0h4m14 0h2m24 0h4m4 0h6m4 0h2m28 0h2m8 0h4m8 0h2m10 0h2m48 0h1M6 202h2m6 0h2m14 0h2m4 0h2m34 0h2m12 0h2m8 0h2m6 0h2m12 0h2m8 0h2m20 0h2m8 0h2m8 0h2m28 0h4m12 0h6m16 0h2m8 0h2m10 0h2m16 0h2m18 0h2m8 0h2m4 0h2m12 0h2m14 0h2m28 0h2m26 0h4m6 0h2m18 0h2m2 0h4m12 0h2m2 0h2m2 0h2m10 0h2m4 0h2m4 0h2m2 0h2M4 206h4m40 0h2m6 0h2m6 0h2m10 0h2m8 0h2m6 0h2m8 0h2m16 0h2m2 0h4m10 0h2m8 0h2m2 0h2m4 0h2m6 0h2m36 0h2m6 0h4m2 0h2m6 0h4m6 0h2m2 0h2m2 0h4m2 0h2m6 0h2m8 0h2m6 0h2m2 0h2m12 0h2m8 0h4m4 0h2m8 0h2m2 0h4m26 0h2m8 0h2m32 0h2m28 0h2m14 0h2m2 0h4m4 0h2m14 0h2m4 0h2m20 0h2M6 210h2m2 0h2m30 0h2m4 0h2m6 0h2m4 0h2m4 0h2m32 0h2m20 0h2m10 0h2m6 0h4m8 0h2m12 0h4m38 0h2m10 0h4m2 0h2m4 0h2m2 0h2m4 0h2m18 0h2m12 0h2m10 0h2m4 0h2m22 0h2m8 0h2m8 0h4m2 0h2m10 0h2m16 0h6m4 0h2m10 0h2m10 0h2m62 0h2m4 0h2m20 0h2M6 214h2m48 0h2m2 0h2m12 0h4m4 0h2m2 0h2m12 0h2m4 0h2m10 0h2m10 0h2m2 0h2m8 0h4m24 0h2m22 0h2m14 0h2m2 0h2m2 0h2m12 0h2m34 0h2m8 0h2m10 0h2m12 0h2m4 0h4m14 0h4m2 0h2m4 0h2m20 0h2m30 0h2m6 0h2m2 0h4m14 0h2m8 0h2m2 0h2m6 0h2m2 0h2m2 0h2m14 0h2m10 0h6m14 0h3M0 218h2m4 0h2m2 0h2m14 0h2m8 0h2m6 0h2m10 0h2m8 0h4m4 0h2m16 0h4m2 0h4m26 0h2m4 0h2m10 0h2m14 0h2m2 0h2m16 0h2m44 0h2m6 0h2m4 0h2m4 0h4m8 0h6m2 0h2m12 0h2m14 0h2m4 0h2m4 0h6m4 0h2m12 0h2m10 0h2m38 0h2m14 0h2m4 0h2m18 0h2m12 0h2m28 0h2m6 0h2m16 0h2M6 222h2m8 0h2m18 0h2m10 0h2m6 0h2m2 0h2m6 0h2m4 0h2m24 0h2m26 0h2m2 0h2m12 0h4m16 0h2m14 0h2m10 0h2m4 0h2m14 0h2m4 0h2m6 0h2m12 0h2m6 0h2m16 0h2m6 0h2m2 0h4m10 0h6m6 0h2m2 0h2m12 0h2m8 0h2m4 0h2m4 0h2m18 0h2m2 0h2m36 0h2m4 0h2m4 0h8m2 0h2m18 0h2m6 0h2m18 0h2m10 0h2m2 0h2m6 0h2M14 226h2m10 0h2m8 0h2m18 0h2m2 0h2m2 0h2m16 0h2m16 0h2m14 0h2m20 0h2m22 0h2m2 0h2m8 0h2m14 0h2m2 0h2m2 0h2m10 0h4m6 0h4m2 0h4m2 0h4m18 0h2m4 0h2m6 0h2m12 0h2m26 0h2m10 0h2m4 0h4m8 0h2m8 0h2m6 0h2m10 0h2m12 0h2m14 0h2m6 0h2m10 0h2m8 0h2m10 0h2m6 0h2m16 0h2m10 0h2m2 0h2m12 0h4M26 230h2m8 0h2m18 0h4m2 0h2m38 0h2m24 0h6m4 0h2m12 0h2m8 0h2m6 0h2m4 0h2m8 0h2m2 0h2m16 0h2m4 0h2m4 0h2m2 0h2m10 0h2m18 0h2m4 0h2m6 0h2m12 0h2m26 0h2m2 0h2m8 0h2m2 0h4m18 0h2m8 0h4m22 0h2m12 0h2m4 0h4m10 0h2m20 0h4m4 0h2m16 0h2m4 0h2m2 0h2m2 0h2m8 0h2M0 234h2m34 0h2m2 0h2m6 0h2m12 0h2m2 0h2m2 0h4m8 0h2m20 0h4m8 0h2m6 0h2m6 0h2m16 0h2m14 0h4m6 0h2m28 0h2m8 0h2m2 0h4m6 0h10m24 0h2m4 0h4m6 0h2m2 0h2m24 0h2m12 0h2m40 0h2m30 0h4m4 0h2m8 0h2m26 0h2m8 0h4m4 0h2m2 0h2m2 0h2m8 0h2m12 0h2m2 0h2M0 238h2m36 0h4m4 0h4m12 0h2m40 0h4m12 0h6m6 0h2m8 0h2m8 0h2m8 0h2m2 0h2m2 0h2m10 0h2m22 0h2m12 0h4m8 0h2m6 0h2m10 0h2m2 0h2m4 0h4m6 0h2m4 0h2m14 0h2m26 0h2m22 0h2m16 0h2m6 0h2m32 0h2m20 0h2m14 0h4m14 0h2m2 0h2m12 0h2m4 0h2m2 0h2m4 0h2m2 0h2M4 242h2m8 0h2m30 0h2m16 0h4m6 0h2m4 0h4m22 0h2m14 0h4m4 0h2m6 0h6m12 0h2m6 0h2m2 0h2m22 0h2m8 0h2m2 0h2m10 0h2m32 0h2m2 0h2m4 0h2m4 0h2m8 0h4m6 0h2m8 0h2m22 0h2m22 0h2m58 0h2m12 0h2m6 0h2m4 0h2m8 0h4m10 0h4m4 0h2m12 0h2m12 0h2m2 0h2M50 246h2m6 0h2m14 0h2m8 0h2m18 0h4m8 0h2m14 0h2m30 0h4m16 0h2m12 0h2m14 0h2m2 0h2m20 0h2m12 0h2m10 0h4m40 0h2m14 0h2m32 0h2m2 0h2m40 0h2m2 0h2m8 0h4m4 0h2m4 0h2m10 0h2m6 0h2m2 0h2m20 0h2m4 0h2m12 0h2M18 250h2m4 0h2m14 0h2m8 0h2m2 0h2m10 0h2m2 0h2m8 0h2m2 0h2m10 0h2m6 0h2m30 0h4m12 0h4m6 0h2m12 0h2m2 0h2m2 0h2m12 0h2m18 0h6m6 0h4m8 0h2m8 0h2m12 0h2m4 0h2m46 0h2m30 0h2m6 0h2m40 0h2m8 0h2m10 0h2m4 0h4m8 0h2m2 0h2m4 0h2m4 0h2m10 0h2m4 0h2m4 0h2m16 0h2M22 254h2m12 0h2m16 0h2m2 0h2m20 0h2m22 0h4m10 0h2m16 0h2m2 0h4m2 0h2m6 0h4m6 0h2m10 0h2m2 0h2m2 0h2m8 0h2m12 0h2m12 0h2m8 0h2m8 0h2m8 0h2m2 0h2m12 0h2m8 0h2m2 0h2m4 0h2m8 0h2m8 0h2m8 0h2m10 0h2m10 0h2m6 0h2m12 0h2m16 0h2m10 0h2m6 0h4m4 0h2m6 0h4m18 0h2m16 0h2m8 0h2m8 0h2m16 0h4m4 0h1M22 258h2m18 0h2m6 0h2m2 0h2m16 0h4m2 0h4m2 0h4m26 0h2m6 0h2m8 0h4m6 0h2m12 0h2m4 0h2m2 0h2m12 0h2m20 0h2m4 0h2m6 0h2m4 0h2m40 0h2m2 0h2m4 0h2m2 0h2m4 0h2m8 0h2m2 0h4m6 0h4m10 0h2m6 0h4m2 0h2m36 0h2m28 0h2m6 0h2m2 0h2m2 0h2m2 0h2m6 0h2m8 0h4m2 0h2m8 0h4m8 0h2m4 0h2m4 0h6m18 0h1M22 262h4m50 0h4m54 0h2m4 0h2m16 0h2m2 0h2m2 0h2m10 0h2m8 0h2m40 0h2m16 0h2m18 0h4m2 0h2m8 0h2m30 0h2m4 0h2m6 0h4m62 0h2m8 0h2m8 0h2m2 0h2m10 0h6m4 0h6m8 0h2m16 0h6m2 0h4m4 0h2m8 0h2M150 266h2m4 0h2m4 0h2m38 0h2m16 0h2m14 0h4m10 0h2m12 0h2m2 0h2m30 0h2m2 0h2m16 0h2m12 0h2m4 0h2m64 0h2m6 0h2m2 0h2M150 270h2m10 0h2m244 0h6m6 0h2M412 274h2M212 282h2m18 0h2m10 0h2m2 0h2m14 0h2m18 0h2m6 0h2m12 0h6m8 0h2m6 0h4m32 0h2m42 0h4M188 286h2m12 0h2m8 0h2m18 0h2m4 0h2m4 0h2m2 0h2m2 0h2m6 0h2m22 0h2m6 0h4m12 0h2m100 0h2M166 290h2m8 0h2m10 0h2m22 0h2m20 0h2m6 0h2m4 0h2m32 0h2m4 0h2m8 0h4m28 0h2M188 294h2m22 0h2m34 0h2m38 0h2m4 0h2m4 0h2m14 0h2m84 0h2M176 298h2m10 0h2m40 0h2m16 0h2m32 0h2m2 0h4m4 0h8M162 302h2m2 0h2m20 0h2m58 0h2m36 0h4m6 0h4m6 0h2M166 306h2m80 0h2m40 0h2m2 0h6m106 0h2M282 310h2m12 0h4M296 314h2M282 318h2m18 0h2m102 0h2M294 322h2M276 330h2M232 334h2m42 0h2m28 0h2M232 338h2m6 0h2m50 0h2M164 342h2m66 0h2m56 0h4M212 346h2m70 0h2m2 0h2m40 0h2M268 350h2m8 0h2m2 0h4m4 0h2m6 0h2M240 354h2m40 0h2m8 0h4m18 0h2m4 0h2M226 358h2m54 0h4m4 0h2m12 0h2m8 0h2m4 0h2M226 362h2m54 0h2m10 0h2m2 0h2m20 0h2m8 0h2M240 366h2m72 0h2m8 0h2m4 0h2M278 370h2m26 0h2m6 0h2M276 374h2m14 0h4m10 0h2m6 0h2m8 0h2M278 378h2m12 0h2m32 0h2M202 382h2m84 0h8m28 0h2M240 386h2m34 0h4m8 0h2m4 0h2M240 390h2m36 0h2m20 0h2M278 394h2m8 0h2M264 398h2M240 402h2m24 0h2m24 0h2m106 0h2M240 406h2m24 0h2m24 0h2M240 414h2M204 422h2m34 0h2m36 0h2m8 0h2M188 426h2m46 0h2m2 0h2m36 0h2M240 430h2m74 0h2M240 434h2m74 0h2m6 0h2m30 0h2M286 438h2M270 442h2m14 0h2m24 0h2" stroke="#2cde48" stroke-width="4"/><path d="M186 2h2m54 0h2m28 0h2m6 0h2m2 0h2m18 0h2m2 0h2m12 0h2m2 0h2m78 0h2m4 0h2M240 6h2m30 0h2m6 0h2m2 0h2m2 0h2m4 0h2m4 0h2m2 0h2m6 0h2M258 10h2m26 0h4m10 0h2m10 0h2m6 0h2m32 0h2M186 14h2m12 0h2m56 0h2m6 0h2m4 0h2m4 0h2m20 0h2m18 0h4M186 18h2m12 0h2m60 0h2m8 0h2m2 0h2m22 0h2m2 0h2m8 0h2m4 0h2M248 22h2m30 0h2m2 0h6m20 0h4m6 0h2m32 0h2M226 26h2m58 0h2m2 0h2m2 0h2m10 0h2m14 0h2M294 34h2M286 38h2M284 42h2m10 0h2M282 46h4m2 0h2M284 50h2m10 0h2M282 54h2M284 58h2M282 62h2m36 0h2M246 74h2m70 0h2M284 78h4M284 82h4m10 0h2M252 86h2m30 0h2m8 0h2m20 0h2M252 90h2m18 0h2m10 0h2m12 0h2M242 98h2M282 102h2m14 0h2M282 106h2M282 110h2M298 114h2m6 0h2M282 122h2M282 142h2M210 158h2M36 190h2m4 0h2m6 0h2m16 0h2m44 0h2m14 0h2m28 0h2m10 0h2m2 0h2m2 0h2m10 0h2m6 0h2m32 0h6m4 0h6m2 0h2m16 0h2m36 0h4m4 0h2m2 0h2m26 0h2m10 0h2m12 0h2m12 0h2m6 0h2m60 0h2m34 0h2m2 0h2M30 194h2m20 0h4m12 0h2m12 0h2m16 0h2m12 0h2m14 0h2m8 0h2m2 0h2m2 0h2m28 0h2m38 0h4m2 0h2m8 0h2m2 0h2m28 0h2m4 0h2m2 0h2m2 0h2m10 0h2m18 0h2m6 0h2m24 0h2m12 0h2m10 0h2m6 0h2m2 0h4m10 0h4m2 0h2m12 0h2m2 0h2m18 0h2m10 0h4m28 0h2m16 0h1M30 198h2m24 0h2m6 0h2m82 0h2m4 0h2m44 0h2m4 0h2m30 0h2m16 0h2m4 0h4m2 0h4m6 0h2m14 0h4m18 0h2m46 0h2m34 0h4m8 0h2m6 0h2m4 0h2m26 0h2m4 0h2m18 0h2m22 0h2M0 202h4m44 0h2m14 0h2m10 0h2m16 0h2m18 0h2m4 0h8m2 0h2m14 0h4m4 0h2m6 0h2m2 0h2m38 0h2m2 0h6m14 0h2m2 0h2m4 0h2m2 0h4m2 0h4m8 0h2m6 0h2m10 0h2m6 0h4m22 0h2m42 0h2m2 0h2m56 0h2m10 0h2m40 0h2m4 0h2m20 0h2M0 206h2m28 0h2m82 0h2m4 0h2m8 0h2m14 0h4m16 0h2m2 0h2m28 0h2m8 0h2m6 0h2m14 0h2m14 0h2m38 0h2m24 0h2m26 0h2m18 0h2m56 0h2m12 0h2m4 0h2m14 0h2m2 0h2m8 0h2m6 0h2m2 0h2M14 210h2m14 0h2m12 0h2m18 0h2m22 0h2m14 0h2m8 0h2m24 0h2m24 0h2m32 0h2m2 0h4m8 0h6m12 0h2m14 0h4m10 0h2m2 0h4m14 0h2m76 0h2m6 0h2m30 0h2m20 0h2m8 0h2m34 0h2M10 214h2m2 0h2m28 0h2m2 0h2m14 0h2m38 0h2m8 0h2m24 0h2m18 0h4m6 0h2m32 0h4m10 0h2m4 0h2m10 0h2m6 0h4m2 0h2m10 0h2m2 0h4m14 0h2m14 0h2m6 0h2m50 0h2m10 0h2m8 0h2m4 0h2m92 0h2M4 218h2m40 0h4m4 0h2m4 0h6m48 0h2m6 0h2m12 0h2m14 0h2m36 0h2m2 0h2m8 0h2m16 0h4m2 0h2m6 0h2m2 0h2m4 0h2m38 0h2m8 0h2m10 0h2m14 0h2m42 0h2m2 0h2m58 0h2m42 0h2m16 0h2m6 0h4M4 222h2m20 0h2m18 0h2m4 0h2m10 0h2m28 0h2m18 0h2m2 0h2m2 0h2m10 0h2m4 0h2m10 0h2m70 0h2m2 0h2m6 0h2m2 0h2m4 0h2m66 0h2m4 0h6m118 0h2m30 0h2m4 0h2m16 0h2M54 226h2m58 0h2m2 0h2m8 0h4m8 0h2m26 0h4m44 0h2m58 0h2m36 0h2m46 0h2m24 0h2m18 0h2m2 0h2m22 0h2m10 0h2m48 0h2m6 0h1M48 230h2m4 0h2m4 0h2m2 0h2m16 0h2m32 0h4m46 0h4m22 0h2m2 0h2m18 0h2m4 0h2m4 0h2m4 0h2m14 0h2m24 0h2m2 0h4m30 0h2m8 0h2m22 0h2m36 0h2m24 0h2m12 0h2m20 0h2m36 0h2m10 0h2M4 234h2m46 0h2m6 0h2m2 0h2m18 0h2m40 0h6m6 0h4m10 0h2m8 0h2m54 0h2m4 0h2m2 0h2m14 0h2m4 0h2m10 0h2m12 0h4m8 0h4m6 0h2m26 0h2m32 0h4m38 0h2m14 0h2m2 0h4m2 0h2m16 0h2m4 0h2m10 0h2m10 0h2m8 0h2m4 0h2M52 238h2m10 0h4m28 0h4m28 0h4m8 0h2m26 0h2m24 0h2m20 0h4m4 0h2m10 0h2m16 0h2m20 0h2m12 0h2m4 0h4m10 0h2m12 0h4m34 0h2m34 0h2m2 0h2m14 0h2m2 0h4m26 0h2m2 0h2m26 0h2m8 0h2M24 242h2m26 0h2m30 0h2m28 0h6m12 0h2m24 0h2m2 0h2m2 0h2m2 0h2m4 0h2m6 0h2m8 0h2m16 0h2m18 0h2m4 0h2m4 0h2m8 0h2m10 0h2m8 0h2m6 0h2m74 0h2m4 0h2m54 0h2m8 0h2m20 0h2m44 0h2m2 0h2M24 246h2m14 0h2m10 0h2m26 0h2m14 0h2m16 0h2m2 0h2m2 0h2m32 0h4m8 0h2m6 0h2m54 0h2m10 0h2m18 0h2m12 0h2m44 0h2m40 0h2m34 0h4m18 0h2m18 0h2m14 0h2m20 0h2M42 250h2m2 0h2m10 0h2m46 0h2m24 0h4m14 0h2m14 0h2m58 0h2m8 0h4m4 0h2m18 0h2m20 0h2m2 0h2m18 0h2m10 0h2m8 0h2m8 0h2m2 0h2m56 0h6m10 0h2m76 0h2M18 254h2m4 0h2m16 0h2m2 0h2m36 0h2m10 0h2m34 0h2m4 0h2m22 0h2m48 0h2m12 0h6m4 0h2m6 0h4m2 0h2m2 0h2m12 0h2m38 0h2m6 0h2m24 0h2m2 0h2m60 0h2m14 0h2m2 0h2m6 0h2m6 0h6m8 0h2m22 0h2m2 0h2M24 258h2m20 0h2m10 0h2m16 0h2m10 0h2m48 0h2m34 0h4m50 0h4m2 0h2m34 0h2m16 0h2m26 0h2m24 0h2m48 0h2m4 0h2m2 0h2m2 0h2m2 0h2m18 0h2m4 0h2m8 0h2m4 0h2m20 0h2m2 0h2m10 0h2M18 262h2m22 0h2m2 0h2m4 0h2m4 0h2m58 0h2m18 0h2m2 0h2m6 0h2m4 0h2m16 0h2m26 0h2m12 0h2m4 0h2m4 0h2m4 0h2m14 0h2m12 0h2m22 0h2m10 0h2m34 0h4m2 0h2m40 0h2m6 0h2m4 0h2m2 0h2m4 0h2m2 0h2m16 0h2m16 0h2m36 0h2M176 266h2m44 0h4m16 0h2m2 0h4m26 0h2m6 0h2m6 0h4m20 0h2m94 0h2M408 278h2M176 282h2m24 0h2m4 0h2m76 0h2m10 0h2M208 286h2m20 0h2m10 0h2m38 0h2m2 0h2m10 0h2m30 0h2m10 0h2m20 0h2M208 290h2m20 0h4m4 0h2m54 0h2m12 0h2m6 0h2M230 294h4m4 0h2m42 0h2m2 0h2m2 0h2m4 0h4M162 298h2m120 0h2m20 0h2M284 302h2m8 0h2M162 306h2m118 0h2M284 310h2M284 314h2m8 0h2M284 322h2M284 330h2M284 334h2M284 338h2m2 0h2M284 342h2m2 0h2M320 350h2M284 354h2M330 358h2M314 362h2M278 366h2m2 0h2m8 0h4M240 370h2m40 0h2m8 0h4M240 374h2M240 378h2m40 0h2M240 382h2m36 0h2M370 386h2M240 394h2m22 0h2M264 402h2M278 418h2" stroke="#4aed2f" stroke-width="4"/><path d="M206 2h2m58 0h2m18 0h2m2 0h2m18 0h4M186 6h2m18 0h2m62 0h2m18 0h2m14 0h2m6 0h2m10 0h2M186 10h2m78 0h2m2 0h4m10 0h2m8 0h2m26 0h2M248 14h2m20 0h2m12 0h2m2 0h2m4 0h2m8 0h2m6 0h4M248 18h2m20 0h2m8 0h2m2 0h2m2 0h4m2 0h2m2 0h2m12 0h2m12 0h2M292 22h2m4 0h2M296 30h2M296 34h2M296 38h2M282 42h2M284 54h2M282 58h2M284 62h2M284 70h2M298 86h2M272 94h2m8 0h2m14 0h2M272 98h2m24 0h2M306 102h2M306 106h2M306 110h2M48 190h2m2 0h2m50 0h2m60 0h4m4 0h2m2 0h2m26 0h2m16 0h2m24 0h2m4 0h2m16 0h6m34 0h2m6 0h2m76 0h2m70 0h2M48 194h2m6 0h2m102 0h2m44 0h2m48 0h2m18 0h2m20 0h2m80 0h2m66 0h2m2 0h2M48 198h2m4 0h2m84 0h2m18 0h2m114 0h2m20 0h2m62 0h2m16 0h2m6 0h2m34 0h2m22 0h2m2 0h2m4 0h2M54 202h2m200 0h2m18 0h2m6 0h2m26 0h2m48 0h2m60 0h2m32 0h2m20 0h2M54 206h2m68 0h2m36 0h2m48 0h2m26 0h2m2 0h2m10 0h2m4 0h2m12 0h2m6 0h2m6 0h2m18 0h2m48 0h2m60 0h2M46 210h2m6 0h2m92 0h2m8 0h6m4 0h2m24 0h2m48 0h2m10 0h2m4 0h2m12 0h4m4 0h2m10 0h2m10 0h2m2 0h2m48 0h2m68 0h2m8 0h2M46 214h2m6 0h2m6 0h2m84 0h2m8 0h2m6 0h4m24 0h2m44 0h2m10 0h2m2 0h2m6 0h2m10 0h4m6 0h2m8 0h4m62 0h2m68 0h2m8 0h2m32 0h2M14 218h2m102 0h2m20 0h2m16 0h2m74 0h2m42 0h2m82 0h2m84 0h2m48 0h2m6 0h1M14 222h2m38 0h2m102 0h2m44 0h2m28 0h2m14 0h2m34 0h2m74 0h2m84 0h2m48 0h2m2 0h2m2 0h1M46 226h4m2 0h2m136 0h2m2 0h2m8 0h2m12 0h2m20 0h2m2 0h4m2 0h4m24 0h4m4 0h2m60 0h2m34 0h2m18 0h2m20 0h4M46 230h2m4 0h2m60 0h2m78 0h2m8 0h4m10 0h2m20 0h2m2 0h4m4 0h2m24 0h2m6 0h2m96 0h2m18 0h2m22 0h2m6 0h2m44 0h2M46 234h2m50 0h2m22 0h2m70 0h2m44 0h2m4 0h2m18 0h2m18 0h2m34 0h2m80 0h2m30 0h2m10 0h2m32 0h4M4 238h2m78 0h2m52 0h2m88 0h2m8 0h2m4 0h4m2 0h2m14 0h2m18 0h4m70 0h2m42 0h2m30 0h2m10 0h2m26 0h2m4 0h2M96 242h2m6 0h2m116 0h8m16 0h2m2 0h2m34 0h2m36 0h4m70 0h2m2 0h4m18 0h2m10 0h2m10 0h2m2 0h2m2 0h2m18 0h2m4 0h4M194 246h2m16 0h2m8 0h8m8 0h2m6 0h2m2 0h2m20 0h2m2 0h2m6 0h4m34 0h2m74 0h2m32 0h2m2 0h2m10 0h2m2 0h2m2 0h2m18 0h2m6 0h2m18 0h2M52 250h2m2 0h2m100 0h2m52 0h2m10 0h2m2 0h2m16 0h2m2 0h2m16 0h2m6 0h2m6 0h2m2 0h2m108 0h2m10 0h2m32 0h2m2 0h2m6 0h2m26 0h4m2 0h2m12 0h2M52 254h2m2 0h2m8 0h2m66 0h2m14 0h2m6 0h2m6 0h2m56 0h2m12 0h2m32 0h2m2 0h2m8 0h4m32 0h2m74 0h2m10 0h2m40 0h2m2 0h2m26 0h2m4 0h2m12 0h2M52 258h2m2 0h2m60 0h2m30 0h2m6 0h2m18 0h2m14 0h2m16 0h2m4 0h4m2 0h4m8 0h4m6 0h2m2 0h2m20 0h2m2 0h2m8 0h2m8 0h2m86 0h2m8 0h2m32 0h2m26 0h2m46 0h2M50 262h2m4 0h2m74 0h2m42 0h2m16 0h2m16 0h2m4 0h4m2 0h4m8 0h4m6 0h2m24 0h2m2 0h2m8 0h2m8 0h2m96 0h2m14 0h2m16 0h2m22 0h2M226 266h2m44 0h2m12 0h4m6 0h2m40 0h2M170 270h4m14 0h2m2 0h4m6 0h2m14 0h2m10 0h2m4 0h2m18 0h2m12 0h2m6 0h2m20 0h2m12 0h2m2 0h2m6 0h2m12 0h2m4 0h2m6 0h6m4 0h2m18 0h2m16 0h2M176 274h2m4 0h2m24 0h2m2 0h2m10 0h2m30 0h2m8 0h2m16 0h2m12 0h2m2 0h2m2 0h2m4 0h2m20 0h4m2 0h2m6 0h2m20 0h2m6 0h2m4 0h2M180 278h2m6 0h2m24 0h2m12 0h2m8 0h2m6 0h2m10 0h4m2 0h6m22 0h2m38 0h6m12 0h2m2 0h2m18 0h2m8 0h2m12 0h2m6 0h2M242 282h2m44 0h2m6 0h2m18 0h2M176 286h2m110 0h2m6 0h2m8 0h2m8 0h2M286 290h2m8 0h2m8 0h2M306 294h2M290 298h2M282 302h2m6 0h2M284 306h2M294 310h2M284 318h2m8 0h2M284 326h2M292 358h2M292 362h2M282 374h2M264 390h2" stroke="#91e320" stroke-width="4"/><path d="M276 2h2m4 0h2m8 0h2m2 0h2m16 0h2M266 6h2m8 0h2m4 0h2m2 0h2m4 0h2m2 0h2m12 0h2M280 10h4m6 0h4m2 0h2m8 0h2m2 0h2m2 0h2M280 14h4m6 0h4m2 0h2m8 0h2m2 0h2M282 18h2m8 0h2m2 0h2m8 0h2m2 0h2m10 0h2M282 22h2m10 0h4m8 0h2M282 26h2m12 0h2M282 30h2M282 34h2M282 38h2M296 46h2M282 98h2" stroke="#c58216" stroke-width="4"/><path d="M174 270h2m4 0h2m2 0h2m10 0h4m6 0h2m6 0h4m2 0h2m6 0h2m4 0h2m4 0h4m2 0h2m6 0h2m2 0h2m2 0h6m6 0h4m4 0h2m6 0h4m2 0h2m26 0h2m4 0h2m4 0h4m20 0h2m14 0h2m16 0h4m6 0h4M170 274h6m4 0h2m10 0h2m2 0h2m2 0h4m2 0h2m2 0h2m2 0h4m8 0h6m4 0h6m2 0h2m6 0h2m10 0h2m2 0h2m4 0h4m2 0h4m4 0h2m2 0h2m10 0h2m2 0h2m12 0h4m4 0h2m10 0h4m6 0h2m2 0h4m6 0h2m14 0h2m2 0h2m4 0h2m8 0h2M176 278h2m4 0h4m4 0h2m2 0h2m2 0h2m4 0h8m8 0h2m4 0h2m12 0h2m6 0h2m28 0h4m2 0h2m4 0h2m14 0h4m10 0h4m2 0h2m10 0h4m2 0h2m2 0h2m8 0h2m12 0h2m2 0h2m2 0h2m4 0h2m2 0h2" stroke="#d72a0b" stroke-width="4"/><path d="M178 270h2m2 0h2m6 0h2m12 0h2m2 0h4m10 0h6m16 0h2m2 0h6m6 0h2m6 0h2m2 0h2m6 0h2m2 0h4m6 0h2m6 0h8m6 0h2m10 0h2m4 0h2m8 0h2m2 0h2m16 0h2m2 0h6m4 0h2m4 0h2m2 0h4m4 0h4M178 274h2m8 0h4m2 0h2m8 0h2m14 0h2m10 0h2m12 0h2m2 0h2m2 0h2m4 0h4m26 0h2m2 0h2m4 0h2m8 0h2m4 0h2m2 0h2m4 0h4m2 0h2m4 0h2m6 0h2m12 0h2m2 0h2m2 0h2m2 0h4m14 0h2m2 0h6m4 0h2M170 278h2m2 0h2m2 0h2m6 0h2m4 0h2m2 0h2m4 0h2m8 0h2m4 0h2m2 0h4m4 0h4m2 0h2m14 0h6m12 0h8m4 0h2m4 0h2m4 0h12m4 0h2m2 0h2m8 0h2m4 0h2m10 0h2m2 0h2m4 0h2m2 0h2m6 0h8m6 0h2m2 0h2m4 0h2m10 0h4" stroke="#be0000" stroke-width="4"/></g><g filter="url(#fdb2)"><ellipse cx="180.3" cy="274.8" rx="3.0" ry="2.7" fill="#000" opacity="0.8"/><ellipse cx="180.7" cy="275.2" rx="3.2" ry="2.8" fill="#000" opacity="0.8"/><ellipse cx="254.0" cy="272.9" rx="2.0" ry="2.6" fill="#000" opacity="0.8"/><ellipse cx="254.7" cy="272.3" rx="3.2" ry="2.3" fill="#000" opacity="0.8"/><ellipse cx="282.9" cy="272.2" rx="3.5" ry="3.1" fill="#000" opacity="0.8"/><ellipse cx="288.0" cy="274.5" rx="2.1" ry="2.5" fill="#000" opacity="0.8"/><ellipse cx="320.0" cy="272.5" rx="3.4" ry="2.6" fill="#000" opacity="0.8"/><ellipse cx="317.2" cy="275.3" rx="2.2" ry="3.4" fill="#000" opacity="0.8"/><ellipse cx="387.6" cy="274.2" rx="2.5" ry="2.7" fill="#000" opacity="0.8"/><ellipse cx="385.5" cy="272.1" rx="3.3" ry="2.4" fill="#000" opacity="0.8"/><rect x="125" y="156" width="330" height="4" fill="#0014a0" opacity="0.6"/></g><g><path d="M189.2 0 L183.8 159" stroke="#a8d820" stroke-width="2.8"/><path d="M189.2 0 L183.8 159" stroke="#e01a0a" stroke-width="1.8"/><path d="M189.2 0 L188.2830188679245 27" stroke="#000" stroke-width="2.6"/><path d="M256.29999999999995 0 L251.70000000000005 159" stroke="#a8d820" stroke-width="2.8"/><path d="M256.29999999999995 0 L251.70000000000005 159" stroke="#e01a0a" stroke-width="1.8"/><path d="M256.29999999999995 0 L255.5188679245283 27" stroke="#000" stroke-width="2.6"/><path d="M324.70000000000005 0 L319.29999999999995 159" stroke="#a8d820" stroke-width="2.8"/><path d="M324.70000000000005 0 L319.29999999999995 159" stroke="#e01a0a" stroke-width="1.8"/><path d="M324.70000000000005 0 L323.7830188679245 27" stroke="#000" stroke-width="2.6"/><path d="M392 0 L387.20000000000005 159" stroke="#a8d820" stroke-width="2.8"/><path d="M392 0 L387.20000000000005 159" stroke="#e01a0a" stroke-width="1.8"/><path d="M392 0 L391.18490566037735 27" stroke="#000" stroke-width="2.6"/><path d="M184.8 268 L180 443" stroke="#a8d820" stroke-width="2.8"/><path d="M184.8 268 L180 443" stroke="#e01a0a" stroke-width="1.8"/><path d="M184.8 268 L183.9771428571429 298" stroke="#000" stroke-width="2.6"/><path d="M252 268 L248.39999999999998 443" stroke="#a8d820" stroke-width="2.8"/><path d="M252 268 L248.39999999999998 443" stroke="#e01a0a" stroke-width="1.8"/><path d="M252 268 L250.14857142857147 358" stroke="#000" stroke-width="2.6"/><path d="M320.79999999999995 268 L316.4 443" stroke="#a8d820" stroke-width="2.8"/><path d="M320.79999999999995 268 L316.4 443" stroke="#e01a0a" stroke-width="1.8"/><path d="M320.79999999999995 268 L319.03999999999996 338" stroke="#000" stroke-width="2.6"/><path d="M388.4 268 L383.6 443" stroke="#a8d820" stroke-width="2.8"/><path d="M388.4 268 L383.6 443" stroke="#e01a0a" stroke-width="1.8"/><path d="M388.4 268 L387.3028571428571 308" stroke="#000" stroke-width="2.6"/><path d="M185.5 184 L184.8 268" stroke="#000" stroke-width="2.6"/><path d="M185.5 184 L185.5 198" stroke="#e03010" stroke-width="2.2"/></g></svg><svg style="position:absolute;left:290px;top:935px" width="520" height="32"><path d="M19.7 0v10M36.7 0v10M53.7 0v10M70.7 0v10M87.7 0v15M104.7 0v10M121.7 0v10M138.7 0v10M155.7 0v10M172.7 0v15M189.7 0v10M206.7 0v10M223.7 0v10M240.7 0v10M257.7 0v15M274.7 0v10M291.7 0v10M308.7 0v10M325.7 0v10M342.7 0v15M359.7 0v10M376.7 0v10M393.7 0v10M410.7 0v10M427.7 0v15M444.7 0v10M461.7 0v10M478.7 0v10M495.7 0v10" stroke="#111" stroke-width="1"/><path d="M255 0 V31" stroke="#e06060" stroke-width="1.2"/></svg><div style="position:absolute;left:177.7px;width:400px;text-align:center;top:950px;white-space:nowrap;font-size:11px;line-height:14px;color:#111">500Hz</div><div style="position:absolute;left:262.7px;width:400px;text-align:center;top:950px;white-space:nowrap;font-size:11px;line-height:14px;color:#111">1000Hz</div><div style="position:absolute;left:347.70000000000005px;width:400px;text-align:center;top:950px;white-space:nowrap;font-size:11px;line-height:14px;color:#111">1500Hz</div><div style="position:absolute;left:432.70000000000005px;width:400px;text-align:center;top:950px;white-space:nowrap;font-size:11px;line-height:14px;color:#111">2000Hz</div><div style="position:absolute;left:517.7px;width:400px;text-align:center;top:950px;white-space:nowrap;font-size:11px;line-height:14px;color:#111">2500Hz</div><div style="position:absolute;left:241px;top:968px;width:571px;height:25px;background:#f0f0f0;border-top:1px solid #dadada;border-bottom:1px solid #dadada;box-sizing:border-box"></div><div style="position:absolute;left:241px;top:970px;width:16px;height:20px;background:linear-gradient(#f4f4f4,#e0e0e0)"></div><svg style="position:absolute;left:244px;top:975px" width="8" height="10"><path d="M6 0 L0 5 L6 10z" fill="#888"/></svg><div style="position:absolute;left:258px;top:969px;width:63px;height:22px;background:#fdfdfd;border:1px solid #cfcfcf;border-bottom:none;border-radius:2px 2px 0 0;box-sizing:border-box"></div><div style="position:absolute;left:264px;top:972px;white-space:nowrap;font-size:12px;line-height:14px;color:#111;font-weight:bold">Waterfall</div><div style="position:absolute;left:322px;top:971px;width:69px;height:19px;background:linear-gradient(#ececec,#dcdcdc);border:1px solid #c8c8c8;border-radius:2px 2px 0 0;box-sizing:border-box"></div><div style="position:absolute;left:329px;top:972px;white-space:nowrap;font-size:12px;line-height:14px;color:#222">Spectrum</div><div style="position:absolute;left:392px;top:971px;width:55px;height:19px;background:linear-gradient(#ececec,#dcdcdc);border:1px solid #c8c8c8;border-radius:2px 2px 0 0;box-sizing:border-box"></div><div style="position:absolute;left:399px;top:972px;white-space:nowrap;font-size:12px;line-height:14px;color:#222">Scatter</div><div style="position:absolute;left:448px;top:971px;width:69px;height:19px;background:linear-gradient(#ececec,#dcdcdc);border:1px solid #c8c8c8;border-radius:2px 2px 0 0;box-sizing:border-box"></div><div style="position:absolute;left:455px;top:972px;white-space:nowrap;font-size:12px;line-height:14px;color:#222">Frm Radio</div><div style="position:absolute;left:518px;top:971px;width:60px;height:19px;background:linear-gradient(#ececec,#dcdcdc);border:1px solid #c8c8c8;border-radius:2px 2px 0 0;box-sizing:border-box"></div><div style="position:absolute;left:525px;top:972px;white-space:nowrap;font-size:12px;line-height:14px;color:#222">Frm Mic</div><div style="position:absolute;left:578px;top:971px;width:104px;height:19px;background:linear-gradient(#ececec,#dcdcdc);border:1px solid #c8c8c8;border-radius:2px 2px 0 0;box-sizing:border-box"></div><div style="position:absolute;left:585px;top:972px;white-space:nowrap;font-size:12px;line-height:14px;color:#222">To Spkr/Hdphns</div><div style="position:absolute;left:683px;top:971px;width:65px;height:19px;background:linear-gradient(#ececec,#dcdcdc);border:1px solid #c8c8c8;border-radius:2px 2px 0 0;box-sizing:border-box"></div><div style="position:absolute;left:690px;top:972px;white-space:nowrap;font-size:12px;line-height:14px;color:#222">Timing &Delta;</div><div style="position:absolute;left:749px;top:971px;width:63px;height:19px;background:linear-gradient(#ececec,#dcdcdc);border:1px solid #c8c8c8;border-radius:2px 2px 0 0;box-sizing:border-box"></div><div style="position:absolute;left:756px;top:972px;white-space:nowrap;font-size:12px;line-height:14px;color:#222">Frequen</div><div style="position:absolute;left:795px;top:970px;width:17px;height:20px;background:#e8e8e8"></div><svg style="position:absolute;left:799px;top:974px" width="8" height="11"><path d="M0 0 L7 5.5 L0 11z" fill="#111"/></svg><div style="position:absolute;left:241px;top:996px;width:88px;height:34px;box-sizing:border-box;background:#f0f0f0;border:1px solid #fff;border-right:1px solid #6f6f6f;border-bottom:1px solid #6f6f6f;box-shadow:inset -1px -1px 0 #a0a0a0, 1px 1px 0 #888"></div><div style="position:absolute;left:85px;width:400px;text-align:center;top:1005px;white-space:nowrap;font-size:12px;line-height:16px;color:#111">Clear</div><div style="position:absolute;left:336px;top:998px;width:471px;height:20px;background:#fff;border:1px solid #9a9a9a;border-right-color:#e0e0e0;box-sizing:border-box"></div><div style="position:absolute;left:818px;top:488px;width:106px;height:213px;border:1px solid #d5d5d5;box-shadow:inset 1px 1px 0 #fff;box-sizing:border-box;background:#e3e3e3"></div><div style="position:absolute;left:824px;top:482px;padding:0 2px;background:#f0f0f0;font-size:12px;line-height:15px;color:#111;background:linear-gradient(#f0f0f0 6px,#e3e3e3 6px)">Squelch</div><div style="position:absolute;left:865px;top:509px;width:2px;height:149px;background:#bdbdbd;border-right:1px solid #fff"></div><svg style="position:absolute;left:878px;top:512px" width="8" height="145"><path d="M4 1 V143" stroke="#333" stroke-width="3.5" stroke-dasharray="1.3 1.7"/></svg><svg style="position:absolute;left:856px;top:598px" width="26" height="15"><path d="M1 2 H18 L24 7 L18 12 H1z" fill="#ececec" stroke="#999"/></svg><div style="position:absolute;left:672px;width:400px;text-align:center;top:667px;white-space:nowrap;font-size:12px;line-height:14px;color:#111">2.0</div><div style="position:absolute;left:864px;top:684px;width:11px;height:11px;background:#fff;border:1px solid #aaa;box-sizing:border-box"></div><div style="position:absolute;left:820px;top:713px;width:101px;height:85px;border:1px solid #d5d5d5;box-shadow:inset 1px 1px 0 #fff;box-sizing:border-box;background:#e3e3e3"></div><div style="position:absolute;left:826px;top:707px;padding:0 2px;background:#f0f0f0;font-size:12px;line-height:15px;color:#111;background:linear-gradient(#f0f0f0 6px,#e3e3e3 6px)">Mode</div><div style="position:absolute;left:827px;top:728px;width:11px;height:11px;border-radius:50%;border:1px solid #c8c8c8;background:#f3f3f3;box-sizing:border-box"></div><div style="position:absolute;left:844px;top:727px;white-space:nowrap;font-size:11px;line-height:14px;color:#a8a8a8">700C</div><div style="position:absolute;left:827px;top:745px;width:11px;height:11px;border-radius:50%;border:1px solid #c8c8c8;background:#f3f3f3;box-sizing:border-box"></div><div style="position:absolute;left:844px;top:744px;white-space:nowrap;font-size:11px;line-height:14px;color:#a8a8a8">700D</div><div style="position:absolute;left:827px;top:762px;width:11px;height:11px;border-radius:50%;border:1px solid #c8c8c8;background:#f3f3f3;box-sizing:border-box"></div><div style="position:absolute;left:830px;top:765px;width:5px;height:5px;border-radius:50%;background:#bbb"></div><div style="position:absolute;left:844px;top:761px;white-space:nowrap;font-size:11px;line-height:14px;color:#a8a8a8">800XA</div><div style="position:absolute;left:827px;top:779px;width:11px;height:11px;border-radius:50%;border:1px solid #c8c8c8;background:#f3f3f3;box-sizing:border-box"></div><div style="position:absolute;left:844px;top:778px;white-space:nowrap;font-size:11px;line-height:14px;color:#a8a8a8">1600</div><div style="position:absolute;left:820px;top:813px;width:101px;height:217px;border:1px solid #d5d5d5;box-shadow:inset 1px 1px 0 #fff;box-sizing:border-box;background:#e3e3e3"></div><div style="position:absolute;left:826px;top:807px;padding:0 2px;background:#f0f0f0;font-size:12px;line-height:15px;color:#111;background:linear-gradient(#f0f0f0 6px,#e3e3e3 6px)">Control</div><div style="position:absolute;left:827px;top:826px;width:88px;height:25px;box-sizing:border-box;background:repeating-linear-gradient(45deg,#f6f6f6 0 1px,#ececec 1px 2px);border:1px solid #555;box-shadow:inset 1px 1px 0 #888"></div><div style="position:absolute;left:671px;width:400px;text-align:center;top:830px;white-space:nowrap;font-size:12px;line-height:16px;color:#111">Stop</div><div style="position:absolute;left:827px;top:855px;width:88px;height:25px;box-sizing:border-box;background:#f0f0f0;border:1px solid #fff;border-right:1px solid #6f6f6f;border-bottom:1px solid #6f6f6f;box-shadow:inset -1px -1px 0 #a0a0a0, 1px 1px 0 #888"></div><div style="position:absolute;left:671px;width:400px;text-align:center;top:859px;white-space:nowrap;font-size:12px;line-height:16px;color:#111">Split</div><div style="position:absolute;left:827px;top:885px;width:88px;height:26px;box-sizing:border-box;background:#f0f0f0;border:1px solid #fff;border-right:1px solid #6f6f6f;border-bottom:1px solid #6f6f6f;box-shadow:inset -1px -1px 0 #a0a0a0, 1px 1px 0 #888"></div><div style="position:absolute;left:671px;width:400px;text-align:center;top:890px;white-space:nowrap;font-size:12px;line-height:16px;color:#111">Analog</div><div style="position:absolute;left:827px;top:915px;width:88px;height:25px;box-sizing:border-box;background:#f0f0f0;border:1px solid #fff;border-right:1px solid #6f6f6f;border-bottom:1px solid #6f6f6f;box-shadow:inset -1px -1px 0 #a0a0a0, 1px 1px 0 #888"></div><div style="position:absolute;left:671px;width:400px;text-align:center;top:919px;white-space:nowrap;font-size:12px;line-height:16px;color:#111">Voice Keyer</div><div style="position:absolute;left:827px;top:945px;width:88px;height:85px;box-sizing:border-box;background:#f0f0f0;border:1px solid #fff;border-right:1px solid #6f6f6f;border-bottom:1px solid #6f6f6f;box-shadow:inset -1px -1px 0 #a0a0a0, 1px 1px 0 #888"></div><div style="position:absolute;left:671px;width:400px;text-align:center;top:979px;white-space:nowrap;font-size:12px;line-height:16px;color:#111">PTT</div><div style="position:absolute;left:859px;top:971px;white-space:nowrap;"></div>
</body></html>
